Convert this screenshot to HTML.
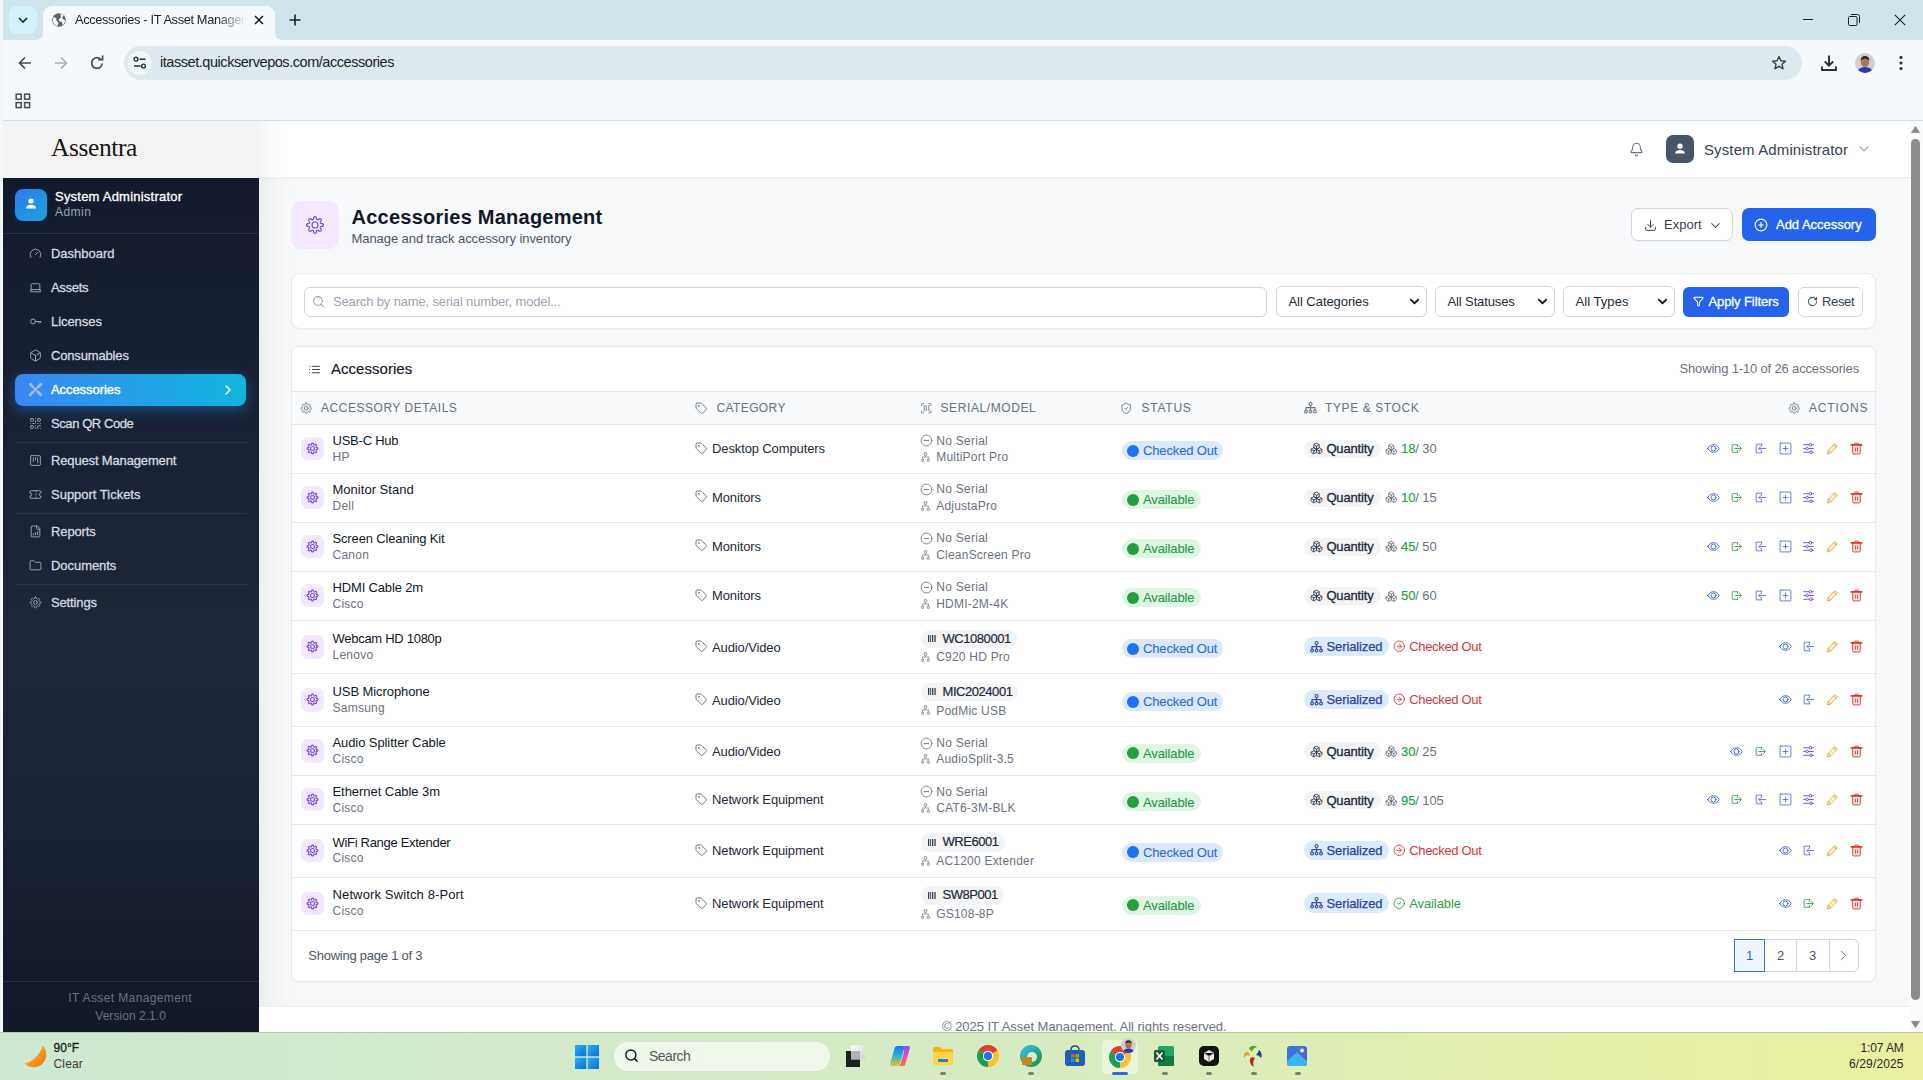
<!DOCTYPE html>
<html><head><meta charset="utf-8">
<style>
*{box-sizing:border-box;margin:0;padding:0}
html,body{width:1923px;height:1080px;overflow:hidden;font-family:"Liberation Sans",sans-serif;background:#fff;position:relative}
.abs{position:absolute}
svg{display:block;overflow:visible}
.t{position:absolute;white-space:nowrap;line-height:1}
</style></head><body>
<div class="abs" style="left:0px;top:0px;width:1923px;height:40px;background:#d0e5eb;"></div>
<div class="abs" style="left:0px;top:40px;width:1923px;height:81px;background:#f6f9fb;"></div>
<div class="abs" style="left:0px;top:120px;width:1923px;height:1px;background:#d6dcdf;"></div>
<div class="abs" style="left:0px;top:0px;width:3px;height:1032px;background:#f4f6f7;"></div>
<div class="abs" style="left:9px;top:6px;width:28px;height:28px;background:#d5f1f9;border-radius:8px;"></div>
<svg class="abs" style="left:18px;top:17px;" width="10" height="6" viewBox="0 0 10 6"><path d="M1 1 L5 5 L9 1" stroke="#1b2a33" stroke-width="1.7" fill="none"/></svg>
<div class="abs" style="left:43px;top:6px;width:232px;height:36px;background:#f6f9fb;border-radius:9px 9px 0 0;"></div>
<svg class="abs" style="left:35px;top:32px;" width="8" height="8" viewBox="0 0 8 8"><path d="M0 8 Q8 8 8 0 L8 8 Z" fill="#f6f9fb"/></svg>
<svg class="abs" style="left:275px;top:32px;" width="8" height="8" viewBox="0 0 8 8"><path d="M8 8 Q0 8 0 0 L0 8 Z" fill="#f6f9fb"/></svg>
<svg class="abs" style="left:51px;top:12px;" width="16" height="16" viewBox="0 0 16 16"><circle cx="8" cy="8" r="6.8" fill="#5f6368"/><path d="M2.6 5.2 C4.6 5.4 5.8 6.4 5.4 7.8 C5.1 9 6.8 9.4 7.2 10.6 C7.6 12 6.8 13.2 6.2 14 C4 13.4 2.4 11.6 1.9 9.2 C1.8 7.8 2.1 6.4 2.6 5.2Z M9.4 1.6 C10.8 2 12 2.8 12.8 3.8 C11.6 4.4 11 5.6 11.5 6.6 C12 7.6 13.4 7.6 14.2 8.6 C14 10.4 13 12.2 11.6 13.2 C11.2 12 11.6 10.8 10.8 10 C9.8 9.2 8.4 9.6 8 8.4 C7.6 7.2 8.8 6.6 9.6 5.8 C10.2 5 9.6 3.4 9.4 1.6Z" fill="#f6f9fb"/></svg>
<div class="t" style="left:75px;top:14.46px;font-size:12.8px;color:#1f1f1f;font-weight:400;letter-spacing:-0.35px;font-family:'Liberation Sans', sans-serif;width:172px;overflow:hidden;-webkit-mask-image:linear-gradient(90deg,#000 82%,transparent 100%);">Accessories - IT Asset Management</div>
<svg class="abs" style="left:254px;top:15px;" width="10" height="10" viewBox="0 0 10 10"><path d="M1 1 L9 9 M9 1 L1 9" stroke="#1f1f1f" stroke-width="1.6"/></svg>
<svg class="abs" style="left:289px;top:14px;" width="12" height="12" viewBox="0 0 12 12"><path d="M6 0.5 V11.5 M0.5 6 H11.5" stroke="#1f1f1f" stroke-width="1.6"/></svg>
<div class="abs" style="left:1803px;top:19px;width:10px;height:1px;background:#1f1f1f;"></div>
<svg class="abs" style="left:1848px;top:14px;" width="12" height="12" viewBox="0 0 12 12"><rect x="0.5" y="2.5" width="8.5" height="9" rx="1.2" stroke="#1f1f1f" fill="none"/><path d="M3 0.5 H9.5 Q11.5 0.5 11.5 2.5 V9" stroke="#1f1f1f" fill="none"/></svg>
<svg class="abs" style="left:1894px;top:14px;" width="12" height="12" viewBox="0 0 12 12"><path d="M0.8 0.8 L11.2 11.2 M11.2 0.8 L0.8 11.2" stroke="#1f1f1f" stroke-width="1.1"/></svg>
<svg class="abs" style="left:17px;top:55px;" width="16" height="16" viewBox="0 0 16 16"><path d="M14 8 H3 M8 2.5 L2.5 8 L8 13.5" stroke="#474c50" stroke-width="1.7" fill="none"/></svg>
<svg class="abs" style="left:53px;top:55px;" width="16" height="16" viewBox="0 0 16 16"><path d="M2 8 H13 M8 2.5 L13.5 8 L8 13.5" stroke="#a9b0b4" stroke-width="1.7" fill="none"/></svg>
<svg class="abs" style="left:89px;top:55px;" width="16" height="16" viewBox="0 0 16 16"><path d="M13.2 8.5 A5.3 5.3 0 1 1 11.6 4.2" stroke="#474c50" stroke-width="1.7" fill="none"/><path d="M9.2 4.6 H13.6 V0.4" stroke="#474c50" stroke-width="1.7" fill="none"/></svg>
<div class="abs" style="left:124px;top:46px;width:1678px;height:34px;background:#dde9ee;border-radius:17px;"></div>
<div class="abs" style="left:128px;top:51px;width:24px;height:24px;background:#f1f6f8;border-radius:12px;"></div>
<svg class="abs" style="left:133px;top:56px;" width="14" height="14" viewBox="0 0 14 14"><circle cx="3" cy="3.2" r="1.9" stroke="#2c3135" stroke-width="1.4" fill="none"/><path d="M6.5 3.2 H12.5" stroke="#2c3135" stroke-width="1.5"/><circle cx="10.5" cy="10" r="1.9" stroke="#2c3135" stroke-width="1.4" fill="none"/><path d="M1 10 H7.5" stroke="#2c3135" stroke-width="1.5"/></svg>
<div class="t" style="left:160px;top:55.43px;font-size:14.5px;color:#1f2326;font-weight:400;letter-spacing:-0.45px;font-family:'Liberation Sans', sans-serif;">itasset.quickservepos.com/accessories</div>
<svg class="abs" style="left:1771px;top:55px;" width="16" height="16" viewBox="0 0 16 16"><path d="M8 1.6 L9.9 5.8 L14.4 6.2 L11 9.2 L12 13.7 L8 11.3 L4 13.7 L5 9.2 L1.6 6.2 L6.1 5.8 Z" stroke="#3a3f43" stroke-width="1.4" fill="none" stroke-linejoin="round"/></svg>
<svg class="abs" style="left:1820px;top:54px;" width="18" height="18" viewBox="0 0 18 18"><path d="M9 1.5 V11.5 M4.8 7.5 L9 11.7 L13.2 7.5 M2 12.5 V16 H16 V12.5" stroke="#2c3135" stroke-width="1.9" fill="none"/></svg>
<svg class="abs" style="left:1855px;top:53px;" width="20" height="20" viewBox="0 0 20 20"><defs><clipPath id="av"><circle cx="10" cy="10" r="10"/></clipPath></defs><g clip-path="url(#av)"><rect width="20" height="20" fill="#cfcfcf"/><ellipse cx="10" cy="9" rx="4.2" ry="5" fill="#a8755a"/><path d="M5.6 7.5 Q6 3 10 3 Q14 3 14.4 7.5 Q12 5.5 10 5.6 Q8 5.5 5.6 7.5Z" fill="#2a1f1a"/><path d="M2 20 Q3 14 10 14 Q17 14 18 20Z" fill="#2b3aa8"/></g></svg>
<svg class="abs" style="left:1897px;top:55px;" width="8" height="16" viewBox="0 0 8 16"><circle cx="4" cy="2.4" r="1.6" fill="#2c3135"/><circle cx="4" cy="8" r="1.6" fill="#2c3135"/><circle cx="4" cy="13.6" r="1.6" fill="#2c3135"/></svg>
<svg class="abs" style="left:15px;top:93px;" width="16" height="16" viewBox="0 0 16 16"><rect x="1.2" y="1.2" width="5" height="5" stroke="#474c50" stroke-width="1.5" fill="none"/><rect x="9.6" y="1.2" width="5" height="5" stroke="#474c50" stroke-width="1.5" fill="none"/><rect x="1.2" y="9.6" width="5" height="5" stroke="#474c50" stroke-width="1.5" fill="none"/><rect x="9.6" y="9.6" width="5" height="5" stroke="#474c50" stroke-width="1.5" fill="none"/></svg>
<div class="abs" style="left:259px;top:121px;width:1651px;height:911px;background:#f8f9fb;"></div>
<div class="abs" style="left:259px;top:178px;width:32px;height:854px;background:linear-gradient(90deg,#eceef0,#f8f9fb);"></div>
<div class="abs" style="left:259px;top:121px;width:1651px;height:57px;background:#ffffff;border-bottom:1px solid #eceef1;box-shadow:0 1px 3px rgba(0,0,0,.03);"></div>
<svg class="abs" style="left:1628.50px;top:141.50px" width="15" height="15" viewBox="0 0 24 24" fill="none" stroke="#6b7280" stroke-width="1.7" stroke-linecap="round" stroke-linejoin="round"><path d="M10.268 21a2 2 0 0 0 3.464 0"/><path d="M3.262 15.326A1 1 0 0 0 4 17h16a1 1 0 0 0 .74-1.673C19.41 13.956 18 12.499 18 8A6 6 0 0 0 6 8c0 4.499-1.411 5.956-2.738 7.326"/></svg>
<div class="abs" style="left:1666px;top:135px;width:28px;height:28px;background:#475569;border-radius:7px;"></div>
<svg class="abs" style="left:1672px;top:141px;" width="16" height="16" viewBox="0 0 16 16"><circle cx="8" cy="5.2" r="2.6" fill="#fff"/><path d="M3.2 12.4 C3.2 10 5 8.9 8 8.9 C11 8.9 12.8 10 12.8 12.4 Z" fill="#fff"/></svg>
<div class="t" style="left:1704px;top:141.50px;font-size:15px;color:#374151;font-weight:400;letter-spacing:0.12px;font-family:'Liberation Sans', sans-serif;">System Administrator</div>
<svg class="abs" style="left:1855.50px;top:141.00px" width="16" height="16" viewBox="0 0 24 24" fill="none" stroke="#9ca3af" stroke-width="1.6" stroke-linecap="round" stroke-linejoin="round"><path d="m6 9 6 6 6-6"/></svg>
<div class="abs" style="left:1910px;top:121px;width:13px;height:911px;background:#fbfbfb;"></div>
<svg class="abs" style="left:1911px;top:126px;" width="9" height="7" viewBox="0 0 9 7"><path d="M0.3 6.7 L4.5 0.3 L8.7 6.7 Z" fill="#8a8a8a" stroke="#8a8a8a" stroke-width=".6" stroke-linejoin="round"/></svg>
<div class="abs" style="left:1911px;top:139px;width:9px;height:861px;background:#8c8c8c;border-radius:5px;"></div>
<svg class="abs" style="left:1911px;top:1021px;" width="9" height="7" viewBox="0 0 9 7"><path d="M0.3 0.3 L4.5 6.7 L8.7 0.3 Z" fill="#8a8a8a" stroke="#8a8a8a" stroke-width=".6" stroke-linejoin="round"/></svg>
<div class="abs" style="left:291px;top:201px;width:48px;height:48px;background:#f3e8ff;border-radius:11px;"></div>
<svg class="abs" style="left:305.00px;top:214.50px" width="20" height="20" viewBox="0 0 24 24" fill="none" stroke="#6d48c8" stroke-width="1.35" stroke-linecap="round" stroke-linejoin="round"><path d="M12.00 2.00 L12.31 2.03 L12.62 2.11 L12.92 2.24 L13.21 2.44 L13.47 2.73 L13.67 3.23 L13.70 4.39 L13.86 4.76 L14.03 5.01 L14.21 5.21 L14.39 5.37 L14.58 5.49 L14.78 5.57 L15.00 5.62 L15.24 5.64 L15.50 5.62 L15.81 5.56 L16.18 5.42 L17.02 4.61 L17.52 4.41 L17.90 4.39 L18.25 4.45 L18.56 4.56 L18.83 4.73 L19.07 4.93 L19.27 5.17 L19.44 5.44 L19.55 5.75 L19.61 6.10 L19.59 6.48 L19.39 6.98 L18.58 7.82 L18.44 8.19 L18.38 8.50 L18.36 8.76 L18.38 9.00 L18.43 9.22 L18.51 9.42 L18.63 9.61 L18.79 9.79 L18.99 9.97 L19.24 10.14 L19.61 10.30 L20.77 10.33 L21.27 10.53 L21.56 10.79 L21.76 11.08 L21.89 11.38 L21.97 11.69 L22.00 12.00 L21.97 12.31 L21.89 12.62 L21.76 12.92 L21.56 13.21 L21.27 13.47 L20.77 13.67 L19.61 13.70 L19.24 13.86 L18.99 14.03 L18.79 14.21 L18.63 14.39 L18.51 14.58 L18.43 14.78 L18.38 15.00 L18.36 15.24 L18.38 15.50 L18.44 15.81 L18.58 16.18 L19.39 17.02 L19.59 17.52 L19.61 17.90 L19.55 18.25 L19.44 18.56 L19.27 18.83 L19.07 19.07 L18.83 19.27 L18.56 19.44 L18.25 19.55 L17.90 19.61 L17.52 19.59 L17.02 19.39 L16.18 18.58 L15.81 18.44 L15.50 18.38 L15.24 18.36 L15.00 18.38 L14.78 18.43 L14.58 18.51 L14.39 18.63 L14.21 18.79 L14.03 18.99 L13.86 19.24 L13.70 19.61 L13.67 20.77 L13.47 21.27 L13.21 21.56 L12.92 21.76 L12.62 21.89 L12.31 21.97 L12.00 22.00 L11.69 21.97 L11.38 21.89 L11.08 21.76 L10.79 21.56 L10.53 21.27 L10.33 20.77 L10.30 19.61 L10.14 19.24 L9.97 18.99 L9.79 18.79 L9.61 18.63 L9.42 18.51 L9.22 18.43 L9.00 18.38 L8.76 18.36 L8.50 18.38 L8.19 18.44 L7.82 18.58 L6.98 19.39 L6.48 19.59 L6.10 19.61 L5.75 19.55 L5.44 19.44 L5.17 19.27 L4.93 19.07 L4.73 18.83 L4.56 18.56 L4.45 18.25 L4.39 17.90 L4.41 17.52 L4.61 17.02 L5.42 16.18 L5.56 15.81 L5.62 15.50 L5.64 15.24 L5.62 15.00 L5.57 14.78 L5.49 14.58 L5.37 14.39 L5.21 14.21 L5.01 14.03 L4.76 13.86 L4.39 13.70 L3.23 13.67 L2.73 13.47 L2.44 13.21 L2.24 12.92 L2.11 12.62 L2.03 12.31 L2.00 12.00 L2.03 11.69 L2.11 11.38 L2.24 11.08 L2.44 10.79 L2.73 10.53 L3.23 10.33 L4.39 10.30 L4.76 10.14 L5.01 9.97 L5.21 9.79 L5.37 9.61 L5.49 9.42 L5.57 9.22 L5.62 9.00 L5.64 8.76 L5.62 8.50 L5.56 8.19 L5.42 7.82 L4.61 6.98 L4.41 6.48 L4.39 6.10 L4.45 5.75 L4.56 5.44 L4.73 5.17 L4.93 4.93 L5.17 4.73 L5.44 4.56 L5.75 4.45 L6.10 4.39 L6.48 4.41 L6.98 4.61 L7.82 5.42 L8.19 5.56 L8.50 5.62 L8.76 5.64 L9.00 5.62 L9.22 5.57 L9.42 5.49 L9.61 5.37 L9.79 5.21 L9.97 5.01 L10.14 4.76 L10.30 4.39 L10.33 3.23 L10.53 2.73 L10.79 2.44 L11.08 2.24 L11.38 2.11 L11.69 2.03Z"/><circle cx="12" cy="12" r="3.6"/></svg>
<div class="t" style="left:351.5px;top:207.07px;font-size:20px;color:#111827;font-weight:700;letter-spacing:0.24px;font-family:'Liberation Sans', sans-serif;">Accessories Management</div>
<div class="t" style="left:351.5px;top:232.40px;font-size:13px;color:#4b5563;font-weight:400;letter-spacing:-0.07px;font-family:'Liberation Sans', sans-serif;">Manage and track accessory inventory</div>
<div class="abs" style="left:1631px;top:208px;width:102px;height:33px;background:#ffffff;border:1px solid #d4d7dc;border-radius:7px;box-sizing:border-box;box-shadow:0 1px 1px rgba(0,0,0,.04);"></div>
<svg class="abs" style="left:1643.50px;top:218.50px" width="13" height="13" viewBox="0 0 24 24" fill="none" stroke="#374151" stroke-width="1.8" stroke-linecap="round" stroke-linejoin="round"><path d="M21 15v4a2 2 0 0 1-2 2H5a2 2 0 0 1-2-2v-4"/><polyline points="7 10 12 15 17 10"/><line x1="12" x2="12" y1="15" y2="3"/></svg>
<div class="t" style="left:1664px;top:218.00px;font-size:13px;color:#374151;font-weight:400;letter-spacing:0px;font-family:'Liberation Sans', sans-serif;">Export</div>
<svg class="abs" style="left:1708.00px;top:217.50px" width="15" height="15" viewBox="0 0 24 24" fill="none" stroke="#4b5563" stroke-width="1.7" stroke-linecap="round" stroke-linejoin="round"><path d="m6 9 6 6 6-6"/></svg>
<div class="abs" style="left:1742px;top:208px;width:134px;height:33px;background:#2563eb;border-radius:7px;"></div>
<svg class="abs" style="left:1754.00px;top:218.00px" width="14" height="14" viewBox="0 0 24 24" fill="none" stroke="#ffffff" stroke-width="2" stroke-linecap="round" stroke-linejoin="round"><circle cx="12" cy="12" r="10"/><path d="M8 12h8"/><path d="M12 8v8"/></svg>
<div class="t" style="left:1776px;top:218.00px;font-size:13px;color:#ffffff;font-weight:400;letter-spacing:-0.03px;font-family:'Liberation Sans', sans-serif;-webkit-text-stroke:0.3px #ffffff;">Add Accessory</div>
<div class="abs" style="left:291px;top:273px;width:1585px;height:56px;background:#ffffff;border:1px solid #e8eaed;border-radius:9px;box-sizing:border-box;box-shadow:0 1px 2px rgba(0,0,0,.03);"></div>
<div class="abs" style="left:304px;top:287px;width:963px;height:30px;background:#ffffff;border:1px solid #d1d5db;border-radius:6px;box-sizing:border-box;"></div>
<svg class="abs" style="left:311.50px;top:295.00px" width="13" height="13" viewBox="0 0 24 24" fill="none" stroke="#9ca3af" stroke-width="2" stroke-linecap="round" stroke-linejoin="round"><circle cx="11" cy="11" r="8"/><path d="m21 21-4.3-4.3"/></svg>
<div class="t" style="left:333px;top:295.20px;font-size:13px;color:#9ca3af;font-weight:400;letter-spacing:-0.15px;font-family:'Liberation Sans', sans-serif;">Search by name, serial number, model...</div>
<div class="abs" style="left:1276px;top:286px;width:151px;height:31px;background:#ffffff;border:1px solid #d1d5db;border-radius:6px;box-sizing:border-box;"></div>
<div class="t" style="left:1288.5px;top:295.00px;font-size:13px;color:#1f2937;font-weight:400;letter-spacing:-0.05px;font-family:'Liberation Sans', sans-serif;">All Categories</div>
<svg class="abs" style="left:1406.50px;top:294.00px" width="15" height="15" viewBox="0 0 24 24" fill="none" stroke="#111111" stroke-width="2.8" stroke-linecap="round" stroke-linejoin="round"><path d="m6 9 6 6 6-6"/></svg>
<div class="abs" style="left:1435px;top:286px;width:120px;height:31px;background:#ffffff;border:1px solid #d1d5db;border-radius:6px;box-sizing:border-box;"></div>
<div class="t" style="left:1447.5px;top:295.00px;font-size:13px;color:#1f2937;font-weight:400;letter-spacing:-0.12px;font-family:'Liberation Sans', sans-serif;">All Statuses</div>
<svg class="abs" style="left:1534.50px;top:294.00px" width="15" height="15" viewBox="0 0 24 24" fill="none" stroke="#111111" stroke-width="2.8" stroke-linecap="round" stroke-linejoin="round"><path d="m6 9 6 6 6-6"/></svg>
<div class="abs" style="left:1563px;top:286px;width:112px;height:31px;background:#ffffff;border:1px solid #d1d5db;border-radius:6px;box-sizing:border-box;"></div>
<div class="t" style="left:1575.5px;top:295.00px;font-size:13px;color:#1f2937;font-weight:400;letter-spacing:0.05px;font-family:'Liberation Sans', sans-serif;">All Types</div>
<svg class="abs" style="left:1654.50px;top:294.00px" width="15" height="15" viewBox="0 0 24 24" fill="none" stroke="#111111" stroke-width="2.8" stroke-linecap="round" stroke-linejoin="round"><path d="m6 9 6 6 6-6"/></svg>
<div class="abs" style="left:1683px;top:287px;width:106px;height:30px;background:#2563eb;border-radius:6px;"></div>
<svg class="abs" style="left:1693.00px;top:296.00px" width="11" height="11" viewBox="0 0 24 24" fill="none" stroke="#ffffff" stroke-width="2.2" stroke-linecap="round" stroke-linejoin="round"><path d="M10 20a1 1 0 0 0 .553.895l2 1A1 1 0 0 0 14 21v-7a2 2 0 0 1 .517-1.341L21.74 4.67A1 1 0 0 0 21 3H3a1 1 0 0 0-.742 1.67l7.225 7.989A2 2 0 0 1 10 14z"/></svg>
<div class="t" style="left:1708.5px;top:295.00px;font-size:13px;color:#ffffff;font-weight:400;letter-spacing:-0.1px;font-family:'Liberation Sans', sans-serif;-webkit-text-stroke:0.3px #ffffff;">Apply Filters</div>
<div class="abs" style="left:1798px;top:287px;width:64.5px;height:30px;background:#ffffff;border:1px solid #d1d5db;border-radius:6px;box-sizing:border-box;"></div>
<svg class="abs" style="left:1806.50px;top:296.00px" width="11" height="11" viewBox="0 0 24 24" fill="none" stroke="#4b5563" stroke-width="2.2" stroke-linecap="round" stroke-linejoin="round"><path d="M21 12a9 9 0 1 1-9-9c2.52 0 4.93 1 6.74 2.74L21 8"/><path d="M21 3v5h-5"/></svg>
<div class="t" style="left:1822px;top:295.00px;font-size:13px;color:#374151;font-weight:400;letter-spacing:-0.34px;font-family:'Liberation Sans', sans-serif;">Reset</div>
<div class="abs" style="left:259px;top:1006px;width:1651px;height:26px;background:#ffffff;border-top:1px solid #eef0f2;"></div>
<div class="t" style="left:942px;top:1019.80px;font-size:13px;color:#6b7280;font-weight:400;letter-spacing:-0.03px;font-family:'Liberation Sans', sans-serif;">&copy; 2025 IT Asset Management. All rights reserved.</div>
<div class="abs" style="left:291px;top:346px;width:1585px;height:636px;background:#ffffff;border:1px solid #e8eaed;border-radius:7px;box-sizing:border-box;box-shadow:0 1px 2px rgba(0,0,0,.03);"></div>
<svg class="abs" style="left:308.00px;top:362.50px" width="13" height="13" viewBox="0 0 24 24" fill="none" stroke="#374151" stroke-width="2" stroke-linecap="round" stroke-linejoin="round"><path d="M3 12h.01"/><path d="M3 18h.01"/><path d="M3 6h.01"/><path d="M8 12h13"/><path d="M8 18h13"/><path d="M8 6h13"/></svg>
<div class="t" style="left:331px;top:361.30px;font-size:15px;color:#111827;font-weight:400;letter-spacing:0.03px;font-family:'Liberation Sans', sans-serif;-webkit-text-stroke:0.15px #111827;">Accessories</div>
<div class="t" style="right:64px;top:361.90px;font-size:13px;color:#6b7280;font-weight:400;letter-spacing:-0.16px;font-family:'Liberation Sans', sans-serif;">Showing 1-10 of 26 accessories</div>
<div class="abs" style="left:292px;top:391px;width:1583px;height:34px;background:#f9fafb;border-top:1px solid #e5e7eb;border-bottom:1px solid #e5e7eb;box-sizing:border-box;"></div>
<svg class="abs" style="left:300.25px;top:401.55px" width="12.5" height="12.5" viewBox="0 0 24 24" fill="none" stroke="#6b7280" stroke-width="1.7" stroke-linecap="round" stroke-linejoin="round"><path d="M12.00 2.00 L12.31 2.03 L12.62 2.11 L12.92 2.24 L13.21 2.44 L13.47 2.73 L13.67 3.23 L13.70 4.39 L13.86 4.76 L14.03 5.01 L14.21 5.21 L14.39 5.37 L14.58 5.49 L14.78 5.57 L15.00 5.62 L15.24 5.64 L15.50 5.62 L15.81 5.56 L16.18 5.42 L17.02 4.61 L17.52 4.41 L17.90 4.39 L18.25 4.45 L18.56 4.56 L18.83 4.73 L19.07 4.93 L19.27 5.17 L19.44 5.44 L19.55 5.75 L19.61 6.10 L19.59 6.48 L19.39 6.98 L18.58 7.82 L18.44 8.19 L18.38 8.50 L18.36 8.76 L18.38 9.00 L18.43 9.22 L18.51 9.42 L18.63 9.61 L18.79 9.79 L18.99 9.97 L19.24 10.14 L19.61 10.30 L20.77 10.33 L21.27 10.53 L21.56 10.79 L21.76 11.08 L21.89 11.38 L21.97 11.69 L22.00 12.00 L21.97 12.31 L21.89 12.62 L21.76 12.92 L21.56 13.21 L21.27 13.47 L20.77 13.67 L19.61 13.70 L19.24 13.86 L18.99 14.03 L18.79 14.21 L18.63 14.39 L18.51 14.58 L18.43 14.78 L18.38 15.00 L18.36 15.24 L18.38 15.50 L18.44 15.81 L18.58 16.18 L19.39 17.02 L19.59 17.52 L19.61 17.90 L19.55 18.25 L19.44 18.56 L19.27 18.83 L19.07 19.07 L18.83 19.27 L18.56 19.44 L18.25 19.55 L17.90 19.61 L17.52 19.59 L17.02 19.39 L16.18 18.58 L15.81 18.44 L15.50 18.38 L15.24 18.36 L15.00 18.38 L14.78 18.43 L14.58 18.51 L14.39 18.63 L14.21 18.79 L14.03 18.99 L13.86 19.24 L13.70 19.61 L13.67 20.77 L13.47 21.27 L13.21 21.56 L12.92 21.76 L12.62 21.89 L12.31 21.97 L12.00 22.00 L11.69 21.97 L11.38 21.89 L11.08 21.76 L10.79 21.56 L10.53 21.27 L10.33 20.77 L10.30 19.61 L10.14 19.24 L9.97 18.99 L9.79 18.79 L9.61 18.63 L9.42 18.51 L9.22 18.43 L9.00 18.38 L8.76 18.36 L8.50 18.38 L8.19 18.44 L7.82 18.58 L6.98 19.39 L6.48 19.59 L6.10 19.61 L5.75 19.55 L5.44 19.44 L5.17 19.27 L4.93 19.07 L4.73 18.83 L4.56 18.56 L4.45 18.25 L4.39 17.90 L4.41 17.52 L4.61 17.02 L5.42 16.18 L5.56 15.81 L5.62 15.50 L5.64 15.24 L5.62 15.00 L5.57 14.78 L5.49 14.58 L5.37 14.39 L5.21 14.21 L5.01 14.03 L4.76 13.86 L4.39 13.70 L3.23 13.67 L2.73 13.47 L2.44 13.21 L2.24 12.92 L2.11 12.62 L2.03 12.31 L2.00 12.00 L2.03 11.69 L2.11 11.38 L2.24 11.08 L2.44 10.79 L2.73 10.53 L3.23 10.33 L4.39 10.30 L4.76 10.14 L5.01 9.97 L5.21 9.79 L5.37 9.61 L5.49 9.42 L5.57 9.22 L5.62 9.00 L5.64 8.76 L5.62 8.50 L5.56 8.19 L5.42 7.82 L4.61 6.98 L4.41 6.48 L4.39 6.10 L4.45 5.75 L4.56 5.44 L4.73 5.17 L4.93 4.93 L5.17 4.73 L5.44 4.56 L5.75 4.45 L6.10 4.39 L6.48 4.41 L6.98 4.61 L7.82 5.42 L8.19 5.56 L8.50 5.62 L8.76 5.64 L9.00 5.62 L9.22 5.57 L9.42 5.49 L9.61 5.37 L9.79 5.21 L9.97 5.01 L10.14 4.76 L10.30 4.39 L10.33 3.23 L10.53 2.73 L10.79 2.44 L11.08 2.24 L11.38 2.11 L11.69 2.03Z"/><circle cx="12" cy="12" r="3.6"/></svg>
<div class="t" style="left:321px;top:402.04px;font-size:12px;color:#6b7280;font-weight:400;letter-spacing:0.53px;font-family:'Liberation Sans', sans-serif;-webkit-text-stroke:0.05px #6b7280;">ACCESSORY DETAILS</div>
<svg class="abs" style="left:695.25px;top:401.55px" width="12.5" height="12.5" viewBox="0 0 24 24" fill="none" stroke="#6b7280" stroke-width="1.7" stroke-linecap="round" stroke-linejoin="round"><path d="M12.586 2.586A2 2 0 0 0 11.172 2H4a2 2 0 0 0-2 2v7.172a2 2 0 0 0 .586 1.414l8.704 8.704a2.426 2.426 0 0 0 3.42 0l6.58-6.58a2.426 2.426 0 0 0 0-3.42z"/><circle cx="7.5" cy="7.5" r=".5" fill="currentColor"/></svg>
<div class="t" style="left:716.5px;top:402.04px;font-size:12px;color:#6b7280;font-weight:400;letter-spacing:0.38px;font-family:'Liberation Sans', sans-serif;-webkit-text-stroke:0.05px #6b7280;">CATEGORY</div>
<svg class="abs" style="left:919.55px;top:401.55px" width="12.5" height="12.5" viewBox="0 0 24 24" fill="none" stroke="#6b7280" stroke-width="1.7" stroke-linecap="round" stroke-linejoin="round"><path d="M3 7V5a2 2 0 0 1 2-2h2"/><path d="M17 3h2a2 2 0 0 1 2 2v2"/><path d="M21 17v2a2 2 0 0 1-2 2h-2"/><path d="M7 21H5a2 2 0 0 1-2-2v-2"/><path d="M8 7v10"/><path d="M12 7v10"/><path d="M17 7v10"/></svg>
<div class="t" style="left:940.5px;top:402.04px;font-size:12px;color:#6b7280;font-weight:400;letter-spacing:0.6px;font-family:'Liberation Sans', sans-serif;-webkit-text-stroke:0.05px #6b7280;">SERIAL/MODEL</div>
<svg class="abs" style="left:1120.25px;top:401.55px" width="12.5" height="12.5" viewBox="0 0 24 24" fill="none" stroke="#6b7280" stroke-width="1.7" stroke-linecap="round" stroke-linejoin="round"><path d="M20 13c0 5-3.5 7.5-7.66 8.95a1 1 0 0 1-.67-.01C7.5 20.5 4 18 4 13V6a1 1 0 0 1 1-1c2 0 4.5-1.2 6.24-2.72a1.17 1.17 0 0 1 1.52 0C14.51 3.81 17 5 19 5a1 1 0 0 1 1 1z"/><path d="m9 12 2 2 4-4"/></svg>
<div class="t" style="left:1141.5px;top:402.04px;font-size:12px;color:#6b7280;font-weight:400;letter-spacing:0.75px;font-family:'Liberation Sans', sans-serif;-webkit-text-stroke:0.05px #6b7280;">STATUS</div>
<svg class="abs" style="left:1303.8px;top:401.8px;" width="13" height="12" viewBox="0 0 13 12"><g fill="none" stroke="#6b7280" stroke-width="1.1"><circle cx="6.5" cy="2" r="1.5"/><path d="M6.5 3.5V5.6 M2 8.2V5.6H11V8.2 M6.5 5.6V8.2"/><circle cx="2" cy="9.6" r="1.4"/><circle cx="6.5" cy="9.6" r="1.4"/><circle cx="11" cy="9.6" r="1.4"/></g></svg>
<div class="t" style="left:1325px;top:402.04px;font-size:12px;color:#6b7280;font-weight:400;letter-spacing:0.6px;font-family:'Liberation Sans', sans-serif;-webkit-text-stroke:0.05px #6b7280;">TYPE &amp; STOCK</div>
<svg class="abs" style="left:1788.05px;top:401.55px" width="12.5" height="12.5" viewBox="0 0 24 24" fill="none" stroke="#6b7280" stroke-width="1.7" stroke-linecap="round" stroke-linejoin="round"><path d="M12.00 2.00 L12.31 2.03 L12.62 2.11 L12.92 2.24 L13.21 2.44 L13.47 2.73 L13.67 3.23 L13.70 4.39 L13.86 4.76 L14.03 5.01 L14.21 5.21 L14.39 5.37 L14.58 5.49 L14.78 5.57 L15.00 5.62 L15.24 5.64 L15.50 5.62 L15.81 5.56 L16.18 5.42 L17.02 4.61 L17.52 4.41 L17.90 4.39 L18.25 4.45 L18.56 4.56 L18.83 4.73 L19.07 4.93 L19.27 5.17 L19.44 5.44 L19.55 5.75 L19.61 6.10 L19.59 6.48 L19.39 6.98 L18.58 7.82 L18.44 8.19 L18.38 8.50 L18.36 8.76 L18.38 9.00 L18.43 9.22 L18.51 9.42 L18.63 9.61 L18.79 9.79 L18.99 9.97 L19.24 10.14 L19.61 10.30 L20.77 10.33 L21.27 10.53 L21.56 10.79 L21.76 11.08 L21.89 11.38 L21.97 11.69 L22.00 12.00 L21.97 12.31 L21.89 12.62 L21.76 12.92 L21.56 13.21 L21.27 13.47 L20.77 13.67 L19.61 13.70 L19.24 13.86 L18.99 14.03 L18.79 14.21 L18.63 14.39 L18.51 14.58 L18.43 14.78 L18.38 15.00 L18.36 15.24 L18.38 15.50 L18.44 15.81 L18.58 16.18 L19.39 17.02 L19.59 17.52 L19.61 17.90 L19.55 18.25 L19.44 18.56 L19.27 18.83 L19.07 19.07 L18.83 19.27 L18.56 19.44 L18.25 19.55 L17.90 19.61 L17.52 19.59 L17.02 19.39 L16.18 18.58 L15.81 18.44 L15.50 18.38 L15.24 18.36 L15.00 18.38 L14.78 18.43 L14.58 18.51 L14.39 18.63 L14.21 18.79 L14.03 18.99 L13.86 19.24 L13.70 19.61 L13.67 20.77 L13.47 21.27 L13.21 21.56 L12.92 21.76 L12.62 21.89 L12.31 21.97 L12.00 22.00 L11.69 21.97 L11.38 21.89 L11.08 21.76 L10.79 21.56 L10.53 21.27 L10.33 20.77 L10.30 19.61 L10.14 19.24 L9.97 18.99 L9.79 18.79 L9.61 18.63 L9.42 18.51 L9.22 18.43 L9.00 18.38 L8.76 18.36 L8.50 18.38 L8.19 18.44 L7.82 18.58 L6.98 19.39 L6.48 19.59 L6.10 19.61 L5.75 19.55 L5.44 19.44 L5.17 19.27 L4.93 19.07 L4.73 18.83 L4.56 18.56 L4.45 18.25 L4.39 17.90 L4.41 17.52 L4.61 17.02 L5.42 16.18 L5.56 15.81 L5.62 15.50 L5.64 15.24 L5.62 15.00 L5.57 14.78 L5.49 14.58 L5.37 14.39 L5.21 14.21 L5.01 14.03 L4.76 13.86 L4.39 13.70 L3.23 13.67 L2.73 13.47 L2.44 13.21 L2.24 12.92 L2.11 12.62 L2.03 12.31 L2.00 12.00 L2.03 11.69 L2.11 11.38 L2.24 11.08 L2.44 10.79 L2.73 10.53 L3.23 10.33 L4.39 10.30 L4.76 10.14 L5.01 9.97 L5.21 9.79 L5.37 9.61 L5.49 9.42 L5.57 9.22 L5.62 9.00 L5.64 8.76 L5.62 8.50 L5.56 8.19 L5.42 7.82 L4.61 6.98 L4.41 6.48 L4.39 6.10 L4.45 5.75 L4.56 5.44 L4.73 5.17 L4.93 4.93 L5.17 4.73 L5.44 4.56 L5.75 4.45 L6.10 4.39 L6.48 4.41 L6.98 4.61 L7.82 5.42 L8.19 5.56 L8.50 5.62 L8.76 5.64 L9.00 5.62 L9.22 5.57 L9.42 5.49 L9.61 5.37 L9.79 5.21 L9.97 5.01 L10.14 4.76 L10.30 4.39 L10.33 3.23 L10.53 2.73 L10.79 2.44 L11.08 2.24 L11.38 2.11 L11.69 2.03Z"/><circle cx="12" cy="12" r="3.6"/></svg>
<div class="t" style="left:1809px;top:402.04px;font-size:12px;color:#6b7280;font-weight:400;letter-spacing:0.85px;font-family:'Liberation Sans', sans-serif;-webkit-text-stroke:0.05px #6b7280;">ACTIONS</div>
<div class="abs" style="left:292px;top:472.5px;width:1583px;height:1px;background:#e5e7eb;"></div>
<div class="abs" style="left:300.5px;top:436.75px;width:23.5px;height:23.5px;background:#f3e8ff;border-radius:7px;"></div>
<svg class="abs" style="left:305.70px;top:441.75px" width="13" height="13" viewBox="0 0 24 24" fill="none" stroke="#7a4fd6" stroke-width="2.1" stroke-linecap="round" stroke-linejoin="round"><path d="M12.00 2.00 L12.31 2.03 L12.62 2.11 L12.92 2.24 L13.21 2.44 L13.47 2.73 L13.67 3.23 L13.70 4.39 L13.86 4.76 L14.03 5.01 L14.21 5.21 L14.39 5.37 L14.58 5.49 L14.78 5.57 L15.00 5.62 L15.24 5.64 L15.50 5.62 L15.81 5.56 L16.18 5.42 L17.02 4.61 L17.52 4.41 L17.90 4.39 L18.25 4.45 L18.56 4.56 L18.83 4.73 L19.07 4.93 L19.27 5.17 L19.44 5.44 L19.55 5.75 L19.61 6.10 L19.59 6.48 L19.39 6.98 L18.58 7.82 L18.44 8.19 L18.38 8.50 L18.36 8.76 L18.38 9.00 L18.43 9.22 L18.51 9.42 L18.63 9.61 L18.79 9.79 L18.99 9.97 L19.24 10.14 L19.61 10.30 L20.77 10.33 L21.27 10.53 L21.56 10.79 L21.76 11.08 L21.89 11.38 L21.97 11.69 L22.00 12.00 L21.97 12.31 L21.89 12.62 L21.76 12.92 L21.56 13.21 L21.27 13.47 L20.77 13.67 L19.61 13.70 L19.24 13.86 L18.99 14.03 L18.79 14.21 L18.63 14.39 L18.51 14.58 L18.43 14.78 L18.38 15.00 L18.36 15.24 L18.38 15.50 L18.44 15.81 L18.58 16.18 L19.39 17.02 L19.59 17.52 L19.61 17.90 L19.55 18.25 L19.44 18.56 L19.27 18.83 L19.07 19.07 L18.83 19.27 L18.56 19.44 L18.25 19.55 L17.90 19.61 L17.52 19.59 L17.02 19.39 L16.18 18.58 L15.81 18.44 L15.50 18.38 L15.24 18.36 L15.00 18.38 L14.78 18.43 L14.58 18.51 L14.39 18.63 L14.21 18.79 L14.03 18.99 L13.86 19.24 L13.70 19.61 L13.67 20.77 L13.47 21.27 L13.21 21.56 L12.92 21.76 L12.62 21.89 L12.31 21.97 L12.00 22.00 L11.69 21.97 L11.38 21.89 L11.08 21.76 L10.79 21.56 L10.53 21.27 L10.33 20.77 L10.30 19.61 L10.14 19.24 L9.97 18.99 L9.79 18.79 L9.61 18.63 L9.42 18.51 L9.22 18.43 L9.00 18.38 L8.76 18.36 L8.50 18.38 L8.19 18.44 L7.82 18.58 L6.98 19.39 L6.48 19.59 L6.10 19.61 L5.75 19.55 L5.44 19.44 L5.17 19.27 L4.93 19.07 L4.73 18.83 L4.56 18.56 L4.45 18.25 L4.39 17.90 L4.41 17.52 L4.61 17.02 L5.42 16.18 L5.56 15.81 L5.62 15.50 L5.64 15.24 L5.62 15.00 L5.57 14.78 L5.49 14.58 L5.37 14.39 L5.21 14.21 L5.01 14.03 L4.76 13.86 L4.39 13.70 L3.23 13.67 L2.73 13.47 L2.44 13.21 L2.24 12.92 L2.11 12.62 L2.03 12.31 L2.00 12.00 L2.03 11.69 L2.11 11.38 L2.24 11.08 L2.44 10.79 L2.73 10.53 L3.23 10.33 L4.39 10.30 L4.76 10.14 L5.01 9.97 L5.21 9.79 L5.37 9.61 L5.49 9.42 L5.57 9.22 L5.62 9.00 L5.64 8.76 L5.62 8.50 L5.56 8.19 L5.42 7.82 L4.61 6.98 L4.41 6.48 L4.39 6.10 L4.45 5.75 L4.56 5.44 L4.73 5.17 L4.93 4.93 L5.17 4.73 L5.44 4.56 L5.75 4.45 L6.10 4.39 L6.48 4.41 L6.98 4.61 L7.82 5.42 L8.19 5.56 L8.50 5.62 L8.76 5.64 L9.00 5.62 L9.22 5.57 L9.42 5.49 L9.61 5.37 L9.79 5.21 L9.97 5.01 L10.14 4.76 L10.30 4.39 L10.33 3.23 L10.53 2.73 L10.79 2.44 L11.08 2.24 L11.38 2.11 L11.69 2.03Z"/><circle cx="12" cy="12" r="3.6"/></svg>
<div class="t" style="left:332.5px;top:434.30px;font-size:13px;color:#111827;font-weight:400;letter-spacing:-0.23px;font-family:'Liberation Sans', sans-serif;">USB-C Hub</div>
<div class="t" style="left:332.5px;top:451.24px;font-size:12px;color:#6b7280;font-weight:400;letter-spacing:0.25px;font-family:'Liberation Sans', sans-serif;">HP</div>
<svg class="abs" style="left:695.25px;top:441.50px" width="12.5" height="12.5" viewBox="0 0 24 24" fill="none" stroke="#6b7280" stroke-width="1.9" stroke-linecap="round" stroke-linejoin="round"><path d="M12.586 2.586A2 2 0 0 0 11.172 2H4a2 2 0 0 0-2 2v7.172a2 2 0 0 0 .586 1.414l8.704 8.704a2.426 2.426 0 0 0 3.42 0l6.58-6.58a2.426 2.426 0 0 0 0-3.42z"/><circle cx="7.5" cy="7.5" r=".5" fill="currentColor"/></svg>
<div class="t" style="left:712px;top:442.25px;font-size:13px;color:#1f2937;font-weight:400;letter-spacing:-0.12px;font-family:'Liberation Sans', sans-serif;">Desktop Computers</div>
<svg class="abs" style="left:919.50px;top:434.40px" width="13" height="13" viewBox="0 0 24 24" fill="none" stroke="#6b7280" stroke-width="1.6" stroke-linecap="round" stroke-linejoin="round"><circle cx="12" cy="12" r="10"/><path d="M8 12h8"/></svg>
<div class="t" style="left:936.2px;top:434.64px;font-size:12px;color:#6b7280;font-weight:400;letter-spacing:0.28px;font-family:'Liberation Sans', sans-serif;">No Serial</div>
<svg class="abs" style="left:921.3px;top:452.2px;" width="9" height="10" viewBox="0 0 9 10"><g fill="none" stroke="#9ca3af" stroke-width="1.1"><circle cx="4.5" cy="2" r="1.4"/><path d="M4.5 3.4V5 M1.6 7.2V5H7.4V7.2"/><ellipse cx="1.6" cy="8.3" rx="1.1" ry="1.2"/><ellipse cx="7.4" cy="8.3" rx="1.1" ry="1.2"/></g></svg>
<div class="t" style="left:936.2px;top:451.34px;font-size:12px;color:#6b7280;font-weight:400;letter-spacing:0.22px;font-family:'Liberation Sans', sans-serif;">MultiPort Pro</div>
<div class="abs" style="left:1121.5px;top:441.25px;width:101px;height:19px;background:#dde9fb;border-radius:10px;"></div>
<div class="abs" style="left:1127px;top:444.75px;width:12px;height:12px;background:#1a73f0;border-radius:6px;"></div>
<div class="t" style="left:1143px;top:444.35px;font-size:13px;color:#1f6fdc;font-weight:400;letter-spacing:-0.14px;font-family:'Liberation Sans', sans-serif;-webkit-text-stroke:0.12px #1f6fdc;">Checked Out</div>
<div class="abs" style="left:1304px;top:439.75px;width:77px;height:18px;background:#f3f4f6;border-radius:9px;"></div>
<svg class="abs" style="left:1309.50px;top:442.25px" width="13" height="13" viewBox="0 0 24 24" fill="none" stroke="#374151" stroke-width="1.7" stroke-linecap="round" stroke-linejoin="round"><path d="M2.97 12.92A2 2 0 0 0 2 14.63v3.24a2 2 0 0 0 .97 1.71l3 1.8a2 2 0 0 0 2.06 0L12 19v-5.5l-5-3-4.03 2.42Z"/><path d="m7 16.5-4.74-2.85"/><path d="m7 16.5 5-3"/><path d="M7 16.5v5.17"/><path d="M12 13.5V19l3.97 2.38a2 2 0 0 0 2.06 0l3-1.8a2 2 0 0 0 .97-1.71v-3.24a2 2 0 0 0-.97-1.71L17 10.5l-5 3Z"/><path d="m17 16.5-5-3"/><path d="m17 16.5 4.74-2.85"/><path d="M17 16.5v5.17"/><path d="M7.97 4.42A2 2 0 0 0 7 6.13v4.37l5 3 5-3V6.13a2 2 0 0 0-.97-1.71l-3-1.8a2 2 0 0 0-2.06 0l-3 1.8Z"/><path d="M12 8 7.26 5.15"/><path d="m12 8 4.74-2.85"/><path d="M12 13.5V8"/></svg>
<div class="t" style="left:1326.4px;top:442.35px;font-size:13px;color:#1f2937;font-weight:400;letter-spacing:-0.15px;font-family:'Liberation Sans', sans-serif;-webkit-text-stroke:0.3px #1f2937;">Quantity</div>
<svg class="abs" style="left:1384.75px;top:442.50px" width="12.5" height="12.5" viewBox="0 0 24 24" fill="none" stroke="#6b7280" stroke-width="1.6" stroke-linecap="round" stroke-linejoin="round"><path d="M2.97 12.92A2 2 0 0 0 2 14.63v3.24a2 2 0 0 0 .97 1.71l3 1.8a2 2 0 0 0 2.06 0L12 19v-5.5l-5-3-4.03 2.42Z"/><path d="m7 16.5-4.74-2.85"/><path d="m7 16.5 5-3"/><path d="M7 16.5v5.17"/><path d="M12 13.5V19l3.97 2.38a2 2 0 0 0 2.06 0l3-1.8a2 2 0 0 0 .97-1.71v-3.24a2 2 0 0 0-.97-1.71L17 10.5l-5 3Z"/><path d="m17 16.5-5-3"/><path d="m17 16.5 4.74-2.85"/><path d="M17 16.5v5.17"/><path d="M7.97 4.42A2 2 0 0 0 7 6.13v4.37l5 3 5-3V6.13a2 2 0 0 0-.97-1.71l-3-1.8a2 2 0 0 0-2.06 0l-3 1.8Z"/><path d="M12 8 7.26 5.15"/><path d="m12 8 4.74-2.85"/><path d="M12 13.5V8"/></svg>
<div class="t" style="left:1401px;top:442.35px;font-size:13px;letter-spacing:-0.1px;color:#6b7280"><span style="color:#22a04b;-webkit-text-stroke:0.15px #22a04b;letter-spacing:-0.1px">18</span>/ 30</div>
<svg class="abs" style="left:1706.50px;top:442.25px" width="13" height="13" viewBox="0 0 24 24" fill="none" stroke="#4a67d6" stroke-width="1.7" stroke-linecap="round" stroke-linejoin="round"><path d="M1.5 12C4 7 8 5 12 5s8 2 10.5 7C20 17 16 19 12 19S4 17 1.5 12Z"/><circle cx="12" cy="12" r="4.6"/></svg>
<svg class="abs" style="left:1730.30px;top:442.25px" width="13" height="13" viewBox="0 0 24 24" fill="none" stroke="#55a066" stroke-width="1.8" stroke-linecap="round" stroke-linejoin="round"><path d="M14 5H5a1 1 0 0 0-1 1v12a1 1 0 0 0 1 1h9"/><path d="M14 5v3"/><path d="M14 16v3"/><path d="M9 12h12"/><path d="m17 8 4 4-4 4"/></svg>
<svg class="abs" style="left:1753.50px;top:442.25px" width="13" height="13" viewBox="0 0 24 24" fill="none" stroke="#6a7fd6" stroke-width="1.8" stroke-linecap="round" stroke-linejoin="round"><path d="M14 4H4v16h10"/><path d="M14 4v3.5"/><path d="M14 16.5V20"/><path d="M22 12H9"/><path d="m13 8-4 4 4 4"/></svg>
<svg class="abs" style="left:1778.50px;top:442.25px" width="13" height="13" viewBox="0 0 24 24" fill="none" stroke="#4562d0" stroke-width="1.5" stroke-linecap="round" stroke-linejoin="round"><rect width="20" height="20" x="2" y="2" rx="1"/><path d="M7.5 12h9"/><path d="M12 7.5v9"/></svg>
<svg class="abs" style="left:1802.20px;top:442.25px" width="13" height="13" viewBox="0 0 24 24" fill="none" stroke="#8552d8" stroke-width="1.8" stroke-linecap="round" stroke-linejoin="round"><path d="M3 5h10"/><path d="M18 5h3"/><path d="M3 12h4"/><path d="M12 12h9"/><path d="M3 19h11"/><path d="M19 19h2"/><circle cx="15.5" cy="5" r="2.5"/><circle cx="9.5" cy="12" r="2.5"/><circle cx="16.5" cy="19" r="2.5"/></svg>
<svg class="abs" style="left:1826.00px;top:442.25px" width="13" height="13" viewBox="0 0 24 24" fill="none" stroke="#d6ab40" stroke-width="1.8" stroke-linecap="round" stroke-linejoin="round"><path d="M2.5 21.5 L4 15.5 L16.5 3 L21 7.5 L8.5 20 Z" fill="#fbf1d6"/><path d="M4 15.5 L8.5 20"/><path d="M14 5.5 L18.5 10"/></svg>
<svg class="abs" style="left:1850.30px;top:442.25px" width="13" height="13" viewBox="0 0 24 24" fill="none" stroke="#d83636" stroke-width="1.7" stroke-linecap="round" stroke-linejoin="round"><path d="M19 6v14a2 2 0 0 1-2 2H7a2 2 0 0 1-2-2V6" fill="#fde3e3"/><path d="M2.5 5.5h19" stroke-width="3.2"/><path d="M8 6V4a2 2 0 0 1 2-2h4a2 2 0 0 1 2 2v2"/><path d="M10 11v6"/><path d="M14 11v6"/></svg>
<div class="abs" style="left:292px;top:521.5px;width:1583px;height:1px;background:#e5e7eb;"></div>
<div class="abs" style="left:300.5px;top:485.5px;width:23.5px;height:23.5px;background:#f3e8ff;border-radius:7px;"></div>
<svg class="abs" style="left:305.70px;top:490.50px" width="13" height="13" viewBox="0 0 24 24" fill="none" stroke="#7a4fd6" stroke-width="2.1" stroke-linecap="round" stroke-linejoin="round"><path d="M12.00 2.00 L12.31 2.03 L12.62 2.11 L12.92 2.24 L13.21 2.44 L13.47 2.73 L13.67 3.23 L13.70 4.39 L13.86 4.76 L14.03 5.01 L14.21 5.21 L14.39 5.37 L14.58 5.49 L14.78 5.57 L15.00 5.62 L15.24 5.64 L15.50 5.62 L15.81 5.56 L16.18 5.42 L17.02 4.61 L17.52 4.41 L17.90 4.39 L18.25 4.45 L18.56 4.56 L18.83 4.73 L19.07 4.93 L19.27 5.17 L19.44 5.44 L19.55 5.75 L19.61 6.10 L19.59 6.48 L19.39 6.98 L18.58 7.82 L18.44 8.19 L18.38 8.50 L18.36 8.76 L18.38 9.00 L18.43 9.22 L18.51 9.42 L18.63 9.61 L18.79 9.79 L18.99 9.97 L19.24 10.14 L19.61 10.30 L20.77 10.33 L21.27 10.53 L21.56 10.79 L21.76 11.08 L21.89 11.38 L21.97 11.69 L22.00 12.00 L21.97 12.31 L21.89 12.62 L21.76 12.92 L21.56 13.21 L21.27 13.47 L20.77 13.67 L19.61 13.70 L19.24 13.86 L18.99 14.03 L18.79 14.21 L18.63 14.39 L18.51 14.58 L18.43 14.78 L18.38 15.00 L18.36 15.24 L18.38 15.50 L18.44 15.81 L18.58 16.18 L19.39 17.02 L19.59 17.52 L19.61 17.90 L19.55 18.25 L19.44 18.56 L19.27 18.83 L19.07 19.07 L18.83 19.27 L18.56 19.44 L18.25 19.55 L17.90 19.61 L17.52 19.59 L17.02 19.39 L16.18 18.58 L15.81 18.44 L15.50 18.38 L15.24 18.36 L15.00 18.38 L14.78 18.43 L14.58 18.51 L14.39 18.63 L14.21 18.79 L14.03 18.99 L13.86 19.24 L13.70 19.61 L13.67 20.77 L13.47 21.27 L13.21 21.56 L12.92 21.76 L12.62 21.89 L12.31 21.97 L12.00 22.00 L11.69 21.97 L11.38 21.89 L11.08 21.76 L10.79 21.56 L10.53 21.27 L10.33 20.77 L10.30 19.61 L10.14 19.24 L9.97 18.99 L9.79 18.79 L9.61 18.63 L9.42 18.51 L9.22 18.43 L9.00 18.38 L8.76 18.36 L8.50 18.38 L8.19 18.44 L7.82 18.58 L6.98 19.39 L6.48 19.59 L6.10 19.61 L5.75 19.55 L5.44 19.44 L5.17 19.27 L4.93 19.07 L4.73 18.83 L4.56 18.56 L4.45 18.25 L4.39 17.90 L4.41 17.52 L4.61 17.02 L5.42 16.18 L5.56 15.81 L5.62 15.50 L5.64 15.24 L5.62 15.00 L5.57 14.78 L5.49 14.58 L5.37 14.39 L5.21 14.21 L5.01 14.03 L4.76 13.86 L4.39 13.70 L3.23 13.67 L2.73 13.47 L2.44 13.21 L2.24 12.92 L2.11 12.62 L2.03 12.31 L2.00 12.00 L2.03 11.69 L2.11 11.38 L2.24 11.08 L2.44 10.79 L2.73 10.53 L3.23 10.33 L4.39 10.30 L4.76 10.14 L5.01 9.97 L5.21 9.79 L5.37 9.61 L5.49 9.42 L5.57 9.22 L5.62 9.00 L5.64 8.76 L5.62 8.50 L5.56 8.19 L5.42 7.82 L4.61 6.98 L4.41 6.48 L4.39 6.10 L4.45 5.75 L4.56 5.44 L4.73 5.17 L4.93 4.93 L5.17 4.73 L5.44 4.56 L5.75 4.45 L6.10 4.39 L6.48 4.41 L6.98 4.61 L7.82 5.42 L8.19 5.56 L8.50 5.62 L8.76 5.64 L9.00 5.62 L9.22 5.57 L9.42 5.49 L9.61 5.37 L9.79 5.21 L9.97 5.01 L10.14 4.76 L10.30 4.39 L10.33 3.23 L10.53 2.73 L10.79 2.44 L11.08 2.24 L11.38 2.11 L11.69 2.03Z"/><circle cx="12" cy="12" r="3.6"/></svg>
<div class="t" style="left:332.5px;top:482.80px;font-size:13px;color:#111827;font-weight:400;letter-spacing:0.02px;font-family:'Liberation Sans', sans-serif;">Monitor Stand</div>
<div class="t" style="left:332.5px;top:499.74px;font-size:12px;color:#6b7280;font-weight:400;letter-spacing:0.25px;font-family:'Liberation Sans', sans-serif;">Dell</div>
<svg class="abs" style="left:695.25px;top:490.25px" width="12.5" height="12.5" viewBox="0 0 24 24" fill="none" stroke="#6b7280" stroke-width="1.9" stroke-linecap="round" stroke-linejoin="round"><path d="M12.586 2.586A2 2 0 0 0 11.172 2H4a2 2 0 0 0-2 2v7.172a2 2 0 0 0 .586 1.414l8.704 8.704a2.426 2.426 0 0 0 3.42 0l6.58-6.58a2.426 2.426 0 0 0 0-3.42z"/><circle cx="7.5" cy="7.5" r=".5" fill="currentColor"/></svg>
<div class="t" style="left:712px;top:491.00px;font-size:13px;color:#1f2937;font-weight:400;letter-spacing:-0.12px;font-family:'Liberation Sans', sans-serif;">Monitors</div>
<svg class="abs" style="left:919.50px;top:482.90px" width="13" height="13" viewBox="0 0 24 24" fill="none" stroke="#6b7280" stroke-width="1.6" stroke-linecap="round" stroke-linejoin="round"><circle cx="12" cy="12" r="10"/><path d="M8 12h8"/></svg>
<div class="t" style="left:936.2px;top:483.14px;font-size:12px;color:#6b7280;font-weight:400;letter-spacing:0.28px;font-family:'Liberation Sans', sans-serif;">No Serial</div>
<svg class="abs" style="left:921.3px;top:500.7px;" width="9" height="10" viewBox="0 0 9 10"><g fill="none" stroke="#9ca3af" stroke-width="1.1"><circle cx="4.5" cy="2" r="1.4"/><path d="M4.5 3.4V5 M1.6 7.2V5H7.4V7.2"/><ellipse cx="1.6" cy="8.3" rx="1.1" ry="1.2"/><ellipse cx="7.4" cy="8.3" rx="1.1" ry="1.2"/></g></svg>
<div class="t" style="left:936.2px;top:499.84px;font-size:12px;color:#6b7280;font-weight:400;letter-spacing:0.22px;font-family:'Liberation Sans', sans-serif;">AdjustaPro</div>
<div class="abs" style="left:1121.5px;top:490.0px;width:79px;height:19px;background:#e0f6e5;border-radius:10px;"></div>
<div class="abs" style="left:1127px;top:493.5px;width:12px;height:12px;background:#22a03c;border-radius:6px;"></div>
<div class="t" style="left:1143px;top:493.10px;font-size:13px;color:#279a47;font-weight:400;letter-spacing:-0.12px;font-family:'Liberation Sans', sans-serif;-webkit-text-stroke:0.12px #279a47;">Available</div>
<div class="abs" style="left:1304px;top:488.5px;width:77px;height:18px;background:#f3f4f6;border-radius:9px;"></div>
<svg class="abs" style="left:1309.50px;top:491.00px" width="13" height="13" viewBox="0 0 24 24" fill="none" stroke="#374151" stroke-width="1.7" stroke-linecap="round" stroke-linejoin="round"><path d="M2.97 12.92A2 2 0 0 0 2 14.63v3.24a2 2 0 0 0 .97 1.71l3 1.8a2 2 0 0 0 2.06 0L12 19v-5.5l-5-3-4.03 2.42Z"/><path d="m7 16.5-4.74-2.85"/><path d="m7 16.5 5-3"/><path d="M7 16.5v5.17"/><path d="M12 13.5V19l3.97 2.38a2 2 0 0 0 2.06 0l3-1.8a2 2 0 0 0 .97-1.71v-3.24a2 2 0 0 0-.97-1.71L17 10.5l-5 3Z"/><path d="m17 16.5-5-3"/><path d="m17 16.5 4.74-2.85"/><path d="M17 16.5v5.17"/><path d="M7.97 4.42A2 2 0 0 0 7 6.13v4.37l5 3 5-3V6.13a2 2 0 0 0-.97-1.71l-3-1.8a2 2 0 0 0-2.06 0l-3 1.8Z"/><path d="M12 8 7.26 5.15"/><path d="m12 8 4.74-2.85"/><path d="M12 13.5V8"/></svg>
<div class="t" style="left:1326.4px;top:491.10px;font-size:13px;color:#1f2937;font-weight:400;letter-spacing:-0.15px;font-family:'Liberation Sans', sans-serif;-webkit-text-stroke:0.3px #1f2937;">Quantity</div>
<svg class="abs" style="left:1384.75px;top:491.25px" width="12.5" height="12.5" viewBox="0 0 24 24" fill="none" stroke="#6b7280" stroke-width="1.6" stroke-linecap="round" stroke-linejoin="round"><path d="M2.97 12.92A2 2 0 0 0 2 14.63v3.24a2 2 0 0 0 .97 1.71l3 1.8a2 2 0 0 0 2.06 0L12 19v-5.5l-5-3-4.03 2.42Z"/><path d="m7 16.5-4.74-2.85"/><path d="m7 16.5 5-3"/><path d="M7 16.5v5.17"/><path d="M12 13.5V19l3.97 2.38a2 2 0 0 0 2.06 0l3-1.8a2 2 0 0 0 .97-1.71v-3.24a2 2 0 0 0-.97-1.71L17 10.5l-5 3Z"/><path d="m17 16.5-5-3"/><path d="m17 16.5 4.74-2.85"/><path d="M17 16.5v5.17"/><path d="M7.97 4.42A2 2 0 0 0 7 6.13v4.37l5 3 5-3V6.13a2 2 0 0 0-.97-1.71l-3-1.8a2 2 0 0 0-2.06 0l-3 1.8Z"/><path d="M12 8 7.26 5.15"/><path d="m12 8 4.74-2.85"/><path d="M12 13.5V8"/></svg>
<div class="t" style="left:1401px;top:491.10px;font-size:13px;letter-spacing:-0.1px;color:#6b7280"><span style="color:#22a04b;-webkit-text-stroke:0.15px #22a04b;letter-spacing:-0.1px">10</span>/ 15</div>
<svg class="abs" style="left:1706.50px;top:491.00px" width="13" height="13" viewBox="0 0 24 24" fill="none" stroke="#4a67d6" stroke-width="1.7" stroke-linecap="round" stroke-linejoin="round"><path d="M1.5 12C4 7 8 5 12 5s8 2 10.5 7C20 17 16 19 12 19S4 17 1.5 12Z"/><circle cx="12" cy="12" r="4.6"/></svg>
<svg class="abs" style="left:1730.30px;top:491.00px" width="13" height="13" viewBox="0 0 24 24" fill="none" stroke="#55a066" stroke-width="1.8" stroke-linecap="round" stroke-linejoin="round"><path d="M14 5H5a1 1 0 0 0-1 1v12a1 1 0 0 0 1 1h9"/><path d="M14 5v3"/><path d="M14 16v3"/><path d="M9 12h12"/><path d="m17 8 4 4-4 4"/></svg>
<svg class="abs" style="left:1753.50px;top:491.00px" width="13" height="13" viewBox="0 0 24 24" fill="none" stroke="#6a7fd6" stroke-width="1.8" stroke-linecap="round" stroke-linejoin="round"><path d="M14 4H4v16h10"/><path d="M14 4v3.5"/><path d="M14 16.5V20"/><path d="M22 12H9"/><path d="m13 8-4 4 4 4"/></svg>
<svg class="abs" style="left:1778.50px;top:491.00px" width="13" height="13" viewBox="0 0 24 24" fill="none" stroke="#4562d0" stroke-width="1.5" stroke-linecap="round" stroke-linejoin="round"><rect width="20" height="20" x="2" y="2" rx="1"/><path d="M7.5 12h9"/><path d="M12 7.5v9"/></svg>
<svg class="abs" style="left:1802.20px;top:491.00px" width="13" height="13" viewBox="0 0 24 24" fill="none" stroke="#8552d8" stroke-width="1.8" stroke-linecap="round" stroke-linejoin="round"><path d="M3 5h10"/><path d="M18 5h3"/><path d="M3 12h4"/><path d="M12 12h9"/><path d="M3 19h11"/><path d="M19 19h2"/><circle cx="15.5" cy="5" r="2.5"/><circle cx="9.5" cy="12" r="2.5"/><circle cx="16.5" cy="19" r="2.5"/></svg>
<svg class="abs" style="left:1826.00px;top:491.00px" width="13" height="13" viewBox="0 0 24 24" fill="none" stroke="#d6ab40" stroke-width="1.8" stroke-linecap="round" stroke-linejoin="round"><path d="M2.5 21.5 L4 15.5 L16.5 3 L21 7.5 L8.5 20 Z" fill="#fbf1d6"/><path d="M4 15.5 L8.5 20"/><path d="M14 5.5 L18.5 10"/></svg>
<svg class="abs" style="left:1850.30px;top:491.00px" width="13" height="13" viewBox="0 0 24 24" fill="none" stroke="#d83636" stroke-width="1.7" stroke-linecap="round" stroke-linejoin="round"><path d="M19 6v14a2 2 0 0 1-2 2H7a2 2 0 0 1-2-2V6" fill="#fde3e3"/><path d="M2.5 5.5h19" stroke-width="3.2"/><path d="M8 6V4a2 2 0 0 1 2-2h4a2 2 0 0 1 2 2v2"/><path d="M10 11v6"/><path d="M14 11v6"/></svg>
<div class="abs" style="left:292px;top:570.5px;width:1583px;height:1px;background:#e5e7eb;"></div>
<div class="abs" style="left:300.5px;top:534.5px;width:23.5px;height:23.5px;background:#f3e8ff;border-radius:7px;"></div>
<svg class="abs" style="left:305.70px;top:539.50px" width="13" height="13" viewBox="0 0 24 24" fill="none" stroke="#7a4fd6" stroke-width="2.1" stroke-linecap="round" stroke-linejoin="round"><path d="M12.00 2.00 L12.31 2.03 L12.62 2.11 L12.92 2.24 L13.21 2.44 L13.47 2.73 L13.67 3.23 L13.70 4.39 L13.86 4.76 L14.03 5.01 L14.21 5.21 L14.39 5.37 L14.58 5.49 L14.78 5.57 L15.00 5.62 L15.24 5.64 L15.50 5.62 L15.81 5.56 L16.18 5.42 L17.02 4.61 L17.52 4.41 L17.90 4.39 L18.25 4.45 L18.56 4.56 L18.83 4.73 L19.07 4.93 L19.27 5.17 L19.44 5.44 L19.55 5.75 L19.61 6.10 L19.59 6.48 L19.39 6.98 L18.58 7.82 L18.44 8.19 L18.38 8.50 L18.36 8.76 L18.38 9.00 L18.43 9.22 L18.51 9.42 L18.63 9.61 L18.79 9.79 L18.99 9.97 L19.24 10.14 L19.61 10.30 L20.77 10.33 L21.27 10.53 L21.56 10.79 L21.76 11.08 L21.89 11.38 L21.97 11.69 L22.00 12.00 L21.97 12.31 L21.89 12.62 L21.76 12.92 L21.56 13.21 L21.27 13.47 L20.77 13.67 L19.61 13.70 L19.24 13.86 L18.99 14.03 L18.79 14.21 L18.63 14.39 L18.51 14.58 L18.43 14.78 L18.38 15.00 L18.36 15.24 L18.38 15.50 L18.44 15.81 L18.58 16.18 L19.39 17.02 L19.59 17.52 L19.61 17.90 L19.55 18.25 L19.44 18.56 L19.27 18.83 L19.07 19.07 L18.83 19.27 L18.56 19.44 L18.25 19.55 L17.90 19.61 L17.52 19.59 L17.02 19.39 L16.18 18.58 L15.81 18.44 L15.50 18.38 L15.24 18.36 L15.00 18.38 L14.78 18.43 L14.58 18.51 L14.39 18.63 L14.21 18.79 L14.03 18.99 L13.86 19.24 L13.70 19.61 L13.67 20.77 L13.47 21.27 L13.21 21.56 L12.92 21.76 L12.62 21.89 L12.31 21.97 L12.00 22.00 L11.69 21.97 L11.38 21.89 L11.08 21.76 L10.79 21.56 L10.53 21.27 L10.33 20.77 L10.30 19.61 L10.14 19.24 L9.97 18.99 L9.79 18.79 L9.61 18.63 L9.42 18.51 L9.22 18.43 L9.00 18.38 L8.76 18.36 L8.50 18.38 L8.19 18.44 L7.82 18.58 L6.98 19.39 L6.48 19.59 L6.10 19.61 L5.75 19.55 L5.44 19.44 L5.17 19.27 L4.93 19.07 L4.73 18.83 L4.56 18.56 L4.45 18.25 L4.39 17.90 L4.41 17.52 L4.61 17.02 L5.42 16.18 L5.56 15.81 L5.62 15.50 L5.64 15.24 L5.62 15.00 L5.57 14.78 L5.49 14.58 L5.37 14.39 L5.21 14.21 L5.01 14.03 L4.76 13.86 L4.39 13.70 L3.23 13.67 L2.73 13.47 L2.44 13.21 L2.24 12.92 L2.11 12.62 L2.03 12.31 L2.00 12.00 L2.03 11.69 L2.11 11.38 L2.24 11.08 L2.44 10.79 L2.73 10.53 L3.23 10.33 L4.39 10.30 L4.76 10.14 L5.01 9.97 L5.21 9.79 L5.37 9.61 L5.49 9.42 L5.57 9.22 L5.62 9.00 L5.64 8.76 L5.62 8.50 L5.56 8.19 L5.42 7.82 L4.61 6.98 L4.41 6.48 L4.39 6.10 L4.45 5.75 L4.56 5.44 L4.73 5.17 L4.93 4.93 L5.17 4.73 L5.44 4.56 L5.75 4.45 L6.10 4.39 L6.48 4.41 L6.98 4.61 L7.82 5.42 L8.19 5.56 L8.50 5.62 L8.76 5.64 L9.00 5.62 L9.22 5.57 L9.42 5.49 L9.61 5.37 L9.79 5.21 L9.97 5.01 L10.14 4.76 L10.30 4.39 L10.33 3.23 L10.53 2.73 L10.79 2.44 L11.08 2.24 L11.38 2.11 L11.69 2.03Z"/><circle cx="12" cy="12" r="3.6"/></svg>
<div class="t" style="left:332.5px;top:531.80px;font-size:13px;color:#111827;font-weight:400;letter-spacing:-0.15px;font-family:'Liberation Sans', sans-serif;">Screen Cleaning Kit</div>
<div class="t" style="left:332.5px;top:548.74px;font-size:12px;color:#6b7280;font-weight:400;letter-spacing:0.25px;font-family:'Liberation Sans', sans-serif;">Canon</div>
<svg class="abs" style="left:695.25px;top:539.25px" width="12.5" height="12.5" viewBox="0 0 24 24" fill="none" stroke="#6b7280" stroke-width="1.9" stroke-linecap="round" stroke-linejoin="round"><path d="M12.586 2.586A2 2 0 0 0 11.172 2H4a2 2 0 0 0-2 2v7.172a2 2 0 0 0 .586 1.414l8.704 8.704a2.426 2.426 0 0 0 3.42 0l6.58-6.58a2.426 2.426 0 0 0 0-3.42z"/><circle cx="7.5" cy="7.5" r=".5" fill="currentColor"/></svg>
<div class="t" style="left:712px;top:540.00px;font-size:13px;color:#1f2937;font-weight:400;letter-spacing:-0.12px;font-family:'Liberation Sans', sans-serif;">Monitors</div>
<svg class="abs" style="left:919.50px;top:531.90px" width="13" height="13" viewBox="0 0 24 24" fill="none" stroke="#6b7280" stroke-width="1.6" stroke-linecap="round" stroke-linejoin="round"><circle cx="12" cy="12" r="10"/><path d="M8 12h8"/></svg>
<div class="t" style="left:936.2px;top:532.14px;font-size:12px;color:#6b7280;font-weight:400;letter-spacing:0.28px;font-family:'Liberation Sans', sans-serif;">No Serial</div>
<svg class="abs" style="left:921.3px;top:549.7px;" width="9" height="10" viewBox="0 0 9 10"><g fill="none" stroke="#9ca3af" stroke-width="1.1"><circle cx="4.5" cy="2" r="1.4"/><path d="M4.5 3.4V5 M1.6 7.2V5H7.4V7.2"/><ellipse cx="1.6" cy="8.3" rx="1.1" ry="1.2"/><ellipse cx="7.4" cy="8.3" rx="1.1" ry="1.2"/></g></svg>
<div class="t" style="left:936.2px;top:548.84px;font-size:12px;color:#6b7280;font-weight:400;letter-spacing:0.22px;font-family:'Liberation Sans', sans-serif;">CleanScreen Pro</div>
<div class="abs" style="left:1121.5px;top:539.0px;width:79px;height:19px;background:#e0f6e5;border-radius:10px;"></div>
<div class="abs" style="left:1127px;top:542.5px;width:12px;height:12px;background:#22a03c;border-radius:6px;"></div>
<div class="t" style="left:1143px;top:542.10px;font-size:13px;color:#279a47;font-weight:400;letter-spacing:-0.12px;font-family:'Liberation Sans', sans-serif;-webkit-text-stroke:0.12px #279a47;">Available</div>
<div class="abs" style="left:1304px;top:537.5px;width:77px;height:18px;background:#f3f4f6;border-radius:9px;"></div>
<svg class="abs" style="left:1309.50px;top:540.00px" width="13" height="13" viewBox="0 0 24 24" fill="none" stroke="#374151" stroke-width="1.7" stroke-linecap="round" stroke-linejoin="round"><path d="M2.97 12.92A2 2 0 0 0 2 14.63v3.24a2 2 0 0 0 .97 1.71l3 1.8a2 2 0 0 0 2.06 0L12 19v-5.5l-5-3-4.03 2.42Z"/><path d="m7 16.5-4.74-2.85"/><path d="m7 16.5 5-3"/><path d="M7 16.5v5.17"/><path d="M12 13.5V19l3.97 2.38a2 2 0 0 0 2.06 0l3-1.8a2 2 0 0 0 .97-1.71v-3.24a2 2 0 0 0-.97-1.71L17 10.5l-5 3Z"/><path d="m17 16.5-5-3"/><path d="m17 16.5 4.74-2.85"/><path d="M17 16.5v5.17"/><path d="M7.97 4.42A2 2 0 0 0 7 6.13v4.37l5 3 5-3V6.13a2 2 0 0 0-.97-1.71l-3-1.8a2 2 0 0 0-2.06 0l-3 1.8Z"/><path d="M12 8 7.26 5.15"/><path d="m12 8 4.74-2.85"/><path d="M12 13.5V8"/></svg>
<div class="t" style="left:1326.4px;top:540.10px;font-size:13px;color:#1f2937;font-weight:400;letter-spacing:-0.15px;font-family:'Liberation Sans', sans-serif;-webkit-text-stroke:0.3px #1f2937;">Quantity</div>
<svg class="abs" style="left:1384.75px;top:540.25px" width="12.5" height="12.5" viewBox="0 0 24 24" fill="none" stroke="#6b7280" stroke-width="1.6" stroke-linecap="round" stroke-linejoin="round"><path d="M2.97 12.92A2 2 0 0 0 2 14.63v3.24a2 2 0 0 0 .97 1.71l3 1.8a2 2 0 0 0 2.06 0L12 19v-5.5l-5-3-4.03 2.42Z"/><path d="m7 16.5-4.74-2.85"/><path d="m7 16.5 5-3"/><path d="M7 16.5v5.17"/><path d="M12 13.5V19l3.97 2.38a2 2 0 0 0 2.06 0l3-1.8a2 2 0 0 0 .97-1.71v-3.24a2 2 0 0 0-.97-1.71L17 10.5l-5 3Z"/><path d="m17 16.5-5-3"/><path d="m17 16.5 4.74-2.85"/><path d="M17 16.5v5.17"/><path d="M7.97 4.42A2 2 0 0 0 7 6.13v4.37l5 3 5-3V6.13a2 2 0 0 0-.97-1.71l-3-1.8a2 2 0 0 0-2.06 0l-3 1.8Z"/><path d="M12 8 7.26 5.15"/><path d="m12 8 4.74-2.85"/><path d="M12 13.5V8"/></svg>
<div class="t" style="left:1401px;top:540.10px;font-size:13px;letter-spacing:-0.1px;color:#6b7280"><span style="color:#22a04b;-webkit-text-stroke:0.15px #22a04b;letter-spacing:-0.1px">45</span>/ 50</div>
<svg class="abs" style="left:1706.50px;top:540.00px" width="13" height="13" viewBox="0 0 24 24" fill="none" stroke="#4a67d6" stroke-width="1.7" stroke-linecap="round" stroke-linejoin="round"><path d="M1.5 12C4 7 8 5 12 5s8 2 10.5 7C20 17 16 19 12 19S4 17 1.5 12Z"/><circle cx="12" cy="12" r="4.6"/></svg>
<svg class="abs" style="left:1730.30px;top:540.00px" width="13" height="13" viewBox="0 0 24 24" fill="none" stroke="#55a066" stroke-width="1.8" stroke-linecap="round" stroke-linejoin="round"><path d="M14 5H5a1 1 0 0 0-1 1v12a1 1 0 0 0 1 1h9"/><path d="M14 5v3"/><path d="M14 16v3"/><path d="M9 12h12"/><path d="m17 8 4 4-4 4"/></svg>
<svg class="abs" style="left:1753.50px;top:540.00px" width="13" height="13" viewBox="0 0 24 24" fill="none" stroke="#6a7fd6" stroke-width="1.8" stroke-linecap="round" stroke-linejoin="round"><path d="M14 4H4v16h10"/><path d="M14 4v3.5"/><path d="M14 16.5V20"/><path d="M22 12H9"/><path d="m13 8-4 4 4 4"/></svg>
<svg class="abs" style="left:1778.50px;top:540.00px" width="13" height="13" viewBox="0 0 24 24" fill="none" stroke="#4562d0" stroke-width="1.5" stroke-linecap="round" stroke-linejoin="round"><rect width="20" height="20" x="2" y="2" rx="1"/><path d="M7.5 12h9"/><path d="M12 7.5v9"/></svg>
<svg class="abs" style="left:1802.20px;top:540.00px" width="13" height="13" viewBox="0 0 24 24" fill="none" stroke="#8552d8" stroke-width="1.8" stroke-linecap="round" stroke-linejoin="round"><path d="M3 5h10"/><path d="M18 5h3"/><path d="M3 12h4"/><path d="M12 12h9"/><path d="M3 19h11"/><path d="M19 19h2"/><circle cx="15.5" cy="5" r="2.5"/><circle cx="9.5" cy="12" r="2.5"/><circle cx="16.5" cy="19" r="2.5"/></svg>
<svg class="abs" style="left:1826.00px;top:540.00px" width="13" height="13" viewBox="0 0 24 24" fill="none" stroke="#d6ab40" stroke-width="1.8" stroke-linecap="round" stroke-linejoin="round"><path d="M2.5 21.5 L4 15.5 L16.5 3 L21 7.5 L8.5 20 Z" fill="#fbf1d6"/><path d="M4 15.5 L8.5 20"/><path d="M14 5.5 L18.5 10"/></svg>
<svg class="abs" style="left:1850.30px;top:540.00px" width="13" height="13" viewBox="0 0 24 24" fill="none" stroke="#d83636" stroke-width="1.7" stroke-linecap="round" stroke-linejoin="round"><path d="M19 6v14a2 2 0 0 1-2 2H7a2 2 0 0 1-2-2V6" fill="#fde3e3"/><path d="M2.5 5.5h19" stroke-width="3.2"/><path d="M8 6V4a2 2 0 0 1 2-2h4a2 2 0 0 1 2 2v2"/><path d="M10 11v6"/><path d="M14 11v6"/></svg>
<div class="abs" style="left:292px;top:620.0px;width:1583px;height:1px;background:#e5e7eb;"></div>
<div class="abs" style="left:300.5px;top:583.75px;width:23.5px;height:23.5px;background:#f3e8ff;border-radius:7px;"></div>
<svg class="abs" style="left:305.70px;top:588.75px" width="13" height="13" viewBox="0 0 24 24" fill="none" stroke="#7a4fd6" stroke-width="2.1" stroke-linecap="round" stroke-linejoin="round"><path d="M12.00 2.00 L12.31 2.03 L12.62 2.11 L12.92 2.24 L13.21 2.44 L13.47 2.73 L13.67 3.23 L13.70 4.39 L13.86 4.76 L14.03 5.01 L14.21 5.21 L14.39 5.37 L14.58 5.49 L14.78 5.57 L15.00 5.62 L15.24 5.64 L15.50 5.62 L15.81 5.56 L16.18 5.42 L17.02 4.61 L17.52 4.41 L17.90 4.39 L18.25 4.45 L18.56 4.56 L18.83 4.73 L19.07 4.93 L19.27 5.17 L19.44 5.44 L19.55 5.75 L19.61 6.10 L19.59 6.48 L19.39 6.98 L18.58 7.82 L18.44 8.19 L18.38 8.50 L18.36 8.76 L18.38 9.00 L18.43 9.22 L18.51 9.42 L18.63 9.61 L18.79 9.79 L18.99 9.97 L19.24 10.14 L19.61 10.30 L20.77 10.33 L21.27 10.53 L21.56 10.79 L21.76 11.08 L21.89 11.38 L21.97 11.69 L22.00 12.00 L21.97 12.31 L21.89 12.62 L21.76 12.92 L21.56 13.21 L21.27 13.47 L20.77 13.67 L19.61 13.70 L19.24 13.86 L18.99 14.03 L18.79 14.21 L18.63 14.39 L18.51 14.58 L18.43 14.78 L18.38 15.00 L18.36 15.24 L18.38 15.50 L18.44 15.81 L18.58 16.18 L19.39 17.02 L19.59 17.52 L19.61 17.90 L19.55 18.25 L19.44 18.56 L19.27 18.83 L19.07 19.07 L18.83 19.27 L18.56 19.44 L18.25 19.55 L17.90 19.61 L17.52 19.59 L17.02 19.39 L16.18 18.58 L15.81 18.44 L15.50 18.38 L15.24 18.36 L15.00 18.38 L14.78 18.43 L14.58 18.51 L14.39 18.63 L14.21 18.79 L14.03 18.99 L13.86 19.24 L13.70 19.61 L13.67 20.77 L13.47 21.27 L13.21 21.56 L12.92 21.76 L12.62 21.89 L12.31 21.97 L12.00 22.00 L11.69 21.97 L11.38 21.89 L11.08 21.76 L10.79 21.56 L10.53 21.27 L10.33 20.77 L10.30 19.61 L10.14 19.24 L9.97 18.99 L9.79 18.79 L9.61 18.63 L9.42 18.51 L9.22 18.43 L9.00 18.38 L8.76 18.36 L8.50 18.38 L8.19 18.44 L7.82 18.58 L6.98 19.39 L6.48 19.59 L6.10 19.61 L5.75 19.55 L5.44 19.44 L5.17 19.27 L4.93 19.07 L4.73 18.83 L4.56 18.56 L4.45 18.25 L4.39 17.90 L4.41 17.52 L4.61 17.02 L5.42 16.18 L5.56 15.81 L5.62 15.50 L5.64 15.24 L5.62 15.00 L5.57 14.78 L5.49 14.58 L5.37 14.39 L5.21 14.21 L5.01 14.03 L4.76 13.86 L4.39 13.70 L3.23 13.67 L2.73 13.47 L2.44 13.21 L2.24 12.92 L2.11 12.62 L2.03 12.31 L2.00 12.00 L2.03 11.69 L2.11 11.38 L2.24 11.08 L2.44 10.79 L2.73 10.53 L3.23 10.33 L4.39 10.30 L4.76 10.14 L5.01 9.97 L5.21 9.79 L5.37 9.61 L5.49 9.42 L5.57 9.22 L5.62 9.00 L5.64 8.76 L5.62 8.50 L5.56 8.19 L5.42 7.82 L4.61 6.98 L4.41 6.48 L4.39 6.10 L4.45 5.75 L4.56 5.44 L4.73 5.17 L4.93 4.93 L5.17 4.73 L5.44 4.56 L5.75 4.45 L6.10 4.39 L6.48 4.41 L6.98 4.61 L7.82 5.42 L8.19 5.56 L8.50 5.62 L8.76 5.64 L9.00 5.62 L9.22 5.57 L9.42 5.49 L9.61 5.37 L9.79 5.21 L9.97 5.01 L10.14 4.76 L10.30 4.39 L10.33 3.23 L10.53 2.73 L10.79 2.44 L11.08 2.24 L11.38 2.11 L11.69 2.03Z"/><circle cx="12" cy="12" r="3.6"/></svg>
<div class="t" style="left:332.5px;top:580.80px;font-size:13px;color:#111827;font-weight:400;letter-spacing:-0.16px;font-family:'Liberation Sans', sans-serif;">HDMI Cable 2m</div>
<div class="t" style="left:332.5px;top:597.74px;font-size:12px;color:#6b7280;font-weight:400;letter-spacing:0.25px;font-family:'Liberation Sans', sans-serif;">Cisco</div>
<svg class="abs" style="left:695.25px;top:588.50px" width="12.5" height="12.5" viewBox="0 0 24 24" fill="none" stroke="#6b7280" stroke-width="1.9" stroke-linecap="round" stroke-linejoin="round"><path d="M12.586 2.586A2 2 0 0 0 11.172 2H4a2 2 0 0 0-2 2v7.172a2 2 0 0 0 .586 1.414l8.704 8.704a2.426 2.426 0 0 0 3.42 0l6.58-6.58a2.426 2.426 0 0 0 0-3.42z"/><circle cx="7.5" cy="7.5" r=".5" fill="currentColor"/></svg>
<div class="t" style="left:712px;top:589.25px;font-size:13px;color:#1f2937;font-weight:400;letter-spacing:-0.12px;font-family:'Liberation Sans', sans-serif;">Monitors</div>
<svg class="abs" style="left:919.50px;top:580.90px" width="13" height="13" viewBox="0 0 24 24" fill="none" stroke="#6b7280" stroke-width="1.6" stroke-linecap="round" stroke-linejoin="round"><circle cx="12" cy="12" r="10"/><path d="M8 12h8"/></svg>
<div class="t" style="left:936.2px;top:581.14px;font-size:12px;color:#6b7280;font-weight:400;letter-spacing:0.28px;font-family:'Liberation Sans', sans-serif;">No Serial</div>
<svg class="abs" style="left:921.3px;top:598.7px;" width="9" height="10" viewBox="0 0 9 10"><g fill="none" stroke="#9ca3af" stroke-width="1.1"><circle cx="4.5" cy="2" r="1.4"/><path d="M4.5 3.4V5 M1.6 7.2V5H7.4V7.2"/><ellipse cx="1.6" cy="8.3" rx="1.1" ry="1.2"/><ellipse cx="7.4" cy="8.3" rx="1.1" ry="1.2"/></g></svg>
<div class="t" style="left:936.2px;top:597.84px;font-size:12px;color:#6b7280;font-weight:400;letter-spacing:0.22px;font-family:'Liberation Sans', sans-serif;">HDMI-2M-4K</div>
<div class="abs" style="left:1121.5px;top:588.25px;width:79px;height:19px;background:#e0f6e5;border-radius:10px;"></div>
<div class="abs" style="left:1127px;top:591.75px;width:12px;height:12px;background:#22a03c;border-radius:6px;"></div>
<div class="t" style="left:1143px;top:591.35px;font-size:13px;color:#279a47;font-weight:400;letter-spacing:-0.12px;font-family:'Liberation Sans', sans-serif;-webkit-text-stroke:0.12px #279a47;">Available</div>
<div class="abs" style="left:1304px;top:586.75px;width:77px;height:18px;background:#f3f4f6;border-radius:9px;"></div>
<svg class="abs" style="left:1309.50px;top:589.25px" width="13" height="13" viewBox="0 0 24 24" fill="none" stroke="#374151" stroke-width="1.7" stroke-linecap="round" stroke-linejoin="round"><path d="M2.97 12.92A2 2 0 0 0 2 14.63v3.24a2 2 0 0 0 .97 1.71l3 1.8a2 2 0 0 0 2.06 0L12 19v-5.5l-5-3-4.03 2.42Z"/><path d="m7 16.5-4.74-2.85"/><path d="m7 16.5 5-3"/><path d="M7 16.5v5.17"/><path d="M12 13.5V19l3.97 2.38a2 2 0 0 0 2.06 0l3-1.8a2 2 0 0 0 .97-1.71v-3.24a2 2 0 0 0-.97-1.71L17 10.5l-5 3Z"/><path d="m17 16.5-5-3"/><path d="m17 16.5 4.74-2.85"/><path d="M17 16.5v5.17"/><path d="M7.97 4.42A2 2 0 0 0 7 6.13v4.37l5 3 5-3V6.13a2 2 0 0 0-.97-1.71l-3-1.8a2 2 0 0 0-2.06 0l-3 1.8Z"/><path d="M12 8 7.26 5.15"/><path d="m12 8 4.74-2.85"/><path d="M12 13.5V8"/></svg>
<div class="t" style="left:1326.4px;top:589.35px;font-size:13px;color:#1f2937;font-weight:400;letter-spacing:-0.15px;font-family:'Liberation Sans', sans-serif;-webkit-text-stroke:0.3px #1f2937;">Quantity</div>
<svg class="abs" style="left:1384.75px;top:589.50px" width="12.5" height="12.5" viewBox="0 0 24 24" fill="none" stroke="#6b7280" stroke-width="1.6" stroke-linecap="round" stroke-linejoin="round"><path d="M2.97 12.92A2 2 0 0 0 2 14.63v3.24a2 2 0 0 0 .97 1.71l3 1.8a2 2 0 0 0 2.06 0L12 19v-5.5l-5-3-4.03 2.42Z"/><path d="m7 16.5-4.74-2.85"/><path d="m7 16.5 5-3"/><path d="M7 16.5v5.17"/><path d="M12 13.5V19l3.97 2.38a2 2 0 0 0 2.06 0l3-1.8a2 2 0 0 0 .97-1.71v-3.24a2 2 0 0 0-.97-1.71L17 10.5l-5 3Z"/><path d="m17 16.5-5-3"/><path d="m17 16.5 4.74-2.85"/><path d="M17 16.5v5.17"/><path d="M7.97 4.42A2 2 0 0 0 7 6.13v4.37l5 3 5-3V6.13a2 2 0 0 0-.97-1.71l-3-1.8a2 2 0 0 0-2.06 0l-3 1.8Z"/><path d="M12 8 7.26 5.15"/><path d="m12 8 4.74-2.85"/><path d="M12 13.5V8"/></svg>
<div class="t" style="left:1401px;top:589.35px;font-size:13px;letter-spacing:-0.1px;color:#6b7280"><span style="color:#22a04b;-webkit-text-stroke:0.15px #22a04b;letter-spacing:-0.1px">50</span>/ 60</div>
<svg class="abs" style="left:1706.50px;top:589.25px" width="13" height="13" viewBox="0 0 24 24" fill="none" stroke="#4a67d6" stroke-width="1.7" stroke-linecap="round" stroke-linejoin="round"><path d="M1.5 12C4 7 8 5 12 5s8 2 10.5 7C20 17 16 19 12 19S4 17 1.5 12Z"/><circle cx="12" cy="12" r="4.6"/></svg>
<svg class="abs" style="left:1730.30px;top:589.25px" width="13" height="13" viewBox="0 0 24 24" fill="none" stroke="#55a066" stroke-width="1.8" stroke-linecap="round" stroke-linejoin="round"><path d="M14 5H5a1 1 0 0 0-1 1v12a1 1 0 0 0 1 1h9"/><path d="M14 5v3"/><path d="M14 16v3"/><path d="M9 12h12"/><path d="m17 8 4 4-4 4"/></svg>
<svg class="abs" style="left:1753.50px;top:589.25px" width="13" height="13" viewBox="0 0 24 24" fill="none" stroke="#6a7fd6" stroke-width="1.8" stroke-linecap="round" stroke-linejoin="round"><path d="M14 4H4v16h10"/><path d="M14 4v3.5"/><path d="M14 16.5V20"/><path d="M22 12H9"/><path d="m13 8-4 4 4 4"/></svg>
<svg class="abs" style="left:1778.50px;top:589.25px" width="13" height="13" viewBox="0 0 24 24" fill="none" stroke="#4562d0" stroke-width="1.5" stroke-linecap="round" stroke-linejoin="round"><rect width="20" height="20" x="2" y="2" rx="1"/><path d="M7.5 12h9"/><path d="M12 7.5v9"/></svg>
<svg class="abs" style="left:1802.20px;top:589.25px" width="13" height="13" viewBox="0 0 24 24" fill="none" stroke="#8552d8" stroke-width="1.8" stroke-linecap="round" stroke-linejoin="round"><path d="M3 5h10"/><path d="M18 5h3"/><path d="M3 12h4"/><path d="M12 12h9"/><path d="M3 19h11"/><path d="M19 19h2"/><circle cx="15.5" cy="5" r="2.5"/><circle cx="9.5" cy="12" r="2.5"/><circle cx="16.5" cy="19" r="2.5"/></svg>
<svg class="abs" style="left:1826.00px;top:589.25px" width="13" height="13" viewBox="0 0 24 24" fill="none" stroke="#d6ab40" stroke-width="1.8" stroke-linecap="round" stroke-linejoin="round"><path d="M2.5 21.5 L4 15.5 L16.5 3 L21 7.5 L8.5 20 Z" fill="#fbf1d6"/><path d="M4 15.5 L8.5 20"/><path d="M14 5.5 L18.5 10"/></svg>
<svg class="abs" style="left:1850.30px;top:589.25px" width="13" height="13" viewBox="0 0 24 24" fill="none" stroke="#d83636" stroke-width="1.7" stroke-linecap="round" stroke-linejoin="round"><path d="M19 6v14a2 2 0 0 1-2 2H7a2 2 0 0 1-2-2V6" fill="#fde3e3"/><path d="M2.5 5.5h19" stroke-width="3.2"/><path d="M8 6V4a2 2 0 0 1 2-2h4a2 2 0 0 1 2 2v2"/><path d="M10 11v6"/><path d="M14 11v6"/></svg>
<div class="abs" style="left:292px;top:673.2px;width:1583px;height:1px;background:#e5e7eb;"></div>
<div class="abs" style="left:300.5px;top:635.1px;width:23.5px;height:23.5px;background:#f3e8ff;border-radius:7px;"></div>
<svg class="abs" style="left:305.70px;top:640.10px" width="13" height="13" viewBox="0 0 24 24" fill="none" stroke="#7a4fd6" stroke-width="2.1" stroke-linecap="round" stroke-linejoin="round"><path d="M12.00 2.00 L12.31 2.03 L12.62 2.11 L12.92 2.24 L13.21 2.44 L13.47 2.73 L13.67 3.23 L13.70 4.39 L13.86 4.76 L14.03 5.01 L14.21 5.21 L14.39 5.37 L14.58 5.49 L14.78 5.57 L15.00 5.62 L15.24 5.64 L15.50 5.62 L15.81 5.56 L16.18 5.42 L17.02 4.61 L17.52 4.41 L17.90 4.39 L18.25 4.45 L18.56 4.56 L18.83 4.73 L19.07 4.93 L19.27 5.17 L19.44 5.44 L19.55 5.75 L19.61 6.10 L19.59 6.48 L19.39 6.98 L18.58 7.82 L18.44 8.19 L18.38 8.50 L18.36 8.76 L18.38 9.00 L18.43 9.22 L18.51 9.42 L18.63 9.61 L18.79 9.79 L18.99 9.97 L19.24 10.14 L19.61 10.30 L20.77 10.33 L21.27 10.53 L21.56 10.79 L21.76 11.08 L21.89 11.38 L21.97 11.69 L22.00 12.00 L21.97 12.31 L21.89 12.62 L21.76 12.92 L21.56 13.21 L21.27 13.47 L20.77 13.67 L19.61 13.70 L19.24 13.86 L18.99 14.03 L18.79 14.21 L18.63 14.39 L18.51 14.58 L18.43 14.78 L18.38 15.00 L18.36 15.24 L18.38 15.50 L18.44 15.81 L18.58 16.18 L19.39 17.02 L19.59 17.52 L19.61 17.90 L19.55 18.25 L19.44 18.56 L19.27 18.83 L19.07 19.07 L18.83 19.27 L18.56 19.44 L18.25 19.55 L17.90 19.61 L17.52 19.59 L17.02 19.39 L16.18 18.58 L15.81 18.44 L15.50 18.38 L15.24 18.36 L15.00 18.38 L14.78 18.43 L14.58 18.51 L14.39 18.63 L14.21 18.79 L14.03 18.99 L13.86 19.24 L13.70 19.61 L13.67 20.77 L13.47 21.27 L13.21 21.56 L12.92 21.76 L12.62 21.89 L12.31 21.97 L12.00 22.00 L11.69 21.97 L11.38 21.89 L11.08 21.76 L10.79 21.56 L10.53 21.27 L10.33 20.77 L10.30 19.61 L10.14 19.24 L9.97 18.99 L9.79 18.79 L9.61 18.63 L9.42 18.51 L9.22 18.43 L9.00 18.38 L8.76 18.36 L8.50 18.38 L8.19 18.44 L7.82 18.58 L6.98 19.39 L6.48 19.59 L6.10 19.61 L5.75 19.55 L5.44 19.44 L5.17 19.27 L4.93 19.07 L4.73 18.83 L4.56 18.56 L4.45 18.25 L4.39 17.90 L4.41 17.52 L4.61 17.02 L5.42 16.18 L5.56 15.81 L5.62 15.50 L5.64 15.24 L5.62 15.00 L5.57 14.78 L5.49 14.58 L5.37 14.39 L5.21 14.21 L5.01 14.03 L4.76 13.86 L4.39 13.70 L3.23 13.67 L2.73 13.47 L2.44 13.21 L2.24 12.92 L2.11 12.62 L2.03 12.31 L2.00 12.00 L2.03 11.69 L2.11 11.38 L2.24 11.08 L2.44 10.79 L2.73 10.53 L3.23 10.33 L4.39 10.30 L4.76 10.14 L5.01 9.97 L5.21 9.79 L5.37 9.61 L5.49 9.42 L5.57 9.22 L5.62 9.00 L5.64 8.76 L5.62 8.50 L5.56 8.19 L5.42 7.82 L4.61 6.98 L4.41 6.48 L4.39 6.10 L4.45 5.75 L4.56 5.44 L4.73 5.17 L4.93 4.93 L5.17 4.73 L5.44 4.56 L5.75 4.45 L6.10 4.39 L6.48 4.41 L6.98 4.61 L7.82 5.42 L8.19 5.56 L8.50 5.62 L8.76 5.64 L9.00 5.62 L9.22 5.57 L9.42 5.49 L9.61 5.37 L9.79 5.21 L9.97 5.01 L10.14 4.76 L10.30 4.39 L10.33 3.23 L10.53 2.73 L10.79 2.44 L11.08 2.24 L11.38 2.11 L11.69 2.03Z"/><circle cx="12" cy="12" r="3.6"/></svg>
<div class="t" style="left:332.5px;top:631.60px;font-size:13px;color:#111827;font-weight:400;letter-spacing:-0.28px;font-family:'Liberation Sans', sans-serif;">Webcam HD 1080p</div>
<div class="t" style="left:332.5px;top:648.54px;font-size:12px;color:#6b7280;font-weight:400;letter-spacing:0.25px;font-family:'Liberation Sans', sans-serif;">Lenovo</div>
<svg class="abs" style="left:695.25px;top:639.85px" width="12.5" height="12.5" viewBox="0 0 24 24" fill="none" stroke="#6b7280" stroke-width="1.9" stroke-linecap="round" stroke-linejoin="round"><path d="M12.586 2.586A2 2 0 0 0 11.172 2H4a2 2 0 0 0-2 2v7.172a2 2 0 0 0 .586 1.414l8.704 8.704a2.426 2.426 0 0 0 3.42 0l6.58-6.58a2.426 2.426 0 0 0 0-3.42z"/><circle cx="7.5" cy="7.5" r=".5" fill="currentColor"/></svg>
<div class="t" style="left:712px;top:640.60px;font-size:13px;color:#1f2937;font-weight:400;letter-spacing:-0.12px;font-family:'Liberation Sans', sans-serif;">Audio/Video</div>
<div class="abs" style="left:920.5px;top:629.5px;width:0px;height:18px;background:#f3f4f6;border-radius:9px;padding:0;"></div>
<div class="abs" style="left:920.5px;top:629.50px;height:18.5px;background:#f3f4f6;border-radius:9px;padding:0 6px 0 22px;font-size:13px;font-weight:400;-webkit-text-stroke:0.2px #1f2937;color:#1f2937;letter-spacing:-0.45px;line-height:18.5px;white-space:nowrap">WC1080001</div>
<svg class="abs" style="left:928px;top:635.0px;" width="8" height="7" viewBox="0 0 8 7"><rect x="0" y="0" width="1.3" height="7" fill="#374151"/><rect x="2.2" y="0" width="0.9" height="7" fill="#374151"/><rect x="4" y="0" width="1.3" height="7" fill="#374151"/><rect x="6.4" y="0" width="1.3" height="7" fill="#374151"/></svg>
<svg class="abs" style="left:921.3px;top:652.2px;" width="9" height="10" viewBox="0 0 9 10"><g fill="none" stroke="#9ca3af" stroke-width="1.1"><circle cx="4.5" cy="2" r="1.4"/><path d="M4.5 3.4V5 M1.6 7.2V5H7.4V7.2"/><ellipse cx="1.6" cy="8.3" rx="1.1" ry="1.2"/><ellipse cx="7.4" cy="8.3" rx="1.1" ry="1.2"/></g></svg>
<div class="t" style="left:936.2px;top:651.34px;font-size:12px;color:#6b7280;font-weight:400;letter-spacing:0.22px;font-family:'Liberation Sans', sans-serif;">C920 HD Pro</div>
<div class="abs" style="left:1121.5px;top:639.2px;width:101px;height:19px;background:#dde9fb;border-radius:10px;"></div>
<div class="abs" style="left:1127px;top:642.7px;width:12px;height:12px;background:#1a73f0;border-radius:6px;"></div>
<div class="t" style="left:1143px;top:642.30px;font-size:13px;color:#1f6fdc;font-weight:400;letter-spacing:-0.14px;font-family:'Liberation Sans', sans-serif;-webkit-text-stroke:0.12px #1f6fdc;">Checked Out</div>
<div class="abs" style="left:1304px;top:636.8000000000001px;width:84.5px;height:19.5px;background:#dbeafe;border-radius:10px;"></div>
<svg class="abs" style="left:1309.6px;top:640.6px;" width="13" height="12" viewBox="0 0 13 12"><g fill="none" stroke="#3a4ea6" stroke-width="1.2"><circle cx="6.5" cy="2" r="1.5"/><path d="M6.5 3.5V5.6 M2 8.2V5.6H11V8.2 M6.5 5.6V8.2"/><circle cx="2" cy="9.6" r="1.4"/><circle cx="6.5" cy="9.6" r="1.4"/><circle cx="11" cy="9.6" r="1.4"/></g></svg>
<div class="t" style="left:1326.5px;top:640.20px;font-size:13px;color:#2d3f9e;font-weight:400;letter-spacing:-0.11px;font-family:'Liberation Sans', sans-serif;-webkit-text-stroke:0.25px #2d3f9e;">Serialized</div>
<svg class="abs" style="left:1392.75px;top:640.35px" width="12.5" height="12.5" viewBox="0 0 24 24" fill="none" stroke="#d03a3a" stroke-width="1.7" stroke-linecap="round" stroke-linejoin="round"><circle cx="12" cy="12" r="10"/><path d="M8 12h8"/><path d="m12 16 4-4-4-4"/></svg>
<div class="t" style="left:1409.2px;top:640.20px;font-size:13px;color:#d03a3a;font-weight:400;letter-spacing:-0.33px;font-family:'Liberation Sans', sans-serif;">Checked Out</div>
<svg class="abs" style="left:1778.50px;top:640.10px" width="13" height="13" viewBox="0 0 24 24" fill="none" stroke="#4a67d6" stroke-width="1.7" stroke-linecap="round" stroke-linejoin="round"><path d="M1.5 12C4 7 8 5 12 5s8 2 10.5 7C20 17 16 19 12 19S4 17 1.5 12Z"/><circle cx="12" cy="12" r="4.6"/></svg>
<svg class="abs" style="left:1802.20px;top:640.10px" width="13" height="13" viewBox="0 0 24 24" fill="none" stroke="#6a7fd6" stroke-width="1.8" stroke-linecap="round" stroke-linejoin="round"><path d="M14 4H4v16h10"/><path d="M14 4v3.5"/><path d="M14 16.5V20"/><path d="M22 12H9"/><path d="m13 8-4 4 4 4"/></svg>
<svg class="abs" style="left:1826.00px;top:640.10px" width="13" height="13" viewBox="0 0 24 24" fill="none" stroke="#d6ab40" stroke-width="1.8" stroke-linecap="round" stroke-linejoin="round"><path d="M2.5 21.5 L4 15.5 L16.5 3 L21 7.5 L8.5 20 Z" fill="#fbf1d6"/><path d="M4 15.5 L8.5 20"/><path d="M14 5.5 L18.5 10"/></svg>
<svg class="abs" style="left:1850.30px;top:640.10px" width="13" height="13" viewBox="0 0 24 24" fill="none" stroke="#d83636" stroke-width="1.7" stroke-linecap="round" stroke-linejoin="round"><path d="M19 6v14a2 2 0 0 1-2 2H7a2 2 0 0 1-2-2V6" fill="#fde3e3"/><path d="M2.5 5.5h19" stroke-width="3.2"/><path d="M8 6V4a2 2 0 0 1 2-2h4a2 2 0 0 1 2 2v2"/><path d="M10 11v6"/><path d="M14 11v6"/></svg>
<div class="abs" style="left:292px;top:726.1px;width:1583px;height:1px;background:#e5e7eb;"></div>
<div class="abs" style="left:300.5px;top:688.1500000000001px;width:23.5px;height:23.5px;background:#f3e8ff;border-radius:7px;"></div>
<svg class="abs" style="left:305.70px;top:693.15px" width="13" height="13" viewBox="0 0 24 24" fill="none" stroke="#7a4fd6" stroke-width="2.1" stroke-linecap="round" stroke-linejoin="round"><path d="M12.00 2.00 L12.31 2.03 L12.62 2.11 L12.92 2.24 L13.21 2.44 L13.47 2.73 L13.67 3.23 L13.70 4.39 L13.86 4.76 L14.03 5.01 L14.21 5.21 L14.39 5.37 L14.58 5.49 L14.78 5.57 L15.00 5.62 L15.24 5.64 L15.50 5.62 L15.81 5.56 L16.18 5.42 L17.02 4.61 L17.52 4.41 L17.90 4.39 L18.25 4.45 L18.56 4.56 L18.83 4.73 L19.07 4.93 L19.27 5.17 L19.44 5.44 L19.55 5.75 L19.61 6.10 L19.59 6.48 L19.39 6.98 L18.58 7.82 L18.44 8.19 L18.38 8.50 L18.36 8.76 L18.38 9.00 L18.43 9.22 L18.51 9.42 L18.63 9.61 L18.79 9.79 L18.99 9.97 L19.24 10.14 L19.61 10.30 L20.77 10.33 L21.27 10.53 L21.56 10.79 L21.76 11.08 L21.89 11.38 L21.97 11.69 L22.00 12.00 L21.97 12.31 L21.89 12.62 L21.76 12.92 L21.56 13.21 L21.27 13.47 L20.77 13.67 L19.61 13.70 L19.24 13.86 L18.99 14.03 L18.79 14.21 L18.63 14.39 L18.51 14.58 L18.43 14.78 L18.38 15.00 L18.36 15.24 L18.38 15.50 L18.44 15.81 L18.58 16.18 L19.39 17.02 L19.59 17.52 L19.61 17.90 L19.55 18.25 L19.44 18.56 L19.27 18.83 L19.07 19.07 L18.83 19.27 L18.56 19.44 L18.25 19.55 L17.90 19.61 L17.52 19.59 L17.02 19.39 L16.18 18.58 L15.81 18.44 L15.50 18.38 L15.24 18.36 L15.00 18.38 L14.78 18.43 L14.58 18.51 L14.39 18.63 L14.21 18.79 L14.03 18.99 L13.86 19.24 L13.70 19.61 L13.67 20.77 L13.47 21.27 L13.21 21.56 L12.92 21.76 L12.62 21.89 L12.31 21.97 L12.00 22.00 L11.69 21.97 L11.38 21.89 L11.08 21.76 L10.79 21.56 L10.53 21.27 L10.33 20.77 L10.30 19.61 L10.14 19.24 L9.97 18.99 L9.79 18.79 L9.61 18.63 L9.42 18.51 L9.22 18.43 L9.00 18.38 L8.76 18.36 L8.50 18.38 L8.19 18.44 L7.82 18.58 L6.98 19.39 L6.48 19.59 L6.10 19.61 L5.75 19.55 L5.44 19.44 L5.17 19.27 L4.93 19.07 L4.73 18.83 L4.56 18.56 L4.45 18.25 L4.39 17.90 L4.41 17.52 L4.61 17.02 L5.42 16.18 L5.56 15.81 L5.62 15.50 L5.64 15.24 L5.62 15.00 L5.57 14.78 L5.49 14.58 L5.37 14.39 L5.21 14.21 L5.01 14.03 L4.76 13.86 L4.39 13.70 L3.23 13.67 L2.73 13.47 L2.44 13.21 L2.24 12.92 L2.11 12.62 L2.03 12.31 L2.00 12.00 L2.03 11.69 L2.11 11.38 L2.24 11.08 L2.44 10.79 L2.73 10.53 L3.23 10.33 L4.39 10.30 L4.76 10.14 L5.01 9.97 L5.21 9.79 L5.37 9.61 L5.49 9.42 L5.57 9.22 L5.62 9.00 L5.64 8.76 L5.62 8.50 L5.56 8.19 L5.42 7.82 L4.61 6.98 L4.41 6.48 L4.39 6.10 L4.45 5.75 L4.56 5.44 L4.73 5.17 L4.93 4.93 L5.17 4.73 L5.44 4.56 L5.75 4.45 L6.10 4.39 L6.48 4.41 L6.98 4.61 L7.82 5.42 L8.19 5.56 L8.50 5.62 L8.76 5.64 L9.00 5.62 L9.22 5.57 L9.42 5.49 L9.61 5.37 L9.79 5.21 L9.97 5.01 L10.14 4.76 L10.30 4.39 L10.33 3.23 L10.53 2.73 L10.79 2.44 L11.08 2.24 L11.38 2.11 L11.69 2.03Z"/><circle cx="12" cy="12" r="3.6"/></svg>
<div class="t" style="left:332.5px;top:684.80px;font-size:13px;color:#111827;font-weight:400;letter-spacing:-0.08px;font-family:'Liberation Sans', sans-serif;">USB Microphone</div>
<div class="t" style="left:332.5px;top:701.74px;font-size:12px;color:#6b7280;font-weight:400;letter-spacing:0.25px;font-family:'Liberation Sans', sans-serif;">Samsung</div>
<svg class="abs" style="left:695.25px;top:692.90px" width="12.5" height="12.5" viewBox="0 0 24 24" fill="none" stroke="#6b7280" stroke-width="1.9" stroke-linecap="round" stroke-linejoin="round"><path d="M12.586 2.586A2 2 0 0 0 11.172 2H4a2 2 0 0 0-2 2v7.172a2 2 0 0 0 .586 1.414l8.704 8.704a2.426 2.426 0 0 0 3.42 0l6.58-6.58a2.426 2.426 0 0 0 0-3.42z"/><circle cx="7.5" cy="7.5" r=".5" fill="currentColor"/></svg>
<div class="t" style="left:712px;top:693.65px;font-size:13px;color:#1f2937;font-weight:400;letter-spacing:-0.12px;font-family:'Liberation Sans', sans-serif;">Audio/Video</div>
<div class="abs" style="left:920.5px;top:682.7px;width:0px;height:18px;background:#f3f4f6;border-radius:9px;padding:0;"></div>
<div class="abs" style="left:920.5px;top:682.70px;height:18.5px;background:#f3f4f6;border-radius:9px;padding:0 6px 0 22px;font-size:13px;font-weight:400;-webkit-text-stroke:0.2px #1f2937;color:#1f2937;letter-spacing:-0.45px;line-height:18.5px;white-space:nowrap">MIC2024001</div>
<svg class="abs" style="left:928px;top:688.2px;" width="8" height="7" viewBox="0 0 8 7"><rect x="0" y="0" width="1.3" height="7" fill="#374151"/><rect x="2.2" y="0" width="0.9" height="7" fill="#374151"/><rect x="4" y="0" width="1.3" height="7" fill="#374151"/><rect x="6.4" y="0" width="1.3" height="7" fill="#374151"/></svg>
<svg class="abs" style="left:921.3px;top:705.4000000000001px;" width="9" height="10" viewBox="0 0 9 10"><g fill="none" stroke="#9ca3af" stroke-width="1.1"><circle cx="4.5" cy="2" r="1.4"/><path d="M4.5 3.4V5 M1.6 7.2V5H7.4V7.2"/><ellipse cx="1.6" cy="8.3" rx="1.1" ry="1.2"/><ellipse cx="7.4" cy="8.3" rx="1.1" ry="1.2"/></g></svg>
<div class="t" style="left:936.2px;top:704.54px;font-size:12px;color:#6b7280;font-weight:400;letter-spacing:0.22px;font-family:'Liberation Sans', sans-serif;">PodMic USB</div>
<div class="abs" style="left:1121.5px;top:692.2500000000001px;width:101px;height:19px;background:#dde9fb;border-radius:10px;"></div>
<div class="abs" style="left:1127px;top:695.7500000000001px;width:12px;height:12px;background:#1a73f0;border-radius:6px;"></div>
<div class="t" style="left:1143px;top:695.35px;font-size:13px;color:#1f6fdc;font-weight:400;letter-spacing:-0.14px;font-family:'Liberation Sans', sans-serif;-webkit-text-stroke:0.12px #1f6fdc;">Checked Out</div>
<div class="abs" style="left:1304px;top:689.8500000000001px;width:84.5px;height:19.5px;background:#dbeafe;border-radius:10px;"></div>
<svg class="abs" style="left:1309.6px;top:693.6500000000001px;" width="13" height="12" viewBox="0 0 13 12"><g fill="none" stroke="#3a4ea6" stroke-width="1.2"><circle cx="6.5" cy="2" r="1.5"/><path d="M6.5 3.5V5.6 M2 8.2V5.6H11V8.2 M6.5 5.6V8.2"/><circle cx="2" cy="9.6" r="1.4"/><circle cx="6.5" cy="9.6" r="1.4"/><circle cx="11" cy="9.6" r="1.4"/></g></svg>
<div class="t" style="left:1326.5px;top:693.25px;font-size:13px;color:#2d3f9e;font-weight:400;letter-spacing:-0.11px;font-family:'Liberation Sans', sans-serif;-webkit-text-stroke:0.25px #2d3f9e;">Serialized</div>
<svg class="abs" style="left:1392.75px;top:693.40px" width="12.5" height="12.5" viewBox="0 0 24 24" fill="none" stroke="#d03a3a" stroke-width="1.7" stroke-linecap="round" stroke-linejoin="round"><circle cx="12" cy="12" r="10"/><path d="M8 12h8"/><path d="m12 16 4-4-4-4"/></svg>
<div class="t" style="left:1409.2px;top:693.25px;font-size:13px;color:#d03a3a;font-weight:400;letter-spacing:-0.33px;font-family:'Liberation Sans', sans-serif;">Checked Out</div>
<svg class="abs" style="left:1778.50px;top:693.15px" width="13" height="13" viewBox="0 0 24 24" fill="none" stroke="#4a67d6" stroke-width="1.7" stroke-linecap="round" stroke-linejoin="round"><path d="M1.5 12C4 7 8 5 12 5s8 2 10.5 7C20 17 16 19 12 19S4 17 1.5 12Z"/><circle cx="12" cy="12" r="4.6"/></svg>
<svg class="abs" style="left:1802.20px;top:693.15px" width="13" height="13" viewBox="0 0 24 24" fill="none" stroke="#6a7fd6" stroke-width="1.8" stroke-linecap="round" stroke-linejoin="round"><path d="M14 4H4v16h10"/><path d="M14 4v3.5"/><path d="M14 16.5V20"/><path d="M22 12H9"/><path d="m13 8-4 4 4 4"/></svg>
<svg class="abs" style="left:1826.00px;top:693.15px" width="13" height="13" viewBox="0 0 24 24" fill="none" stroke="#d6ab40" stroke-width="1.8" stroke-linecap="round" stroke-linejoin="round"><path d="M2.5 21.5 L4 15.5 L16.5 3 L21 7.5 L8.5 20 Z" fill="#fbf1d6"/><path d="M4 15.5 L8.5 20"/><path d="M14 5.5 L18.5 10"/></svg>
<svg class="abs" style="left:1850.30px;top:693.15px" width="13" height="13" viewBox="0 0 24 24" fill="none" stroke="#d83636" stroke-width="1.7" stroke-linecap="round" stroke-linejoin="round"><path d="M19 6v14a2 2 0 0 1-2 2H7a2 2 0 0 1-2-2V6" fill="#fde3e3"/><path d="M2.5 5.5h19" stroke-width="3.2"/><path d="M8 6V4a2 2 0 0 1 2-2h4a2 2 0 0 1 2 2v2"/><path d="M10 11v6"/><path d="M14 11v6"/></svg>
<div class="abs" style="left:292px;top:774.9px;width:1583px;height:1px;background:#e5e7eb;"></div>
<div class="abs" style="left:300.5px;top:739.0px;width:23.5px;height:23.5px;background:#f3e8ff;border-radius:7px;"></div>
<svg class="abs" style="left:305.70px;top:744.00px" width="13" height="13" viewBox="0 0 24 24" fill="none" stroke="#7a4fd6" stroke-width="2.1" stroke-linecap="round" stroke-linejoin="round"><path d="M12.00 2.00 L12.31 2.03 L12.62 2.11 L12.92 2.24 L13.21 2.44 L13.47 2.73 L13.67 3.23 L13.70 4.39 L13.86 4.76 L14.03 5.01 L14.21 5.21 L14.39 5.37 L14.58 5.49 L14.78 5.57 L15.00 5.62 L15.24 5.64 L15.50 5.62 L15.81 5.56 L16.18 5.42 L17.02 4.61 L17.52 4.41 L17.90 4.39 L18.25 4.45 L18.56 4.56 L18.83 4.73 L19.07 4.93 L19.27 5.17 L19.44 5.44 L19.55 5.75 L19.61 6.10 L19.59 6.48 L19.39 6.98 L18.58 7.82 L18.44 8.19 L18.38 8.50 L18.36 8.76 L18.38 9.00 L18.43 9.22 L18.51 9.42 L18.63 9.61 L18.79 9.79 L18.99 9.97 L19.24 10.14 L19.61 10.30 L20.77 10.33 L21.27 10.53 L21.56 10.79 L21.76 11.08 L21.89 11.38 L21.97 11.69 L22.00 12.00 L21.97 12.31 L21.89 12.62 L21.76 12.92 L21.56 13.21 L21.27 13.47 L20.77 13.67 L19.61 13.70 L19.24 13.86 L18.99 14.03 L18.79 14.21 L18.63 14.39 L18.51 14.58 L18.43 14.78 L18.38 15.00 L18.36 15.24 L18.38 15.50 L18.44 15.81 L18.58 16.18 L19.39 17.02 L19.59 17.52 L19.61 17.90 L19.55 18.25 L19.44 18.56 L19.27 18.83 L19.07 19.07 L18.83 19.27 L18.56 19.44 L18.25 19.55 L17.90 19.61 L17.52 19.59 L17.02 19.39 L16.18 18.58 L15.81 18.44 L15.50 18.38 L15.24 18.36 L15.00 18.38 L14.78 18.43 L14.58 18.51 L14.39 18.63 L14.21 18.79 L14.03 18.99 L13.86 19.24 L13.70 19.61 L13.67 20.77 L13.47 21.27 L13.21 21.56 L12.92 21.76 L12.62 21.89 L12.31 21.97 L12.00 22.00 L11.69 21.97 L11.38 21.89 L11.08 21.76 L10.79 21.56 L10.53 21.27 L10.33 20.77 L10.30 19.61 L10.14 19.24 L9.97 18.99 L9.79 18.79 L9.61 18.63 L9.42 18.51 L9.22 18.43 L9.00 18.38 L8.76 18.36 L8.50 18.38 L8.19 18.44 L7.82 18.58 L6.98 19.39 L6.48 19.59 L6.10 19.61 L5.75 19.55 L5.44 19.44 L5.17 19.27 L4.93 19.07 L4.73 18.83 L4.56 18.56 L4.45 18.25 L4.39 17.90 L4.41 17.52 L4.61 17.02 L5.42 16.18 L5.56 15.81 L5.62 15.50 L5.64 15.24 L5.62 15.00 L5.57 14.78 L5.49 14.58 L5.37 14.39 L5.21 14.21 L5.01 14.03 L4.76 13.86 L4.39 13.70 L3.23 13.67 L2.73 13.47 L2.44 13.21 L2.24 12.92 L2.11 12.62 L2.03 12.31 L2.00 12.00 L2.03 11.69 L2.11 11.38 L2.24 11.08 L2.44 10.79 L2.73 10.53 L3.23 10.33 L4.39 10.30 L4.76 10.14 L5.01 9.97 L5.21 9.79 L5.37 9.61 L5.49 9.42 L5.57 9.22 L5.62 9.00 L5.64 8.76 L5.62 8.50 L5.56 8.19 L5.42 7.82 L4.61 6.98 L4.41 6.48 L4.39 6.10 L4.45 5.75 L4.56 5.44 L4.73 5.17 L4.93 4.93 L5.17 4.73 L5.44 4.56 L5.75 4.45 L6.10 4.39 L6.48 4.41 L6.98 4.61 L7.82 5.42 L8.19 5.56 L8.50 5.62 L8.76 5.64 L9.00 5.62 L9.22 5.57 L9.42 5.49 L9.61 5.37 L9.79 5.21 L9.97 5.01 L10.14 4.76 L10.30 4.39 L10.33 3.23 L10.53 2.73 L10.79 2.44 L11.08 2.24 L11.38 2.11 L11.69 2.03Z"/><circle cx="12" cy="12" r="3.6"/></svg>
<div class="t" style="left:332.5px;top:736.40px;font-size:13px;color:#111827;font-weight:400;letter-spacing:-0.09px;font-family:'Liberation Sans', sans-serif;">Audio Splitter Cable</div>
<div class="t" style="left:332.5px;top:753.34px;font-size:12px;color:#6b7280;font-weight:400;letter-spacing:0.25px;font-family:'Liberation Sans', sans-serif;">Cisco</div>
<svg class="abs" style="left:695.25px;top:743.75px" width="12.5" height="12.5" viewBox="0 0 24 24" fill="none" stroke="#6b7280" stroke-width="1.9" stroke-linecap="round" stroke-linejoin="round"><path d="M12.586 2.586A2 2 0 0 0 11.172 2H4a2 2 0 0 0-2 2v7.172a2 2 0 0 0 .586 1.414l8.704 8.704a2.426 2.426 0 0 0 3.42 0l6.58-6.58a2.426 2.426 0 0 0 0-3.42z"/><circle cx="7.5" cy="7.5" r=".5" fill="currentColor"/></svg>
<div class="t" style="left:712px;top:744.50px;font-size:13px;color:#1f2937;font-weight:400;letter-spacing:-0.12px;font-family:'Liberation Sans', sans-serif;">Audio/Video</div>
<svg class="abs" style="left:919.50px;top:736.50px" width="13" height="13" viewBox="0 0 24 24" fill="none" stroke="#6b7280" stroke-width="1.6" stroke-linecap="round" stroke-linejoin="round"><circle cx="12" cy="12" r="10"/><path d="M8 12h8"/></svg>
<div class="t" style="left:936.2px;top:736.74px;font-size:12px;color:#6b7280;font-weight:400;letter-spacing:0.28px;font-family:'Liberation Sans', sans-serif;">No Serial</div>
<svg class="abs" style="left:921.3px;top:754.3000000000001px;" width="9" height="10" viewBox="0 0 9 10"><g fill="none" stroke="#9ca3af" stroke-width="1.1"><circle cx="4.5" cy="2" r="1.4"/><path d="M4.5 3.4V5 M1.6 7.2V5H7.4V7.2"/><ellipse cx="1.6" cy="8.3" rx="1.1" ry="1.2"/><ellipse cx="7.4" cy="8.3" rx="1.1" ry="1.2"/></g></svg>
<div class="t" style="left:936.2px;top:753.44px;font-size:12px;color:#6b7280;font-weight:400;letter-spacing:0.22px;font-family:'Liberation Sans', sans-serif;">AudioSplit-3.5</div>
<div class="abs" style="left:1121.5px;top:743.5px;width:79px;height:19px;background:#e0f6e5;border-radius:10px;"></div>
<div class="abs" style="left:1127px;top:747.0px;width:12px;height:12px;background:#22a03c;border-radius:6px;"></div>
<div class="t" style="left:1143px;top:746.60px;font-size:13px;color:#279a47;font-weight:400;letter-spacing:-0.12px;font-family:'Liberation Sans', sans-serif;-webkit-text-stroke:0.12px #279a47;">Available</div>
<div class="abs" style="left:1304px;top:742.0px;width:77px;height:18px;background:#f3f4f6;border-radius:9px;"></div>
<svg class="abs" style="left:1309.50px;top:744.50px" width="13" height="13" viewBox="0 0 24 24" fill="none" stroke="#374151" stroke-width="1.7" stroke-linecap="round" stroke-linejoin="round"><path d="M2.97 12.92A2 2 0 0 0 2 14.63v3.24a2 2 0 0 0 .97 1.71l3 1.8a2 2 0 0 0 2.06 0L12 19v-5.5l-5-3-4.03 2.42Z"/><path d="m7 16.5-4.74-2.85"/><path d="m7 16.5 5-3"/><path d="M7 16.5v5.17"/><path d="M12 13.5V19l3.97 2.38a2 2 0 0 0 2.06 0l3-1.8a2 2 0 0 0 .97-1.71v-3.24a2 2 0 0 0-.97-1.71L17 10.5l-5 3Z"/><path d="m17 16.5-5-3"/><path d="m17 16.5 4.74-2.85"/><path d="M17 16.5v5.17"/><path d="M7.97 4.42A2 2 0 0 0 7 6.13v4.37l5 3 5-3V6.13a2 2 0 0 0-.97-1.71l-3-1.8a2 2 0 0 0-2.06 0l-3 1.8Z"/><path d="M12 8 7.26 5.15"/><path d="m12 8 4.74-2.85"/><path d="M12 13.5V8"/></svg>
<div class="t" style="left:1326.4px;top:744.60px;font-size:13px;color:#1f2937;font-weight:400;letter-spacing:-0.15px;font-family:'Liberation Sans', sans-serif;-webkit-text-stroke:0.3px #1f2937;">Quantity</div>
<svg class="abs" style="left:1384.75px;top:744.75px" width="12.5" height="12.5" viewBox="0 0 24 24" fill="none" stroke="#6b7280" stroke-width="1.6" stroke-linecap="round" stroke-linejoin="round"><path d="M2.97 12.92A2 2 0 0 0 2 14.63v3.24a2 2 0 0 0 .97 1.71l3 1.8a2 2 0 0 0 2.06 0L12 19v-5.5l-5-3-4.03 2.42Z"/><path d="m7 16.5-4.74-2.85"/><path d="m7 16.5 5-3"/><path d="M7 16.5v5.17"/><path d="M12 13.5V19l3.97 2.38a2 2 0 0 0 2.06 0l3-1.8a2 2 0 0 0 .97-1.71v-3.24a2 2 0 0 0-.97-1.71L17 10.5l-5 3Z"/><path d="m17 16.5-5-3"/><path d="m17 16.5 4.74-2.85"/><path d="M17 16.5v5.17"/><path d="M7.97 4.42A2 2 0 0 0 7 6.13v4.37l5 3 5-3V6.13a2 2 0 0 0-.97-1.71l-3-1.8a2 2 0 0 0-2.06 0l-3 1.8Z"/><path d="M12 8 7.26 5.15"/><path d="m12 8 4.74-2.85"/><path d="M12 13.5V8"/></svg>
<div class="t" style="left:1401px;top:744.60px;font-size:13px;letter-spacing:-0.1px;color:#6b7280"><span style="color:#22a04b;-webkit-text-stroke:0.15px #22a04b;letter-spacing:-0.1px">30</span>/ 25</div>
<svg class="abs" style="left:1730.30px;top:744.50px" width="13" height="13" viewBox="0 0 24 24" fill="none" stroke="#4a67d6" stroke-width="1.7" stroke-linecap="round" stroke-linejoin="round"><path d="M1.5 12C4 7 8 5 12 5s8 2 10.5 7C20 17 16 19 12 19S4 17 1.5 12Z"/><circle cx="12" cy="12" r="4.6"/></svg>
<svg class="abs" style="left:1753.50px;top:744.50px" width="13" height="13" viewBox="0 0 24 24" fill="none" stroke="#55a066" stroke-width="1.8" stroke-linecap="round" stroke-linejoin="round"><path d="M14 5H5a1 1 0 0 0-1 1v12a1 1 0 0 0 1 1h9"/><path d="M14 5v3"/><path d="M14 16v3"/><path d="M9 12h12"/><path d="m17 8 4 4-4 4"/></svg>
<svg class="abs" style="left:1778.50px;top:744.50px" width="13" height="13" viewBox="0 0 24 24" fill="none" stroke="#4562d0" stroke-width="1.5" stroke-linecap="round" stroke-linejoin="round"><rect width="20" height="20" x="2" y="2" rx="1"/><path d="M7.5 12h9"/><path d="M12 7.5v9"/></svg>
<svg class="abs" style="left:1802.20px;top:744.50px" width="13" height="13" viewBox="0 0 24 24" fill="none" stroke="#8552d8" stroke-width="1.8" stroke-linecap="round" stroke-linejoin="round"><path d="M3 5h10"/><path d="M18 5h3"/><path d="M3 12h4"/><path d="M12 12h9"/><path d="M3 19h11"/><path d="M19 19h2"/><circle cx="15.5" cy="5" r="2.5"/><circle cx="9.5" cy="12" r="2.5"/><circle cx="16.5" cy="19" r="2.5"/></svg>
<svg class="abs" style="left:1826.00px;top:744.50px" width="13" height="13" viewBox="0 0 24 24" fill="none" stroke="#d6ab40" stroke-width="1.8" stroke-linecap="round" stroke-linejoin="round"><path d="M2.5 21.5 L4 15.5 L16.5 3 L21 7.5 L8.5 20 Z" fill="#fbf1d6"/><path d="M4 15.5 L8.5 20"/><path d="M14 5.5 L18.5 10"/></svg>
<svg class="abs" style="left:1850.30px;top:744.50px" width="13" height="13" viewBox="0 0 24 24" fill="none" stroke="#d83636" stroke-width="1.7" stroke-linecap="round" stroke-linejoin="round"><path d="M19 6v14a2 2 0 0 1-2 2H7a2 2 0 0 1-2-2V6" fill="#fde3e3"/><path d="M2.5 5.5h19" stroke-width="3.2"/><path d="M8 6V4a2 2 0 0 1 2-2h4a2 2 0 0 1 2 2v2"/><path d="M10 11v6"/><path d="M14 11v6"/></svg>
<div class="abs" style="left:292px;top:823.9px;width:1583px;height:1px;background:#e5e7eb;"></div>
<div class="abs" style="left:300.5px;top:787.9px;width:23.5px;height:23.5px;background:#f3e8ff;border-radius:7px;"></div>
<svg class="abs" style="left:305.70px;top:792.90px" width="13" height="13" viewBox="0 0 24 24" fill="none" stroke="#7a4fd6" stroke-width="2.1" stroke-linecap="round" stroke-linejoin="round"><path d="M12.00 2.00 L12.31 2.03 L12.62 2.11 L12.92 2.24 L13.21 2.44 L13.47 2.73 L13.67 3.23 L13.70 4.39 L13.86 4.76 L14.03 5.01 L14.21 5.21 L14.39 5.37 L14.58 5.49 L14.78 5.57 L15.00 5.62 L15.24 5.64 L15.50 5.62 L15.81 5.56 L16.18 5.42 L17.02 4.61 L17.52 4.41 L17.90 4.39 L18.25 4.45 L18.56 4.56 L18.83 4.73 L19.07 4.93 L19.27 5.17 L19.44 5.44 L19.55 5.75 L19.61 6.10 L19.59 6.48 L19.39 6.98 L18.58 7.82 L18.44 8.19 L18.38 8.50 L18.36 8.76 L18.38 9.00 L18.43 9.22 L18.51 9.42 L18.63 9.61 L18.79 9.79 L18.99 9.97 L19.24 10.14 L19.61 10.30 L20.77 10.33 L21.27 10.53 L21.56 10.79 L21.76 11.08 L21.89 11.38 L21.97 11.69 L22.00 12.00 L21.97 12.31 L21.89 12.62 L21.76 12.92 L21.56 13.21 L21.27 13.47 L20.77 13.67 L19.61 13.70 L19.24 13.86 L18.99 14.03 L18.79 14.21 L18.63 14.39 L18.51 14.58 L18.43 14.78 L18.38 15.00 L18.36 15.24 L18.38 15.50 L18.44 15.81 L18.58 16.18 L19.39 17.02 L19.59 17.52 L19.61 17.90 L19.55 18.25 L19.44 18.56 L19.27 18.83 L19.07 19.07 L18.83 19.27 L18.56 19.44 L18.25 19.55 L17.90 19.61 L17.52 19.59 L17.02 19.39 L16.18 18.58 L15.81 18.44 L15.50 18.38 L15.24 18.36 L15.00 18.38 L14.78 18.43 L14.58 18.51 L14.39 18.63 L14.21 18.79 L14.03 18.99 L13.86 19.24 L13.70 19.61 L13.67 20.77 L13.47 21.27 L13.21 21.56 L12.92 21.76 L12.62 21.89 L12.31 21.97 L12.00 22.00 L11.69 21.97 L11.38 21.89 L11.08 21.76 L10.79 21.56 L10.53 21.27 L10.33 20.77 L10.30 19.61 L10.14 19.24 L9.97 18.99 L9.79 18.79 L9.61 18.63 L9.42 18.51 L9.22 18.43 L9.00 18.38 L8.76 18.36 L8.50 18.38 L8.19 18.44 L7.82 18.58 L6.98 19.39 L6.48 19.59 L6.10 19.61 L5.75 19.55 L5.44 19.44 L5.17 19.27 L4.93 19.07 L4.73 18.83 L4.56 18.56 L4.45 18.25 L4.39 17.90 L4.41 17.52 L4.61 17.02 L5.42 16.18 L5.56 15.81 L5.62 15.50 L5.64 15.24 L5.62 15.00 L5.57 14.78 L5.49 14.58 L5.37 14.39 L5.21 14.21 L5.01 14.03 L4.76 13.86 L4.39 13.70 L3.23 13.67 L2.73 13.47 L2.44 13.21 L2.24 12.92 L2.11 12.62 L2.03 12.31 L2.00 12.00 L2.03 11.69 L2.11 11.38 L2.24 11.08 L2.44 10.79 L2.73 10.53 L3.23 10.33 L4.39 10.30 L4.76 10.14 L5.01 9.97 L5.21 9.79 L5.37 9.61 L5.49 9.42 L5.57 9.22 L5.62 9.00 L5.64 8.76 L5.62 8.50 L5.56 8.19 L5.42 7.82 L4.61 6.98 L4.41 6.48 L4.39 6.10 L4.45 5.75 L4.56 5.44 L4.73 5.17 L4.93 4.93 L5.17 4.73 L5.44 4.56 L5.75 4.45 L6.10 4.39 L6.48 4.41 L6.98 4.61 L7.82 5.42 L8.19 5.56 L8.50 5.62 L8.76 5.64 L9.00 5.62 L9.22 5.57 L9.42 5.49 L9.61 5.37 L9.79 5.21 L9.97 5.01 L10.14 4.76 L10.30 4.39 L10.33 3.23 L10.53 2.73 L10.79 2.44 L11.08 2.24 L11.38 2.11 L11.69 2.03Z"/><circle cx="12" cy="12" r="3.6"/></svg>
<div class="t" style="left:332.5px;top:785.20px;font-size:13px;color:#111827;font-weight:400;letter-spacing:-0.05px;font-family:'Liberation Sans', sans-serif;">Ethernet Cable 3m</div>
<div class="t" style="left:332.5px;top:802.14px;font-size:12px;color:#6b7280;font-weight:400;letter-spacing:0.25px;font-family:'Liberation Sans', sans-serif;">Cisco</div>
<svg class="abs" style="left:695.25px;top:792.65px" width="12.5" height="12.5" viewBox="0 0 24 24" fill="none" stroke="#6b7280" stroke-width="1.9" stroke-linecap="round" stroke-linejoin="round"><path d="M12.586 2.586A2 2 0 0 0 11.172 2H4a2 2 0 0 0-2 2v7.172a2 2 0 0 0 .586 1.414l8.704 8.704a2.426 2.426 0 0 0 3.42 0l6.58-6.58a2.426 2.426 0 0 0 0-3.42z"/><circle cx="7.5" cy="7.5" r=".5" fill="currentColor"/></svg>
<div class="t" style="left:712px;top:793.40px;font-size:13px;color:#1f2937;font-weight:400;letter-spacing:-0.12px;font-family:'Liberation Sans', sans-serif;">Network Equipment</div>
<svg class="abs" style="left:919.50px;top:785.30px" width="13" height="13" viewBox="0 0 24 24" fill="none" stroke="#6b7280" stroke-width="1.6" stroke-linecap="round" stroke-linejoin="round"><circle cx="12" cy="12" r="10"/><path d="M8 12h8"/></svg>
<div class="t" style="left:936.2px;top:785.54px;font-size:12px;color:#6b7280;font-weight:400;letter-spacing:0.28px;font-family:'Liberation Sans', sans-serif;">No Serial</div>
<svg class="abs" style="left:921.3px;top:803.1px;" width="9" height="10" viewBox="0 0 9 10"><g fill="none" stroke="#9ca3af" stroke-width="1.1"><circle cx="4.5" cy="2" r="1.4"/><path d="M4.5 3.4V5 M1.6 7.2V5H7.4V7.2"/><ellipse cx="1.6" cy="8.3" rx="1.1" ry="1.2"/><ellipse cx="7.4" cy="8.3" rx="1.1" ry="1.2"/></g></svg>
<div class="t" style="left:936.2px;top:802.24px;font-size:12px;color:#6b7280;font-weight:400;letter-spacing:0.22px;font-family:'Liberation Sans', sans-serif;">CAT6-3M-BLK</div>
<div class="abs" style="left:1121.5px;top:792.4px;width:79px;height:19px;background:#e0f6e5;border-radius:10px;"></div>
<div class="abs" style="left:1127px;top:795.9px;width:12px;height:12px;background:#22a03c;border-radius:6px;"></div>
<div class="t" style="left:1143px;top:795.50px;font-size:13px;color:#279a47;font-weight:400;letter-spacing:-0.12px;font-family:'Liberation Sans', sans-serif;-webkit-text-stroke:0.12px #279a47;">Available</div>
<div class="abs" style="left:1304px;top:790.9px;width:77px;height:18px;background:#f3f4f6;border-radius:9px;"></div>
<svg class="abs" style="left:1309.50px;top:793.40px" width="13" height="13" viewBox="0 0 24 24" fill="none" stroke="#374151" stroke-width="1.7" stroke-linecap="round" stroke-linejoin="round"><path d="M2.97 12.92A2 2 0 0 0 2 14.63v3.24a2 2 0 0 0 .97 1.71l3 1.8a2 2 0 0 0 2.06 0L12 19v-5.5l-5-3-4.03 2.42Z"/><path d="m7 16.5-4.74-2.85"/><path d="m7 16.5 5-3"/><path d="M7 16.5v5.17"/><path d="M12 13.5V19l3.97 2.38a2 2 0 0 0 2.06 0l3-1.8a2 2 0 0 0 .97-1.71v-3.24a2 2 0 0 0-.97-1.71L17 10.5l-5 3Z"/><path d="m17 16.5-5-3"/><path d="m17 16.5 4.74-2.85"/><path d="M17 16.5v5.17"/><path d="M7.97 4.42A2 2 0 0 0 7 6.13v4.37l5 3 5-3V6.13a2 2 0 0 0-.97-1.71l-3-1.8a2 2 0 0 0-2.06 0l-3 1.8Z"/><path d="M12 8 7.26 5.15"/><path d="m12 8 4.74-2.85"/><path d="M12 13.5V8"/></svg>
<div class="t" style="left:1326.4px;top:793.50px;font-size:13px;color:#1f2937;font-weight:400;letter-spacing:-0.15px;font-family:'Liberation Sans', sans-serif;-webkit-text-stroke:0.3px #1f2937;">Quantity</div>
<svg class="abs" style="left:1384.75px;top:793.65px" width="12.5" height="12.5" viewBox="0 0 24 24" fill="none" stroke="#6b7280" stroke-width="1.6" stroke-linecap="round" stroke-linejoin="round"><path d="M2.97 12.92A2 2 0 0 0 2 14.63v3.24a2 2 0 0 0 .97 1.71l3 1.8a2 2 0 0 0 2.06 0L12 19v-5.5l-5-3-4.03 2.42Z"/><path d="m7 16.5-4.74-2.85"/><path d="m7 16.5 5-3"/><path d="M7 16.5v5.17"/><path d="M12 13.5V19l3.97 2.38a2 2 0 0 0 2.06 0l3-1.8a2 2 0 0 0 .97-1.71v-3.24a2 2 0 0 0-.97-1.71L17 10.5l-5 3Z"/><path d="m17 16.5-5-3"/><path d="m17 16.5 4.74-2.85"/><path d="M17 16.5v5.17"/><path d="M7.97 4.42A2 2 0 0 0 7 6.13v4.37l5 3 5-3V6.13a2 2 0 0 0-.97-1.71l-3-1.8a2 2 0 0 0-2.06 0l-3 1.8Z"/><path d="M12 8 7.26 5.15"/><path d="m12 8 4.74-2.85"/><path d="M12 13.5V8"/></svg>
<div class="t" style="left:1401px;top:793.50px;font-size:13px;letter-spacing:-0.1px;color:#6b7280"><span style="color:#22a04b;-webkit-text-stroke:0.15px #22a04b;letter-spacing:-0.1px">95</span>/ 105</div>
<svg class="abs" style="left:1706.50px;top:793.40px" width="13" height="13" viewBox="0 0 24 24" fill="none" stroke="#4a67d6" stroke-width="1.7" stroke-linecap="round" stroke-linejoin="round"><path d="M1.5 12C4 7 8 5 12 5s8 2 10.5 7C20 17 16 19 12 19S4 17 1.5 12Z"/><circle cx="12" cy="12" r="4.6"/></svg>
<svg class="abs" style="left:1730.30px;top:793.40px" width="13" height="13" viewBox="0 0 24 24" fill="none" stroke="#55a066" stroke-width="1.8" stroke-linecap="round" stroke-linejoin="round"><path d="M14 5H5a1 1 0 0 0-1 1v12a1 1 0 0 0 1 1h9"/><path d="M14 5v3"/><path d="M14 16v3"/><path d="M9 12h12"/><path d="m17 8 4 4-4 4"/></svg>
<svg class="abs" style="left:1753.50px;top:793.40px" width="13" height="13" viewBox="0 0 24 24" fill="none" stroke="#6a7fd6" stroke-width="1.8" stroke-linecap="round" stroke-linejoin="round"><path d="M14 4H4v16h10"/><path d="M14 4v3.5"/><path d="M14 16.5V20"/><path d="M22 12H9"/><path d="m13 8-4 4 4 4"/></svg>
<svg class="abs" style="left:1778.50px;top:793.40px" width="13" height="13" viewBox="0 0 24 24" fill="none" stroke="#4562d0" stroke-width="1.5" stroke-linecap="round" stroke-linejoin="round"><rect width="20" height="20" x="2" y="2" rx="1"/><path d="M7.5 12h9"/><path d="M12 7.5v9"/></svg>
<svg class="abs" style="left:1802.20px;top:793.40px" width="13" height="13" viewBox="0 0 24 24" fill="none" stroke="#8552d8" stroke-width="1.8" stroke-linecap="round" stroke-linejoin="round"><path d="M3 5h10"/><path d="M18 5h3"/><path d="M3 12h4"/><path d="M12 12h9"/><path d="M3 19h11"/><path d="M19 19h2"/><circle cx="15.5" cy="5" r="2.5"/><circle cx="9.5" cy="12" r="2.5"/><circle cx="16.5" cy="19" r="2.5"/></svg>
<svg class="abs" style="left:1826.00px;top:793.40px" width="13" height="13" viewBox="0 0 24 24" fill="none" stroke="#d6ab40" stroke-width="1.8" stroke-linecap="round" stroke-linejoin="round"><path d="M2.5 21.5 L4 15.5 L16.5 3 L21 7.5 L8.5 20 Z" fill="#fbf1d6"/><path d="M4 15.5 L8.5 20"/><path d="M14 5.5 L18.5 10"/></svg>
<svg class="abs" style="left:1850.30px;top:793.40px" width="13" height="13" viewBox="0 0 24 24" fill="none" stroke="#d83636" stroke-width="1.7" stroke-linecap="round" stroke-linejoin="round"><path d="M19 6v14a2 2 0 0 1-2 2H7a2 2 0 0 1-2-2V6" fill="#fde3e3"/><path d="M2.5 5.5h19" stroke-width="3.2"/><path d="M8 6V4a2 2 0 0 1 2-2h4a2 2 0 0 1 2 2v2"/><path d="M10 11v6"/><path d="M14 11v6"/></svg>
<div class="abs" style="left:292px;top:876.8px;width:1583px;height:1px;background:#e5e7eb;"></div>
<div class="abs" style="left:300.5px;top:838.8499999999999px;width:23.5px;height:23.5px;background:#f3e8ff;border-radius:7px;"></div>
<svg class="abs" style="left:305.70px;top:843.85px" width="13" height="13" viewBox="0 0 24 24" fill="none" stroke="#7a4fd6" stroke-width="2.1" stroke-linecap="round" stroke-linejoin="round"><path d="M12.00 2.00 L12.31 2.03 L12.62 2.11 L12.92 2.24 L13.21 2.44 L13.47 2.73 L13.67 3.23 L13.70 4.39 L13.86 4.76 L14.03 5.01 L14.21 5.21 L14.39 5.37 L14.58 5.49 L14.78 5.57 L15.00 5.62 L15.24 5.64 L15.50 5.62 L15.81 5.56 L16.18 5.42 L17.02 4.61 L17.52 4.41 L17.90 4.39 L18.25 4.45 L18.56 4.56 L18.83 4.73 L19.07 4.93 L19.27 5.17 L19.44 5.44 L19.55 5.75 L19.61 6.10 L19.59 6.48 L19.39 6.98 L18.58 7.82 L18.44 8.19 L18.38 8.50 L18.36 8.76 L18.38 9.00 L18.43 9.22 L18.51 9.42 L18.63 9.61 L18.79 9.79 L18.99 9.97 L19.24 10.14 L19.61 10.30 L20.77 10.33 L21.27 10.53 L21.56 10.79 L21.76 11.08 L21.89 11.38 L21.97 11.69 L22.00 12.00 L21.97 12.31 L21.89 12.62 L21.76 12.92 L21.56 13.21 L21.27 13.47 L20.77 13.67 L19.61 13.70 L19.24 13.86 L18.99 14.03 L18.79 14.21 L18.63 14.39 L18.51 14.58 L18.43 14.78 L18.38 15.00 L18.36 15.24 L18.38 15.50 L18.44 15.81 L18.58 16.18 L19.39 17.02 L19.59 17.52 L19.61 17.90 L19.55 18.25 L19.44 18.56 L19.27 18.83 L19.07 19.07 L18.83 19.27 L18.56 19.44 L18.25 19.55 L17.90 19.61 L17.52 19.59 L17.02 19.39 L16.18 18.58 L15.81 18.44 L15.50 18.38 L15.24 18.36 L15.00 18.38 L14.78 18.43 L14.58 18.51 L14.39 18.63 L14.21 18.79 L14.03 18.99 L13.86 19.24 L13.70 19.61 L13.67 20.77 L13.47 21.27 L13.21 21.56 L12.92 21.76 L12.62 21.89 L12.31 21.97 L12.00 22.00 L11.69 21.97 L11.38 21.89 L11.08 21.76 L10.79 21.56 L10.53 21.27 L10.33 20.77 L10.30 19.61 L10.14 19.24 L9.97 18.99 L9.79 18.79 L9.61 18.63 L9.42 18.51 L9.22 18.43 L9.00 18.38 L8.76 18.36 L8.50 18.38 L8.19 18.44 L7.82 18.58 L6.98 19.39 L6.48 19.59 L6.10 19.61 L5.75 19.55 L5.44 19.44 L5.17 19.27 L4.93 19.07 L4.73 18.83 L4.56 18.56 L4.45 18.25 L4.39 17.90 L4.41 17.52 L4.61 17.02 L5.42 16.18 L5.56 15.81 L5.62 15.50 L5.64 15.24 L5.62 15.00 L5.57 14.78 L5.49 14.58 L5.37 14.39 L5.21 14.21 L5.01 14.03 L4.76 13.86 L4.39 13.70 L3.23 13.67 L2.73 13.47 L2.44 13.21 L2.24 12.92 L2.11 12.62 L2.03 12.31 L2.00 12.00 L2.03 11.69 L2.11 11.38 L2.24 11.08 L2.44 10.79 L2.73 10.53 L3.23 10.33 L4.39 10.30 L4.76 10.14 L5.01 9.97 L5.21 9.79 L5.37 9.61 L5.49 9.42 L5.57 9.22 L5.62 9.00 L5.64 8.76 L5.62 8.50 L5.56 8.19 L5.42 7.82 L4.61 6.98 L4.41 6.48 L4.39 6.10 L4.45 5.75 L4.56 5.44 L4.73 5.17 L4.93 4.93 L5.17 4.73 L5.44 4.56 L5.75 4.45 L6.10 4.39 L6.48 4.41 L6.98 4.61 L7.82 5.42 L8.19 5.56 L8.50 5.62 L8.76 5.64 L9.00 5.62 L9.22 5.57 L9.42 5.49 L9.61 5.37 L9.79 5.21 L9.97 5.01 L10.14 4.76 L10.30 4.39 L10.33 3.23 L10.53 2.73 L10.79 2.44 L11.08 2.24 L11.38 2.11 L11.69 2.03Z"/><circle cx="12" cy="12" r="3.6"/></svg>
<div class="t" style="left:332.5px;top:835.50px;font-size:13px;color:#111827;font-weight:400;letter-spacing:-0.3px;font-family:'Liberation Sans', sans-serif;">WiFi Range Extender</div>
<div class="t" style="left:332.5px;top:852.44px;font-size:12px;color:#6b7280;font-weight:400;letter-spacing:0.25px;font-family:'Liberation Sans', sans-serif;">Cisco</div>
<svg class="abs" style="left:695.25px;top:843.60px" width="12.5" height="12.5" viewBox="0 0 24 24" fill="none" stroke="#6b7280" stroke-width="1.9" stroke-linecap="round" stroke-linejoin="round"><path d="M12.586 2.586A2 2 0 0 0 11.172 2H4a2 2 0 0 0-2 2v7.172a2 2 0 0 0 .586 1.414l8.704 8.704a2.426 2.426 0 0 0 3.42 0l6.58-6.58a2.426 2.426 0 0 0 0-3.42z"/><circle cx="7.5" cy="7.5" r=".5" fill="currentColor"/></svg>
<div class="t" style="left:712px;top:844.35px;font-size:13px;color:#1f2937;font-weight:400;letter-spacing:-0.12px;font-family:'Liberation Sans', sans-serif;">Network Equipment</div>
<div class="abs" style="left:920.5px;top:833.4px;width:0px;height:18px;background:#f3f4f6;border-radius:9px;padding:0;"></div>
<div class="abs" style="left:920.5px;top:833.40px;height:18.5px;background:#f3f4f6;border-radius:9px;padding:0 6px 0 22px;font-size:13px;font-weight:400;-webkit-text-stroke:0.2px #1f2937;color:#1f2937;letter-spacing:-0.45px;line-height:18.5px;white-space:nowrap">WRE6001</div>
<svg class="abs" style="left:928px;top:838.9px;" width="8" height="7" viewBox="0 0 8 7"><rect x="0" y="0" width="1.3" height="7" fill="#374151"/><rect x="2.2" y="0" width="0.9" height="7" fill="#374151"/><rect x="4" y="0" width="1.3" height="7" fill="#374151"/><rect x="6.4" y="0" width="1.3" height="7" fill="#374151"/></svg>
<svg class="abs" style="left:921.3px;top:856.1px;" width="9" height="10" viewBox="0 0 9 10"><g fill="none" stroke="#9ca3af" stroke-width="1.1"><circle cx="4.5" cy="2" r="1.4"/><path d="M4.5 3.4V5 M1.6 7.2V5H7.4V7.2"/><ellipse cx="1.6" cy="8.3" rx="1.1" ry="1.2"/><ellipse cx="7.4" cy="8.3" rx="1.1" ry="1.2"/></g></svg>
<div class="t" style="left:936.2px;top:855.24px;font-size:12px;color:#6b7280;font-weight:400;letter-spacing:0.22px;font-family:'Liberation Sans', sans-serif;">AC1200 Extender</div>
<div class="abs" style="left:1121.5px;top:842.9499999999999px;width:101px;height:19px;background:#dde9fb;border-radius:10px;"></div>
<div class="abs" style="left:1127px;top:846.4499999999999px;width:12px;height:12px;background:#1a73f0;border-radius:6px;"></div>
<div class="t" style="left:1143px;top:846.05px;font-size:13px;color:#1f6fdc;font-weight:400;letter-spacing:-0.14px;font-family:'Liberation Sans', sans-serif;-webkit-text-stroke:0.12px #1f6fdc;">Checked Out</div>
<div class="abs" style="left:1304px;top:840.55px;width:84.5px;height:19.5px;background:#dbeafe;border-radius:10px;"></div>
<svg class="abs" style="left:1309.6px;top:844.3499999999999px;" width="13" height="12" viewBox="0 0 13 12"><g fill="none" stroke="#3a4ea6" stroke-width="1.2"><circle cx="6.5" cy="2" r="1.5"/><path d="M6.5 3.5V5.6 M2 8.2V5.6H11V8.2 M6.5 5.6V8.2"/><circle cx="2" cy="9.6" r="1.4"/><circle cx="6.5" cy="9.6" r="1.4"/><circle cx="11" cy="9.6" r="1.4"/></g></svg>
<div class="t" style="left:1326.5px;top:843.95px;font-size:13px;color:#2d3f9e;font-weight:400;letter-spacing:-0.11px;font-family:'Liberation Sans', sans-serif;-webkit-text-stroke:0.25px #2d3f9e;">Serialized</div>
<svg class="abs" style="left:1392.75px;top:844.10px" width="12.5" height="12.5" viewBox="0 0 24 24" fill="none" stroke="#d03a3a" stroke-width="1.7" stroke-linecap="round" stroke-linejoin="round"><circle cx="12" cy="12" r="10"/><path d="M8 12h8"/><path d="m12 16 4-4-4-4"/></svg>
<div class="t" style="left:1409.2px;top:843.95px;font-size:13px;color:#d03a3a;font-weight:400;letter-spacing:-0.33px;font-family:'Liberation Sans', sans-serif;">Checked Out</div>
<svg class="abs" style="left:1778.50px;top:843.85px" width="13" height="13" viewBox="0 0 24 24" fill="none" stroke="#4a67d6" stroke-width="1.7" stroke-linecap="round" stroke-linejoin="round"><path d="M1.5 12C4 7 8 5 12 5s8 2 10.5 7C20 17 16 19 12 19S4 17 1.5 12Z"/><circle cx="12" cy="12" r="4.6"/></svg>
<svg class="abs" style="left:1802.20px;top:843.85px" width="13" height="13" viewBox="0 0 24 24" fill="none" stroke="#6a7fd6" stroke-width="1.8" stroke-linecap="round" stroke-linejoin="round"><path d="M14 4H4v16h10"/><path d="M14 4v3.5"/><path d="M14 16.5V20"/><path d="M22 12H9"/><path d="m13 8-4 4 4 4"/></svg>
<svg class="abs" style="left:1826.00px;top:843.85px" width="13" height="13" viewBox="0 0 24 24" fill="none" stroke="#d6ab40" stroke-width="1.8" stroke-linecap="round" stroke-linejoin="round"><path d="M2.5 21.5 L4 15.5 L16.5 3 L21 7.5 L8.5 20 Z" fill="#fbf1d6"/><path d="M4 15.5 L8.5 20"/><path d="M14 5.5 L18.5 10"/></svg>
<svg class="abs" style="left:1850.30px;top:843.85px" width="13" height="13" viewBox="0 0 24 24" fill="none" stroke="#d83636" stroke-width="1.7" stroke-linecap="round" stroke-linejoin="round"><path d="M19 6v14a2 2 0 0 1-2 2H7a2 2 0 0 1-2-2V6" fill="#fde3e3"/><path d="M2.5 5.5h19" stroke-width="3.2"/><path d="M8 6V4a2 2 0 0 1 2-2h4a2 2 0 0 1 2 2v2"/><path d="M10 11v6"/><path d="M14 11v6"/></svg>
<div class="abs" style="left:292px;top:929.7px;width:1583px;height:1px;background:#e5e7eb;"></div>
<div class="abs" style="left:300.5px;top:891.75px;width:23.5px;height:23.5px;background:#f3e8ff;border-radius:7px;"></div>
<svg class="abs" style="left:305.70px;top:896.75px" width="13" height="13" viewBox="0 0 24 24" fill="none" stroke="#7a4fd6" stroke-width="2.1" stroke-linecap="round" stroke-linejoin="round"><path d="M12.00 2.00 L12.31 2.03 L12.62 2.11 L12.92 2.24 L13.21 2.44 L13.47 2.73 L13.67 3.23 L13.70 4.39 L13.86 4.76 L14.03 5.01 L14.21 5.21 L14.39 5.37 L14.58 5.49 L14.78 5.57 L15.00 5.62 L15.24 5.64 L15.50 5.62 L15.81 5.56 L16.18 5.42 L17.02 4.61 L17.52 4.41 L17.90 4.39 L18.25 4.45 L18.56 4.56 L18.83 4.73 L19.07 4.93 L19.27 5.17 L19.44 5.44 L19.55 5.75 L19.61 6.10 L19.59 6.48 L19.39 6.98 L18.58 7.82 L18.44 8.19 L18.38 8.50 L18.36 8.76 L18.38 9.00 L18.43 9.22 L18.51 9.42 L18.63 9.61 L18.79 9.79 L18.99 9.97 L19.24 10.14 L19.61 10.30 L20.77 10.33 L21.27 10.53 L21.56 10.79 L21.76 11.08 L21.89 11.38 L21.97 11.69 L22.00 12.00 L21.97 12.31 L21.89 12.62 L21.76 12.92 L21.56 13.21 L21.27 13.47 L20.77 13.67 L19.61 13.70 L19.24 13.86 L18.99 14.03 L18.79 14.21 L18.63 14.39 L18.51 14.58 L18.43 14.78 L18.38 15.00 L18.36 15.24 L18.38 15.50 L18.44 15.81 L18.58 16.18 L19.39 17.02 L19.59 17.52 L19.61 17.90 L19.55 18.25 L19.44 18.56 L19.27 18.83 L19.07 19.07 L18.83 19.27 L18.56 19.44 L18.25 19.55 L17.90 19.61 L17.52 19.59 L17.02 19.39 L16.18 18.58 L15.81 18.44 L15.50 18.38 L15.24 18.36 L15.00 18.38 L14.78 18.43 L14.58 18.51 L14.39 18.63 L14.21 18.79 L14.03 18.99 L13.86 19.24 L13.70 19.61 L13.67 20.77 L13.47 21.27 L13.21 21.56 L12.92 21.76 L12.62 21.89 L12.31 21.97 L12.00 22.00 L11.69 21.97 L11.38 21.89 L11.08 21.76 L10.79 21.56 L10.53 21.27 L10.33 20.77 L10.30 19.61 L10.14 19.24 L9.97 18.99 L9.79 18.79 L9.61 18.63 L9.42 18.51 L9.22 18.43 L9.00 18.38 L8.76 18.36 L8.50 18.38 L8.19 18.44 L7.82 18.58 L6.98 19.39 L6.48 19.59 L6.10 19.61 L5.75 19.55 L5.44 19.44 L5.17 19.27 L4.93 19.07 L4.73 18.83 L4.56 18.56 L4.45 18.25 L4.39 17.90 L4.41 17.52 L4.61 17.02 L5.42 16.18 L5.56 15.81 L5.62 15.50 L5.64 15.24 L5.62 15.00 L5.57 14.78 L5.49 14.58 L5.37 14.39 L5.21 14.21 L5.01 14.03 L4.76 13.86 L4.39 13.70 L3.23 13.67 L2.73 13.47 L2.44 13.21 L2.24 12.92 L2.11 12.62 L2.03 12.31 L2.00 12.00 L2.03 11.69 L2.11 11.38 L2.24 11.08 L2.44 10.79 L2.73 10.53 L3.23 10.33 L4.39 10.30 L4.76 10.14 L5.01 9.97 L5.21 9.79 L5.37 9.61 L5.49 9.42 L5.57 9.22 L5.62 9.00 L5.64 8.76 L5.62 8.50 L5.56 8.19 L5.42 7.82 L4.61 6.98 L4.41 6.48 L4.39 6.10 L4.45 5.75 L4.56 5.44 L4.73 5.17 L4.93 4.93 L5.17 4.73 L5.44 4.56 L5.75 4.45 L6.10 4.39 L6.48 4.41 L6.98 4.61 L7.82 5.42 L8.19 5.56 L8.50 5.62 L8.76 5.64 L9.00 5.62 L9.22 5.57 L9.42 5.49 L9.61 5.37 L9.79 5.21 L9.97 5.01 L10.14 4.76 L10.30 4.39 L10.33 3.23 L10.53 2.73 L10.79 2.44 L11.08 2.24 L11.38 2.11 L11.69 2.03Z"/><circle cx="12" cy="12" r="3.6"/></svg>
<div class="t" style="left:332.5px;top:888.40px;font-size:13px;color:#111827;font-weight:400;letter-spacing:0.13px;font-family:'Liberation Sans', sans-serif;">Network Switch 8-Port</div>
<div class="t" style="left:332.5px;top:905.34px;font-size:12px;color:#6b7280;font-weight:400;letter-spacing:0.25px;font-family:'Liberation Sans', sans-serif;">Cisco</div>
<svg class="abs" style="left:695.25px;top:896.50px" width="12.5" height="12.5" viewBox="0 0 24 24" fill="none" stroke="#6b7280" stroke-width="1.9" stroke-linecap="round" stroke-linejoin="round"><path d="M12.586 2.586A2 2 0 0 0 11.172 2H4a2 2 0 0 0-2 2v7.172a2 2 0 0 0 .586 1.414l8.704 8.704a2.426 2.426 0 0 0 3.42 0l6.58-6.58a2.426 2.426 0 0 0 0-3.42z"/><circle cx="7.5" cy="7.5" r=".5" fill="currentColor"/></svg>
<div class="t" style="left:712px;top:897.25px;font-size:13px;color:#1f2937;font-weight:400;letter-spacing:-0.12px;font-family:'Liberation Sans', sans-serif;">Network Equipment</div>
<div class="abs" style="left:920.5px;top:886.3px;width:0px;height:18px;background:#f3f4f6;border-radius:9px;padding:0;"></div>
<div class="abs" style="left:920.5px;top:886.30px;height:18.5px;background:#f3f4f6;border-radius:9px;padding:0 6px 0 22px;font-size:13px;font-weight:400;-webkit-text-stroke:0.2px #1f2937;color:#1f2937;letter-spacing:-0.45px;line-height:18.5px;white-space:nowrap">SW8P001</div>
<svg class="abs" style="left:928px;top:891.8px;" width="8" height="7" viewBox="0 0 8 7"><rect x="0" y="0" width="1.3" height="7" fill="#374151"/><rect x="2.2" y="0" width="0.9" height="7" fill="#374151"/><rect x="4" y="0" width="1.3" height="7" fill="#374151"/><rect x="6.4" y="0" width="1.3" height="7" fill="#374151"/></svg>
<svg class="abs" style="left:921.3px;top:909.0px;" width="9" height="10" viewBox="0 0 9 10"><g fill="none" stroke="#9ca3af" stroke-width="1.1"><circle cx="4.5" cy="2" r="1.4"/><path d="M4.5 3.4V5 M1.6 7.2V5H7.4V7.2"/><ellipse cx="1.6" cy="8.3" rx="1.1" ry="1.2"/><ellipse cx="7.4" cy="8.3" rx="1.1" ry="1.2"/></g></svg>
<div class="t" style="left:936.2px;top:908.14px;font-size:12px;color:#6b7280;font-weight:400;letter-spacing:0.22px;font-family:'Liberation Sans', sans-serif;">GS108-8P</div>
<div class="abs" style="left:1121.5px;top:895.85px;width:79px;height:19px;background:#e0f6e5;border-radius:10px;"></div>
<div class="abs" style="left:1127px;top:899.35px;width:12px;height:12px;background:#22a03c;border-radius:6px;"></div>
<div class="t" style="left:1143px;top:898.95px;font-size:13px;color:#279a47;font-weight:400;letter-spacing:-0.12px;font-family:'Liberation Sans', sans-serif;-webkit-text-stroke:0.12px #279a47;">Available</div>
<div class="abs" style="left:1304px;top:893.45px;width:84.5px;height:19.5px;background:#dbeafe;border-radius:10px;"></div>
<svg class="abs" style="left:1309.6px;top:897.25px;" width="13" height="12" viewBox="0 0 13 12"><g fill="none" stroke="#3a4ea6" stroke-width="1.2"><circle cx="6.5" cy="2" r="1.5"/><path d="M6.5 3.5V5.6 M2 8.2V5.6H11V8.2 M6.5 5.6V8.2"/><circle cx="2" cy="9.6" r="1.4"/><circle cx="6.5" cy="9.6" r="1.4"/><circle cx="11" cy="9.6" r="1.4"/></g></svg>
<div class="t" style="left:1326.5px;top:896.85px;font-size:13px;color:#2d3f9e;font-weight:400;letter-spacing:-0.11px;font-family:'Liberation Sans', sans-serif;-webkit-text-stroke:0.25px #2d3f9e;">Serialized</div>
<svg class="abs" style="left:1392.75px;top:897.00px" width="12.5" height="12.5" viewBox="0 0 24 24" fill="none" stroke="#28a048" stroke-width="1.7" stroke-linecap="round" stroke-linejoin="round"><circle cx="12" cy="12" r="10"/><path d="m9 12 2 2 4-4"/></svg>
<div class="t" style="left:1409.2px;top:896.85px;font-size:13px;color:#28a048;font-weight:400;letter-spacing:-0.1px;font-family:'Liberation Sans', sans-serif;">Available</div>
<svg class="abs" style="left:1778.50px;top:896.75px" width="13" height="13" viewBox="0 0 24 24" fill="none" stroke="#4a67d6" stroke-width="1.7" stroke-linecap="round" stroke-linejoin="round"><path d="M1.5 12C4 7 8 5 12 5s8 2 10.5 7C20 17 16 19 12 19S4 17 1.5 12Z"/><circle cx="12" cy="12" r="4.6"/></svg>
<svg class="abs" style="left:1802.20px;top:896.75px" width="13" height="13" viewBox="0 0 24 24" fill="none" stroke="#55a066" stroke-width="1.8" stroke-linecap="round" stroke-linejoin="round"><path d="M14 5H5a1 1 0 0 0-1 1v12a1 1 0 0 0 1 1h9"/><path d="M14 5v3"/><path d="M14 16v3"/><path d="M9 12h12"/><path d="m17 8 4 4-4 4"/></svg>
<svg class="abs" style="left:1826.00px;top:896.75px" width="13" height="13" viewBox="0 0 24 24" fill="none" stroke="#d6ab40" stroke-width="1.8" stroke-linecap="round" stroke-linejoin="round"><path d="M2.5 21.5 L4 15.5 L16.5 3 L21 7.5 L8.5 20 Z" fill="#fbf1d6"/><path d="M4 15.5 L8.5 20"/><path d="M14 5.5 L18.5 10"/></svg>
<svg class="abs" style="left:1850.30px;top:896.75px" width="13" height="13" viewBox="0 0 24 24" fill="none" stroke="#d83636" stroke-width="1.7" stroke-linecap="round" stroke-linejoin="round"><path d="M19 6v14a2 2 0 0 1-2 2H7a2 2 0 0 1-2-2V6" fill="#fde3e3"/><path d="M2.5 5.5h19" stroke-width="3.2"/><path d="M8 6V4a2 2 0 0 1 2-2h4a2 2 0 0 1 2 2v2"/><path d="M10 11v6"/><path d="M14 11v6"/></svg>
<div class="t" style="left:308.3px;top:948.80px;font-size:13px;color:#4b5563;font-weight:400;letter-spacing:-0.24px;font-family:'Liberation Sans', sans-serif;">Showing page 1 of 3</div>
<div class="abs" style="left:1734px;top:939px;width:124.5px;height:33px;background:#ffffff;border:1px solid #d1d5db;border-radius:6px;box-sizing:border-box;"></div>
<div class="abs" style="left:1734px;top:939px;width:31px;height:33px;background:#eef5fd;border:1px solid #3d6fd2;border-radius:0;box-sizing:border-box;"></div>
<div class="abs" style="left:1796px;top:940px;width:1px;height:31px;background:#d1d5db;"></div>
<div class="abs" style="left:1828.5px;top:940px;width:1px;height:31px;background:#d1d5db;"></div>
<div class="t" style="left:1449.5px;width:600px;text-align:center;top:949.00px;font-size:13px;color:#2f5fc8;font-weight:400;letter-spacing:0px;font-family:'Liberation Sans', sans-serif;">1</div>
<div class="t" style="left:1480.5px;width:600px;text-align:center;top:949.00px;font-size:13px;color:#4b5563;font-weight:400;letter-spacing:0px;font-family:'Liberation Sans', sans-serif;">2</div>
<div class="t" style="left:1512.5px;width:600px;text-align:center;top:949.00px;font-size:13px;color:#4b5563;font-weight:400;letter-spacing:0px;font-family:'Liberation Sans', sans-serif;">3</div>
<svg class="abs" style="left:1835.00px;top:947.00px" width="17" height="17" viewBox="0 0 24 24" fill="none" stroke="#6b7280" stroke-width="1.4" stroke-linecap="round" stroke-linejoin="round"><path d="m9 18 6-6-6-6"/></svg>
<div class="abs" style="left:3px;top:121px;width:256px;height:57px;background:#f3f3f3;"></div>
<div class="abs" style="left:258px;top:121px;width:26px;height:56px;background:linear-gradient(90deg,#f3f3f3,#fbfbfb 50%,#ffffff);"></div>
<div class="t" style="left:51px;top:134.74px;font-size:25.5px;color:#161616;font-weight:400;letter-spacing:-0.42px;font-family:'Liberation Serif', serif;">Assentra</div>
<div class="abs" style="left:3px;top:178px;width:256px;height:854px;background:linear-gradient(180deg,#121a2b 0%,#182133 25%,#1d2738 55%,#1a2334 75%,#111827 100%);"></div>
<div class="abs" style="left:15px;top:189px;width:32px;height:32px;background:linear-gradient(135deg,#2d7cf0,#1aa3d6);border-radius:8px;box-shadow:0 2px 6px rgba(0,60,160,.35);"></div>
<svg class="abs" style="left:23px;top:196px;" width="16" height="16" viewBox="0 0 16 16"><circle cx="8" cy="5" r="2.6" fill="#fff"/><path d="M3 12.6 C3 10 5 8.8 8 8.8 C11 8.8 13 10 13 12.6 Z" fill="#fff"/></svg>
<div class="t" style="left:55px;top:190.00px;font-size:13px;color:#ffffff;font-weight:400;letter-spacing:0.22px;font-family:'Liberation Sans', sans-serif;-webkit-text-stroke:0.3px #ffffff;">System Administrator</div>
<div class="t" style="left:55px;top:206.44px;font-size:12px;color:#9aa3b2;font-weight:400;letter-spacing:0.45px;font-family:'Liberation Sans', sans-serif;">Admin</div>
<div class="abs" style="left:3px;top:233px;width:256px;height:1px;background:#253044;"></div>
<svg class="abs" style="left:28.50px;top:247.20px" width="13" height="13" viewBox="0 0 24 24" fill="none" stroke="#9aa3b0" stroke-width="1.8" stroke-linecap="round" stroke-linejoin="round"><path d="m12 14 4-4"/><path d="M3.34 19a10 10 0 1 1 17.32 0"/></svg>
<div class="t" style="left:51px;top:247.20px;font-size:13px;color:#d5d9e0;font-weight:400;letter-spacing:-0.02px;font-family:'Liberation Sans', sans-serif;-webkit-text-stroke:0.3px #d5d9e0;">Dashboard</div>
<svg class="abs" style="left:28.50px;top:281.20px" width="13" height="13" viewBox="0 0 24 24" fill="none" stroke="#9aa3b0" stroke-width="1.8" stroke-linecap="round" stroke-linejoin="round"><path d="M20 16V7a2 2 0 0 0-2-2H6a2 2 0 0 0-2 2v9m16 0H4m16 0 1.28 2.55a1 1 0 0 1-.9 1.45H3.62a1 1 0 0 1-.9-1.45L4 16"/></svg>
<div class="t" style="left:51px;top:281.20px;font-size:13px;color:#d5d9e0;font-weight:400;letter-spacing:-0.3px;font-family:'Liberation Sans', sans-serif;-webkit-text-stroke:0.3px #d5d9e0;">Assets</div>
<svg class="abs" style="left:28.50px;top:315.20px" width="13" height="13" viewBox="0 0 24 24" fill="none" stroke="#9aa3b0" stroke-width="1.8" stroke-linecap="round" stroke-linejoin="round"><circle cx="7.5" cy="12" r="4.5"/><path d="M12 12h10"/><path d="M18 12v3"/><path d="M21 12v2"/></svg>
<div class="t" style="left:51px;top:315.20px;font-size:13px;color:#d5d9e0;font-weight:400;letter-spacing:-0.06px;font-family:'Liberation Sans', sans-serif;-webkit-text-stroke:0.3px #d5d9e0;">Licenses</div>
<svg class="abs" style="left:28.50px;top:349.20px" width="13" height="13" viewBox="0 0 24 24" fill="none" stroke="#9aa3b0" stroke-width="1.8" stroke-linecap="round" stroke-linejoin="round"><path d="M21 8a2 2 0 0 0-1-1.73l-7-4a2 2 0 0 0-2 0l-7 4A2 2 0 0 0 3 8v8a2 2 0 0 0 1 1.73l7 4a2 2 0 0 0 2 0l7-4A2 2 0 0 0 21 16Z"/><path d="m3.3 7 8.7 5 8.7-5"/><path d="M12 22V12"/></svg>
<div class="t" style="left:51px;top:349.20px;font-size:13px;color:#d5d9e0;font-weight:400;letter-spacing:-0.16px;font-family:'Liberation Sans', sans-serif;-webkit-text-stroke:0.3px #d5d9e0;">Consumables</div>
<div class="abs" style="left:15px;top:374px;width:231px;height:32px;background:linear-gradient(90deg,#3a86f4 0%,#22a2e6 55%,#12b4dc 100%);border-radius:8px;box-shadow:0 4px 14px rgba(37,130,235,.45);"></div>
<svg class="abs" style="left:28.5px;top:383.3px;" width="13" height="13" viewBox="0 0 13 13"><g stroke="#9fbde6" stroke-linecap="round"><path d="M2.5 2.5 L10.5 10.5" stroke-width="1.8"/><path d="M10.5 2.5 L2.5 10.5" stroke-width="1.8"/><path d="M1.3 1.3 L3.3 3.3 M9.7 9.7 L11.7 11.7 M11.7 1.3 L9.7 3.3 M1.3 11.7 L3.3 9.7" stroke-width="3"/></g></svg>
<div class="t" style="left:51px;top:383.30px;font-size:13px;color:#ffffff;font-weight:400;letter-spacing:-0.07px;font-family:'Liberation Sans', sans-serif;-webkit-text-stroke:0.4px #ffffff;">Accessories</div>
<svg class="abs" style="left:220.00px;top:382.00px" width="16" height="16" viewBox="0 0 24 24" fill="none" stroke="#ffffff" stroke-width="2" stroke-linecap="round" stroke-linejoin="round"><path d="m9 18 6-6-6-6"/></svg>
<svg class="abs" style="left:28.50px;top:417.30px" width="13" height="13" viewBox="0 0 24 24" fill="none" stroke="#9aa3b0" stroke-width="1.8" stroke-linecap="round" stroke-linejoin="round"><rect width="5" height="5" x="3" y="3" rx="1"/><rect width="5" height="5" x="16" y="3" rx="1"/><rect width="5" height="5" x="3" y="16" rx="1"/><path d="M21 16h-3a2 2 0 0 0-2 2v3"/><path d="M21 21v.01"/><path d="M12 7v3a2 2 0 0 1-2 2H7"/><path d="M3 12h.01"/><path d="M12 3h.01"/><path d="M12 16v.01"/><path d="M16 12h1"/><path d="M21 12v.01"/><path d="M12 21v-1"/></svg>
<div class="t" style="left:51px;top:417.30px;font-size:13px;color:#d5d9e0;font-weight:400;letter-spacing:-0.42px;font-family:'Liberation Sans', sans-serif;-webkit-text-stroke:0.3px #d5d9e0;">Scan QR Code</div>
<svg class="abs" style="left:28.50px;top:454.00px" width="13" height="13" viewBox="0 0 24 24" fill="none" stroke="#9aa3b0" stroke-width="1.8" stroke-linecap="round" stroke-linejoin="round"><rect width="18" height="18" x="3" y="3" rx="2"/><path d="M8 7v7"/><path d="M12 7v4"/><path d="M16 7v9"/></svg>
<div class="t" style="left:51px;top:454.00px;font-size:13px;color:#d5d9e0;font-weight:400;letter-spacing:-0.15px;font-family:'Liberation Sans', sans-serif;-webkit-text-stroke:0.3px #d5d9e0;">Request Management</div>
<svg class="abs" style="left:28.50px;top:488.00px" width="13" height="13" viewBox="0 0 24 24" fill="none" stroke="#9aa3b0" stroke-width="1.8" stroke-linecap="round" stroke-linejoin="round"><path d="M2 9a3 3 0 0 1 0 6v2a2 2 0 0 0 2 2h16a2 2 0 0 0 2-2v-2a3 3 0 0 1 0-6V7a2 2 0 0 0-2-2H4a2 2 0 0 0-2 2Z"/><path d="M13 5v2"/><path d="M13 17v2"/><path d="M13 11v2"/></svg>
<div class="t" style="left:51px;top:488.00px;font-size:13px;color:#d5d9e0;font-weight:400;letter-spacing:-0.01px;font-family:'Liberation Sans', sans-serif;-webkit-text-stroke:0.3px #d5d9e0;">Support Tickets</div>
<svg class="abs" style="left:28.50px;top:525.00px" width="13" height="13" viewBox="0 0 24 24" fill="none" stroke="#9aa3b0" stroke-width="1.8" stroke-linecap="round" stroke-linejoin="round"><path d="M15 2H6a2 2 0 0 0-2 2v16a2 2 0 0 0 2 2h12a2 2 0 0 0 2-2V7Z"/><path d="M14 2v4a2 2 0 0 0 2 2h4"/><path d="M8 18v-2"/><path d="M12 18v-4"/><path d="M16 18v-6"/></svg>
<div class="t" style="left:51px;top:525.00px;font-size:13px;color:#d5d9e0;font-weight:400;letter-spacing:-0.12px;font-family:'Liberation Sans', sans-serif;-webkit-text-stroke:0.3px #d5d9e0;">Reports</div>
<svg class="abs" style="left:28.50px;top:559.00px" width="13" height="13" viewBox="0 0 24 24" fill="none" stroke="#9aa3b0" stroke-width="1.8" stroke-linecap="round" stroke-linejoin="round"><path d="M20 20a2 2 0 0 0 2-2V8a2 2 0 0 0-2-2h-7.9a2 2 0 0 1-1.69-.9L9.6 3.9A2 2 0 0 0 7.93 3H4a2 2 0 0 0-2 2v13a2 2 0 0 0 2 2Z"/></svg>
<div class="t" style="left:51px;top:559.00px;font-size:13px;color:#d5d9e0;font-weight:400;letter-spacing:-0.05px;font-family:'Liberation Sans', sans-serif;-webkit-text-stroke:0.3px #d5d9e0;">Documents</div>
<svg class="abs" style="left:28.50px;top:596.00px" width="13" height="13" viewBox="0 0 24 24" fill="none" stroke="#9aa3b0" stroke-width="1.8" stroke-linecap="round" stroke-linejoin="round"><path d="M12.00 2.00 L12.31 2.03 L12.62 2.11 L12.92 2.24 L13.21 2.44 L13.47 2.73 L13.67 3.23 L13.70 4.39 L13.86 4.76 L14.03 5.01 L14.21 5.21 L14.39 5.37 L14.58 5.49 L14.78 5.57 L15.00 5.62 L15.24 5.64 L15.50 5.62 L15.81 5.56 L16.18 5.42 L17.02 4.61 L17.52 4.41 L17.90 4.39 L18.25 4.45 L18.56 4.56 L18.83 4.73 L19.07 4.93 L19.27 5.17 L19.44 5.44 L19.55 5.75 L19.61 6.10 L19.59 6.48 L19.39 6.98 L18.58 7.82 L18.44 8.19 L18.38 8.50 L18.36 8.76 L18.38 9.00 L18.43 9.22 L18.51 9.42 L18.63 9.61 L18.79 9.79 L18.99 9.97 L19.24 10.14 L19.61 10.30 L20.77 10.33 L21.27 10.53 L21.56 10.79 L21.76 11.08 L21.89 11.38 L21.97 11.69 L22.00 12.00 L21.97 12.31 L21.89 12.62 L21.76 12.92 L21.56 13.21 L21.27 13.47 L20.77 13.67 L19.61 13.70 L19.24 13.86 L18.99 14.03 L18.79 14.21 L18.63 14.39 L18.51 14.58 L18.43 14.78 L18.38 15.00 L18.36 15.24 L18.38 15.50 L18.44 15.81 L18.58 16.18 L19.39 17.02 L19.59 17.52 L19.61 17.90 L19.55 18.25 L19.44 18.56 L19.27 18.83 L19.07 19.07 L18.83 19.27 L18.56 19.44 L18.25 19.55 L17.90 19.61 L17.52 19.59 L17.02 19.39 L16.18 18.58 L15.81 18.44 L15.50 18.38 L15.24 18.36 L15.00 18.38 L14.78 18.43 L14.58 18.51 L14.39 18.63 L14.21 18.79 L14.03 18.99 L13.86 19.24 L13.70 19.61 L13.67 20.77 L13.47 21.27 L13.21 21.56 L12.92 21.76 L12.62 21.89 L12.31 21.97 L12.00 22.00 L11.69 21.97 L11.38 21.89 L11.08 21.76 L10.79 21.56 L10.53 21.27 L10.33 20.77 L10.30 19.61 L10.14 19.24 L9.97 18.99 L9.79 18.79 L9.61 18.63 L9.42 18.51 L9.22 18.43 L9.00 18.38 L8.76 18.36 L8.50 18.38 L8.19 18.44 L7.82 18.58 L6.98 19.39 L6.48 19.59 L6.10 19.61 L5.75 19.55 L5.44 19.44 L5.17 19.27 L4.93 19.07 L4.73 18.83 L4.56 18.56 L4.45 18.25 L4.39 17.90 L4.41 17.52 L4.61 17.02 L5.42 16.18 L5.56 15.81 L5.62 15.50 L5.64 15.24 L5.62 15.00 L5.57 14.78 L5.49 14.58 L5.37 14.39 L5.21 14.21 L5.01 14.03 L4.76 13.86 L4.39 13.70 L3.23 13.67 L2.73 13.47 L2.44 13.21 L2.24 12.92 L2.11 12.62 L2.03 12.31 L2.00 12.00 L2.03 11.69 L2.11 11.38 L2.24 11.08 L2.44 10.79 L2.73 10.53 L3.23 10.33 L4.39 10.30 L4.76 10.14 L5.01 9.97 L5.21 9.79 L5.37 9.61 L5.49 9.42 L5.57 9.22 L5.62 9.00 L5.64 8.76 L5.62 8.50 L5.56 8.19 L5.42 7.82 L4.61 6.98 L4.41 6.48 L4.39 6.10 L4.45 5.75 L4.56 5.44 L4.73 5.17 L4.93 4.93 L5.17 4.73 L5.44 4.56 L5.75 4.45 L6.10 4.39 L6.48 4.41 L6.98 4.61 L7.82 5.42 L8.19 5.56 L8.50 5.62 L8.76 5.64 L9.00 5.62 L9.22 5.57 L9.42 5.49 L9.61 5.37 L9.79 5.21 L9.97 5.01 L10.14 4.76 L10.30 4.39 L10.33 3.23 L10.53 2.73 L10.79 2.44 L11.08 2.24 L11.38 2.11 L11.69 2.03Z"/><circle cx="12" cy="12" r="3.6"/></svg>
<div class="t" style="left:51px;top:596.00px;font-size:13px;color:#d5d9e0;font-weight:400;letter-spacing:-0.14px;font-family:'Liberation Sans', sans-serif;-webkit-text-stroke:0.3px #d5d9e0;">Settings</div>
<div class="abs" style="left:16px;top:442px;width:231px;height:1px;background:#2a3547;"></div>
<div class="abs" style="left:16px;top:513px;width:231px;height:1px;background:#2a3547;"></div>
<div class="abs" style="left:16px;top:584px;width:231px;height:1px;background:#2a3547;"></div>
<div class="abs" style="left:3px;top:981px;width:256px;height:1px;background:#263042;"></div>
<div class="t" style="left:-169.8px;width:600px;text-align:center;top:991.84px;font-size:12px;color:#6b7280;font-weight:400;letter-spacing:0.38px;font-family:'Liberation Sans', sans-serif;">IT Asset Management</div>
<div class="t" style="left:-169.4px;width:600px;text-align:center;top:1009.84px;font-size:12px;color:#6b7280;font-weight:400;letter-spacing:0.05px;font-family:'Liberation Sans', sans-serif;">Version 2.1.0</div>
<div class="abs" style="left:0px;top:1032px;width:1923px;height:48px;background:linear-gradient(90deg,#cfe8d2 0%,#d3eacb 30%,#d6ebc4 50%,#dfeeb3 70%,#e7f0a4 88%,#eaf0a0 100%);border-top:1px solid #b9c8ae;box-sizing:border-box;"></div>
<svg class="abs" style="left:22px;top:1043px;" width="24" height="24" viewBox="0 0 24 24"><defs><linearGradient id="mg" x1="0" y1="0" x2="1" y2="1"><stop offset="0" stop-color="#ffc23a"/><stop offset="1" stop-color="#f0720c"/></linearGradient></defs><path d="M20.5 2.5 A12.5 12.5 0 0 1 2.5 20.5 A24 24 0 0 0 20.5 2.5 Z" fill="url(#mg)"/></svg>
<div class="t" style="left:53.6px;top:1041.64px;font-size:12px;color:#1a1a1a;font-weight:400;letter-spacing:0px;font-family:'Liberation Sans', sans-serif;-webkit-text-stroke:0.3px #1a1a1a;">90°F</div>
<div class="t" style="left:53.6px;top:1057.64px;font-size:12px;color:#3a3a3a;font-weight:400;letter-spacing:0.1px;font-family:'Liberation Sans', sans-serif;">Clear</div>
<svg class="abs" style="left:575px;top:1045px;" width="24" height="24" viewBox="0 0 24 24"><defs><linearGradient id="wg" x1="0" y1="0" x2="1" y2="1"><stop offset="0" stop-color="#2bb0f5"/><stop offset="1" stop-color="#0a6fd6"/></linearGradient></defs><rect x="0" y="0" width="11.3" height="11.3" fill="url(#wg)"/><rect x="12.7" y="0" width="11.3" height="11.3" fill="url(#wg)"/><rect x="0" y="12.7" width="11.3" height="11.3" fill="url(#wg)"/><rect x="12.7" y="12.7" width="11.3" height="11.3" fill="url(#wg)"/></svg>
<div class="abs" style="left:613px;top:1041px;width:218px;height:30.5px;background:rgba(255,255,255,.6);border-radius:15px;border:1px solid rgba(0,0,0,.08);box-sizing:border-box;"></div>
<svg class="abs" style="left:623.50px;top:1048.00px" width="15" height="15" viewBox="0 0 24 24" fill="none" stroke="#1f1f1f" stroke-width="2.4" stroke-linecap="round" stroke-linejoin="round"><circle cx="11" cy="11" r="8"/><path d="m21 21-4.3-4.3"/></svg>
<div class="t" style="left:649px;top:1048.65px;font-size:14px;color:#575757;font-weight:400;letter-spacing:-0.5px;font-family:'Liberation Sans', sans-serif;">Search</div>
<svg class="abs" style="left:844px;top:1044px;" width="24" height="24" viewBox="0 0 24 24"><defs><linearGradient id="tv" x1="0" y1="0" x2="1" y2="1"><stop offset="0" stop-color="#ffffff"/><stop offset="1" stop-color="#d0d0d0"/></linearGradient></defs><rect x="2" y="7" width="14" height="16" fill="#1e1e1e"/><rect x="7" y="1.5" width="14" height="14" fill="url(#tv)"/><rect x="7" y="7" width="9" height="8.5" fill="#9a9a9a" opacity=".7"/></svg>
<svg class="abs" style="left:888px;top:1044px;" width="24" height="24" viewBox="0 0 24 24"><defs><linearGradient id="cp1" x1="0" y1="0" x2="0" y2="1"><stop offset="0" stop-color="#1b6ff0"/><stop offset=".5" stop-color="#27b5d8"/><stop offset="1" stop-color="#f2c21a"/></linearGradient><linearGradient id="cp2" x1="0" y1="0" x2="0" y2="1"><stop offset="0" stop-color="#8a4ff0"/><stop offset=".5" stop-color="#e44fc0"/><stop offset="1" stop-color="#f5773a"/></linearGradient></defs><path d="M9 2 H15 Q17 2 16.3 4.5 L12 19 Q11 22 8 22 H4 Q1.5 22 2.3 19 L6.5 4.5 Q7 2 9 2Z" fill="url(#cp1)"/><path d="M16 2 H20 Q22.5 2 21.7 5 L17.5 19.5 Q17 22 15 22 H9 Q12 22 12.8 19 L16 8Z" fill="url(#cp2)"/></svg>
<svg class="abs" style="left:931px;top:1044px;" width="24" height="24" viewBox="0 0 24 24"><path d="M2 5 Q2 3 4 3 H9 L11 5 H20 Q22 5 22 7 V19 Q22 21 20 21 H4 Q2 21 2 19Z" fill="#f5b50a"/><rect x="2" y="8" width="20" height="13" rx="1.5" fill="#ffd54a"/><rect x="7" y="15" width="10" height="3" fill="#2a7fd4"/></svg>
<div class="abs" style="left:940.4px;top:1072px;width:6px;height:3px;background:#7a7f7a;border-radius:2px;"></div>
<svg class="abs" style="left:976px;top:1044px;" width="24" height="24" viewBox="0 0 24 24"><path d="M12 12 L2.47 6.50 A11 11 0 0 1 21.53 6.50 Z" fill="#e0412f"/><path d="M12 12 L21.53 6.50 A11 11 0 0 1 12.00 23.00 Z" fill="#fbc02d"/><path d="M12 12 L12.00 23.00 A11 11 0 0 1 2.47 6.50 Z" fill="#1e9e50"/><circle cx="12" cy="12" r="5.2" fill="#fff"/><circle cx="12" cy="12" r="4.1" fill="#1a73e8"/></svg>
<svg class="abs" style="left:1019px;top:1044px;" width="24" height="24" viewBox="0 0 24 24"><defs><linearGradient id="eg" x1="0" y1="0" x2="1" y2="1"><stop offset="0" stop-color="#35c1f1"/><stop offset="1" stop-color="#1f8f3f"/></linearGradient></defs><circle cx="12" cy="12" r="11" fill="url(#eg)"/><circle cx="13" cy="13" r="5" fill="#d8ecd0"/><rect x="3" y="13" width="10" height="8" rx="1" fill="#c8852a"/></svg>
<div class="abs" style="left:1028.0px;top:1072px;width:6px;height:3px;background:#7a7f7a;border-radius:2px;"></div>
<svg class="abs" style="left:1063px;top:1044px;" width="24" height="24" viewBox="0 0 24 24"><path d="M8 6 Q8 2 12 2 Q16 2 16 6" stroke="#1b4f9a" stroke-width="1.5" fill="none"/><rect x="2" y="6" width="20" height="16" rx="3" fill="#1c5fb5"/><rect x="8" y="10" width="3.5" height="3.5" fill="#f25022"/><rect x="12.5" y="10" width="3.5" height="3.5" fill="#7fba00"/><rect x="8" y="14.5" width="3.5" height="3.5" fill="#00a4ef"/><rect x="12.5" y="14.5" width="3.5" height="3.5" fill="#ffb900"/></svg>
<div class="abs" style="left:1101.5px;top:1040px;width:36.5px;height:34px;background:rgba(255,255,255,.45);border-radius:5px;"></div>
<svg class="abs" style="left:1108px;top:1045px;" width="24" height="24" viewBox="0 0 24 24"><path d="M12 12 L2.47 6.50 A11 11 0 0 1 21.53 6.50 Z" fill="#e0412f"/><path d="M12 12 L21.53 6.50 A11 11 0 0 1 12.00 23.00 Z" fill="#fbc02d"/><path d="M12 12 L12.00 23.00 A11 11 0 0 1 2.47 6.50 Z" fill="#1e9e50"/><circle cx="12" cy="12" r="5.2" fill="#fff"/><circle cx="12" cy="12" r="4.1" fill="#1a73e8"/></svg>
<svg class="abs" style="left:1121px;top:1038px;" width="15" height="15" viewBox="0 0 20 20"><defs><clipPath id="av2"><circle cx="10" cy="10" r="10"/></clipPath></defs><g clip-path="url(#av2)"><rect width="20" height="20" fill="#cfcfcf"/><ellipse cx="10" cy="9" rx="4.2" ry="5" fill="#a8755a"/><path d="M5.6 7.5 Q6 3 10 3 Q14 3 14.4 7.5 Q12 5.5 10 5.6 Q8 5.5 5.6 7.5Z" fill="#2a1f1a"/><path d="M2 20 Q3 14 10 14 Q17 14 18 20Z" fill="#2b3aa8"/></g></svg>
<div class="abs" style="left:1112px;top:1072px;width:16px;height:3px;background:#2f6fd6;border-radius:2px;"></div>
<svg class="abs" style="left:1152px;top:1044px;" width="24" height="24" viewBox="0 0 24 24"><rect x="6" y="2" width="16" height="20" rx="2" fill="#21a366"/><rect x="6" y="12" width="16" height="10" rx="1" fill="#107c41"/><rect x="2" y="6" width="11" height="12" rx="1.5" fill="#185c37"/><path d="M4.5 8.5 L10.5 15.5 M10.5 8.5 L4.5 15.5" stroke="#fff" stroke-width="1.6"/></svg>
<div class="abs" style="left:1161.5px;top:1072px;width:6px;height:3px;background:#7a7f7a;border-radius:2px;"></div>
<svg class="abs" style="left:1197px;top:1044px;" width="24" height="24" viewBox="0 0 24 24"><rect x="2" y="2" width="20" height="20" rx="5" fill="#111"/><path d="M7 9 L12 6 L17 9 V15 L12 18 L7 15Z" fill="#e8e8e8"/><path d="M7 9 L12 12 L17 9 M12 12 V18" stroke="#777" stroke-width="1"/></svg>
<div class="abs" style="left:1206.0px;top:1072px;width:6px;height:3px;background:#7a7f7a;border-radius:2px;"></div>
<svg class="abs" style="left:1241px;top:1044px;" width="24" height="24" viewBox="0 0 24 24"><path d="M8 4 Q12 0 16 3 Q12 4 11 8 Q9 6 8 4Z" fill="#5a9e3a"/><path d="M18 6 Q22 9 20 14 Q18 11 15 11 Q17 9 18 6Z" fill="#24408e"/><path d="M14 14 Q11 18 13 23 Q8 20 9 15 Q10 12 14 14Z" fill="#c0261e"/><path d="M9 12 Q5 10 3 14 Q2 10 5 8 Q8 7 9 12Z" fill="#e8a030"/></svg>
<div class="abs" style="left:1250.7px;top:1072px;width:6px;height:3px;background:#7a7f7a;border-radius:2px;"></div>
<svg class="abs" style="left:1285px;top:1044px;" width="24" height="24" viewBox="0 0 24 24"><defs><linearGradient id="ph" x1="0" y1="0" x2="1" y2="1"><stop offset="0" stop-color="#2f7fe0"/><stop offset="1" stop-color="#6a4fd8"/></linearGradient></defs><rect x="2" y="2" width="20" height="20" rx="3" fill="url(#ph)"/><path d="M2 17 L11 9 Q12 8 13 9 L22 17 V19 Q22 22 19 22 H5 Q2 22 2 19Z" fill="#38b4f0"/><circle cx="17" cy="6.5" r="2" fill="#e8f4ff"/></svg>
<div class="abs" style="left:1294.5px;top:1072px;width:6px;height:3px;background:#7a7f7a;border-radius:2px;"></div>
<div class="t" style="right:19.299999999999955px;top:1041.84px;font-size:12px;color:#2a2a2a;font-weight:400;letter-spacing:-0.1px;font-family:'Liberation Sans', sans-serif;">1:07 AM</div>
<div class="t" style="right:19.299999999999955px;top:1057.84px;font-size:12px;color:#2a2a2a;font-weight:400;letter-spacing:0.15px;font-family:'Liberation Sans', sans-serif;">6/29/2025</div>
</body></html>
